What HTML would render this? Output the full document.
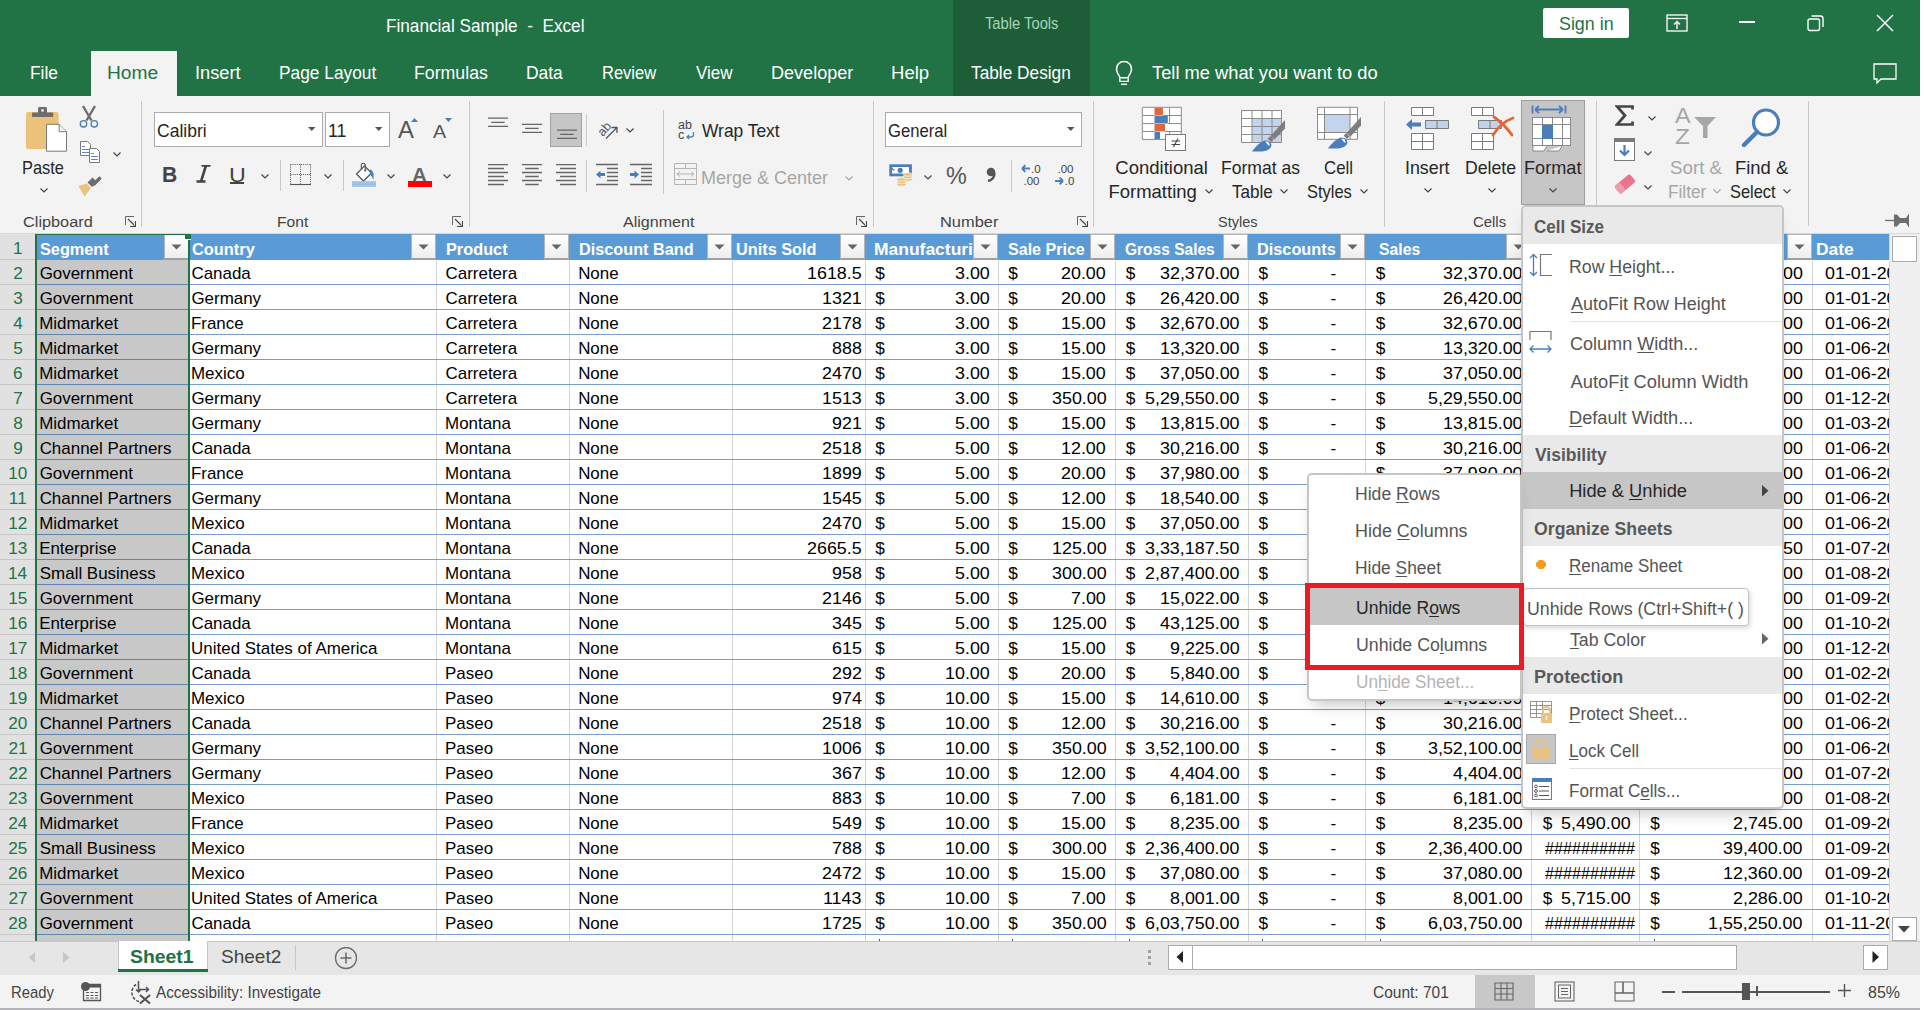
<!DOCTYPE html>
<html><head><meta charset="utf-8"><style>
html,body{margin:0;padding:0;}
body{width:1924px;height:1010px;overflow:hidden;position:relative;background:#fff;font-family:'Liberation Sans',sans-serif;}
u{text-decoration:underline;text-decoration-thickness:1px;text-underline-offset:2px;}
</style></head><body>
<div style="position:absolute;left:0px;top:0px;width:1920px;height:96px;background:#217346;"></div>
<div style="position:absolute;left:953px;top:0px;width:137px;height:96px;background:#1D5E39;"></div>
<div style="position:absolute;left:1920px;top:0px;width:4px;height:1010px;background:#FFFFFF;"></div>
<div style="position:absolute;left:385.63px;top:17.14px;font-family:'Liberation Sans',sans-serif;font-size:18.5px;line-height:18.5px;color:#fff;font-weight:normal;white-space:pre;transform:scaleX(0.9279);transform-origin:0 0;">Financial Sample  -  Excel</div>
<div style="position:absolute;left:984.71px;top:16.26px;font-family:'Liberation Sans',sans-serif;font-size:16px;line-height:16px;color:#A7D3B6;font-weight:normal;white-space:pre;transform:scaleX(0.9212);transform-origin:0 0;">Table Tools</div>
<div style="position:absolute;left:91px;top:51px;width:86px;height:45px;background:#F3F3F3;"></div>
<div style="position:absolute;left:29.61px;top:64.19px;font-family:'Liberation Sans',sans-serif;font-size:18.8px;line-height:18.8px;color:#fff;font-weight:normal;white-space:pre;transform:scaleX(0.9250);transform-origin:0 0;">File</div>
<div style="position:absolute;left:195.36px;top:64.19px;font-family:'Liberation Sans',sans-serif;font-size:18.8px;line-height:18.8px;color:#fff;font-weight:normal;white-space:pre;transform:scaleX(0.9699);transform-origin:0 0;">Insert</div>
<div style="position:absolute;left:278.61px;top:64.19px;font-family:'Liberation Sans',sans-serif;font-size:18.8px;line-height:18.8px;color:#fff;font-weight:normal;white-space:pre;transform:scaleX(0.9221);transform-origin:0 0;">Page Layout</div>
<div style="position:absolute;left:413.58px;top:64.19px;font-family:'Liberation Sans',sans-serif;font-size:18.8px;line-height:18.8px;color:#fff;font-weight:normal;white-space:pre;transform:scaleX(0.9439);transform-origin:0 0;">Formulas</div>
<div style="position:absolute;left:526.11px;top:64.19px;font-family:'Liberation Sans',sans-serif;font-size:18.8px;line-height:18.8px;color:#fff;font-weight:normal;white-space:pre;transform:scaleX(0.9274);transform-origin:0 0;">Data</div>
<div style="position:absolute;left:601.68px;top:64.19px;font-family:'Liberation Sans',sans-serif;font-size:18.8px;line-height:18.8px;color:#fff;font-weight:normal;white-space:pre;transform:scaleX(0.8792);transform-origin:0 0;">Review</div>
<div style="position:absolute;left:696.00px;top:64.19px;font-family:'Liberation Sans',sans-serif;font-size:18.8px;line-height:18.8px;color:#fff;font-weight:normal;white-space:pre;transform:scaleX(0.9049);transform-origin:0 0;">View</div>
<div style="position:absolute;left:770.55px;top:64.19px;font-family:'Liberation Sans',sans-serif;font-size:18.8px;line-height:18.8px;color:#fff;font-weight:normal;white-space:pre;transform:scaleX(0.9614);transform-origin:0 0;">Developer</div>
<div style="position:absolute;left:890.52px;top:64.19px;font-family:'Liberation Sans',sans-serif;font-size:18.8px;line-height:18.8px;color:#fff;font-weight:normal;white-space:pre;transform:scaleX(0.9868);transform-origin:0 0;">Help</div>
<div style="position:absolute;left:971.45px;top:64.19px;font-family:'Liberation Sans',sans-serif;font-size:18.8px;line-height:18.8px;color:#fff;font-weight:normal;white-space:pre;transform:scaleX(0.9193);transform-origin:0 0;">Table Design</div>
<div style="position:absolute;left:107.46px;top:64.19px;font-family:'Liberation Sans',sans-serif;font-size:18.8px;line-height:18.8px;color:#217346;font-weight:normal;white-space:pre;transform:scaleX(1.0216);transform-origin:0 0;">Home</div>
<div style="position:absolute;left:1152.03px;top:64.19px;font-family:'Liberation Sans',sans-serif;font-size:18.8px;line-height:18.8px;color:#fff;font-weight:normal;white-space:pre;transform:scaleX(0.9739);transform-origin:0 0;">Tell me what you want to do</div>
<div style="position:absolute;left:1543px;top:8px;width:86px;height:30px;background:#fff;border-radius:2px;"></div>
<div style="position:absolute;left:1558.79px;top:15.29px;font-family:'Liberation Sans',sans-serif;font-size:18.8px;line-height:18.8px;color:#217346;font-weight:normal;white-space:pre;transform:scaleX(0.9501);transform-origin:0 0;">Sign in</div>
<div style="position:absolute;left:0px;top:96px;width:1920px;height:137px;background:#F3F3F3;"></div>
<div style="position:absolute;left:0px;top:233px;width:1920px;height:1px;background:#D6D6D6;"></div>
<div style="position:absolute;left:141px;top:101px;width:1px;height:126px;background:#C8C8C8;"></div>
<div style="position:absolute;left:469px;top:101px;width:1px;height:126px;background:#C8C8C8;"></div>
<div style="position:absolute;left:873px;top:101px;width:1px;height:126px;background:#C8C8C8;"></div>
<div style="position:absolute;left:1093px;top:101px;width:1px;height:126px;background:#C8C8C8;"></div>
<div style="position:absolute;left:1384px;top:101px;width:1px;height:126px;background:#C8C8C8;"></div>
<div style="position:absolute;left:1596px;top:101px;width:1px;height:104px;background:#C8C8C8;"></div>
<div style="position:absolute;left:1808px;top:101px;width:1px;height:125px;background:#C8C8C8;"></div>
<div style="position:absolute;left:23.19px;top:214.28px;font-family:'Liberation Sans',sans-serif;font-size:15.5px;line-height:15.5px;color:#444444;font-weight:normal;white-space:pre;transform:scaleX(1.0510);transform-origin:0 0;">Clipboard</div>
<div style="position:absolute;left:276.55px;top:214.28px;font-family:'Liberation Sans',sans-serif;font-size:15.5px;line-height:15.5px;color:#444444;font-weight:normal;white-space:pre;transform:scaleX(1.0064);transform-origin:0 0;">Font</div>
<div style="position:absolute;left:622.50px;top:214.28px;font-family:'Liberation Sans',sans-serif;font-size:15.5px;line-height:15.5px;color:#444444;font-weight:normal;white-space:pre;transform:scaleX(1.0354);transform-origin:0 0;">Alignment</div>
<div style="position:absolute;left:940.49px;top:214.28px;font-family:'Liberation Sans',sans-serif;font-size:15.5px;line-height:15.5px;color:#444444;font-weight:normal;white-space:pre;transform:scaleX(1.0599);transform-origin:0 0;">Number</div>
<div style="position:absolute;left:1218.02px;top:214.28px;font-family:'Liberation Sans',sans-serif;font-size:15.5px;line-height:15.5px;color:#444444;font-weight:normal;white-space:pre;transform:scaleX(0.9338);transform-origin:0 0;">Styles</div>
<div style="position:absolute;left:1472.86px;top:214.28px;font-family:'Liberation Sans',sans-serif;font-size:15.5px;line-height:15.5px;color:#444444;font-weight:normal;white-space:pre;transform:scaleX(0.9605);transform-origin:0 0;">Cells</div>
<div style="position:absolute;left:0px;top:234px;width:1889px;height:707px;background:#FFFFFF;"></div>
<div style="position:absolute;left:0px;top:234px;width:35px;height:707px;background:#E1E1E1;"></div>
<div style="position:absolute;left:37px;top:260px;width:152px;height:681px;background:#C8C8C8;"></div>
<div style="position:absolute;left:37px;top:234px;width:1852px;height:25px;background:#5B9BD5;"></div>
<div style="position:absolute;left:37px;top:259px;width:1852px;height:1px;background:#5B9BD5;"></div>
<div style="position:absolute;left:436px;top:260px;width:1px;height:681px;background:#D4D4D4;"></div>
<div style="position:absolute;left:569px;top:260px;width:1px;height:681px;background:#D4D4D4;"></div>
<div style="position:absolute;left:732px;top:260px;width:1px;height:681px;background:#D4D4D4;"></div>
<div style="position:absolute;left:865px;top:260px;width:1px;height:681px;background:#D4D4D4;"></div>
<div style="position:absolute;left:998px;top:260px;width:1px;height:681px;background:#D4D4D4;"></div>
<div style="position:absolute;left:1115px;top:260px;width:1px;height:681px;background:#D4D4D4;"></div>
<div style="position:absolute;left:1248px;top:260px;width:1px;height:681px;background:#D4D4D4;"></div>
<div style="position:absolute;left:1365px;top:260px;width:1px;height:681px;background:#D4D4D4;"></div>
<div style="position:absolute;left:1531px;top:260px;width:1px;height:681px;background:#D4D4D4;"></div>
<div style="position:absolute;left:1639px;top:260px;width:1px;height:681px;background:#D4D4D4;"></div>
<div style="position:absolute;left:1812px;top:260px;width:1px;height:681px;background:#D4D4D4;"></div>
<div style="position:absolute;left:37px;top:284px;width:1852px;height:1px;background:#7A9FCC;"></div>
<div style="position:absolute;left:37px;top:284px;width:152px;height:1px;background:#5E86B0;"></div>
<div style="position:absolute;left:0px;top:284px;width:35px;height:1px;background:#C6C6C6;"></div>
<div style="position:absolute;left:37px;top:309px;width:1852px;height:1px;background:#7A9FCC;"></div>
<div style="position:absolute;left:37px;top:309px;width:152px;height:1px;background:#5E86B0;"></div>
<div style="position:absolute;left:0px;top:309px;width:35px;height:1px;background:#C6C6C6;"></div>
<div style="position:absolute;left:37px;top:334px;width:1852px;height:1px;background:#7A9FCC;"></div>
<div style="position:absolute;left:37px;top:334px;width:152px;height:1px;background:#5E86B0;"></div>
<div style="position:absolute;left:0px;top:334px;width:35px;height:1px;background:#C6C6C6;"></div>
<div style="position:absolute;left:37px;top:359px;width:1852px;height:1px;background:#7A9FCC;"></div>
<div style="position:absolute;left:37px;top:359px;width:152px;height:1px;background:#5E86B0;"></div>
<div style="position:absolute;left:0px;top:359px;width:35px;height:1px;background:#C6C6C6;"></div>
<div style="position:absolute;left:37px;top:384px;width:1852px;height:1px;background:#7A9FCC;"></div>
<div style="position:absolute;left:37px;top:384px;width:152px;height:1px;background:#5E86B0;"></div>
<div style="position:absolute;left:0px;top:384px;width:35px;height:1px;background:#C6C6C6;"></div>
<div style="position:absolute;left:37px;top:409px;width:1852px;height:1px;background:#7A9FCC;"></div>
<div style="position:absolute;left:37px;top:409px;width:152px;height:1px;background:#5E86B0;"></div>
<div style="position:absolute;left:0px;top:409px;width:35px;height:1px;background:#C6C6C6;"></div>
<div style="position:absolute;left:37px;top:434px;width:1852px;height:1px;background:#7A9FCC;"></div>
<div style="position:absolute;left:37px;top:434px;width:152px;height:1px;background:#5E86B0;"></div>
<div style="position:absolute;left:0px;top:434px;width:35px;height:1px;background:#C6C6C6;"></div>
<div style="position:absolute;left:37px;top:459px;width:1852px;height:1px;background:#7A9FCC;"></div>
<div style="position:absolute;left:37px;top:459px;width:152px;height:1px;background:#5E86B0;"></div>
<div style="position:absolute;left:0px;top:459px;width:35px;height:1px;background:#C6C6C6;"></div>
<div style="position:absolute;left:37px;top:484px;width:1852px;height:1px;background:#7A9FCC;"></div>
<div style="position:absolute;left:37px;top:484px;width:152px;height:1px;background:#5E86B0;"></div>
<div style="position:absolute;left:0px;top:484px;width:35px;height:1px;background:#C6C6C6;"></div>
<div style="position:absolute;left:37px;top:509px;width:1852px;height:1px;background:#7A9FCC;"></div>
<div style="position:absolute;left:37px;top:509px;width:152px;height:1px;background:#5E86B0;"></div>
<div style="position:absolute;left:0px;top:509px;width:35px;height:1px;background:#C6C6C6;"></div>
<div style="position:absolute;left:37px;top:534px;width:1852px;height:1px;background:#7A9FCC;"></div>
<div style="position:absolute;left:37px;top:534px;width:152px;height:1px;background:#5E86B0;"></div>
<div style="position:absolute;left:0px;top:534px;width:35px;height:1px;background:#C6C6C6;"></div>
<div style="position:absolute;left:37px;top:559px;width:1852px;height:1px;background:#7A9FCC;"></div>
<div style="position:absolute;left:37px;top:559px;width:152px;height:1px;background:#5E86B0;"></div>
<div style="position:absolute;left:0px;top:559px;width:35px;height:1px;background:#C6C6C6;"></div>
<div style="position:absolute;left:37px;top:584px;width:1852px;height:1px;background:#7A9FCC;"></div>
<div style="position:absolute;left:37px;top:584px;width:152px;height:1px;background:#5E86B0;"></div>
<div style="position:absolute;left:0px;top:584px;width:35px;height:1px;background:#C6C6C6;"></div>
<div style="position:absolute;left:37px;top:609px;width:1852px;height:1px;background:#7A9FCC;"></div>
<div style="position:absolute;left:37px;top:609px;width:152px;height:1px;background:#5E86B0;"></div>
<div style="position:absolute;left:0px;top:609px;width:35px;height:1px;background:#C6C6C6;"></div>
<div style="position:absolute;left:37px;top:634px;width:1852px;height:1px;background:#7A9FCC;"></div>
<div style="position:absolute;left:37px;top:634px;width:152px;height:1px;background:#5E86B0;"></div>
<div style="position:absolute;left:0px;top:634px;width:35px;height:1px;background:#C6C6C6;"></div>
<div style="position:absolute;left:37px;top:659px;width:1852px;height:1px;background:#7A9FCC;"></div>
<div style="position:absolute;left:37px;top:659px;width:152px;height:1px;background:#5E86B0;"></div>
<div style="position:absolute;left:0px;top:659px;width:35px;height:1px;background:#C6C6C6;"></div>
<div style="position:absolute;left:37px;top:684px;width:1852px;height:1px;background:#7A9FCC;"></div>
<div style="position:absolute;left:37px;top:684px;width:152px;height:1px;background:#5E86B0;"></div>
<div style="position:absolute;left:0px;top:684px;width:35px;height:1px;background:#C6C6C6;"></div>
<div style="position:absolute;left:37px;top:709px;width:1852px;height:1px;background:#7A9FCC;"></div>
<div style="position:absolute;left:37px;top:709px;width:152px;height:1px;background:#5E86B0;"></div>
<div style="position:absolute;left:0px;top:709px;width:35px;height:1px;background:#C6C6C6;"></div>
<div style="position:absolute;left:37px;top:734px;width:1852px;height:1px;background:#7A9FCC;"></div>
<div style="position:absolute;left:37px;top:734px;width:152px;height:1px;background:#5E86B0;"></div>
<div style="position:absolute;left:0px;top:734px;width:35px;height:1px;background:#C6C6C6;"></div>
<div style="position:absolute;left:37px;top:759px;width:1852px;height:1px;background:#7A9FCC;"></div>
<div style="position:absolute;left:37px;top:759px;width:152px;height:1px;background:#5E86B0;"></div>
<div style="position:absolute;left:0px;top:759px;width:35px;height:1px;background:#C6C6C6;"></div>
<div style="position:absolute;left:37px;top:784px;width:1852px;height:1px;background:#7A9FCC;"></div>
<div style="position:absolute;left:37px;top:784px;width:152px;height:1px;background:#5E86B0;"></div>
<div style="position:absolute;left:0px;top:784px;width:35px;height:1px;background:#C6C6C6;"></div>
<div style="position:absolute;left:37px;top:809px;width:1852px;height:1px;background:#7A9FCC;"></div>
<div style="position:absolute;left:37px;top:809px;width:152px;height:1px;background:#5E86B0;"></div>
<div style="position:absolute;left:0px;top:809px;width:35px;height:1px;background:#C6C6C6;"></div>
<div style="position:absolute;left:37px;top:834px;width:1852px;height:1px;background:#7A9FCC;"></div>
<div style="position:absolute;left:37px;top:834px;width:152px;height:1px;background:#5E86B0;"></div>
<div style="position:absolute;left:0px;top:834px;width:35px;height:1px;background:#C6C6C6;"></div>
<div style="position:absolute;left:37px;top:859px;width:1852px;height:1px;background:#7A9FCC;"></div>
<div style="position:absolute;left:37px;top:859px;width:152px;height:1px;background:#5E86B0;"></div>
<div style="position:absolute;left:0px;top:859px;width:35px;height:1px;background:#C6C6C6;"></div>
<div style="position:absolute;left:37px;top:884px;width:1852px;height:1px;background:#7A9FCC;"></div>
<div style="position:absolute;left:37px;top:884px;width:152px;height:1px;background:#5E86B0;"></div>
<div style="position:absolute;left:0px;top:884px;width:35px;height:1px;background:#C6C6C6;"></div>
<div style="position:absolute;left:37px;top:909px;width:1852px;height:1px;background:#7A9FCC;"></div>
<div style="position:absolute;left:37px;top:909px;width:152px;height:1px;background:#5E86B0;"></div>
<div style="position:absolute;left:0px;top:909px;width:35px;height:1px;background:#C6C6C6;"></div>
<div style="position:absolute;left:37px;top:934px;width:1852px;height:1px;background:#7A9FCC;"></div>
<div style="position:absolute;left:37px;top:934px;width:152px;height:1px;background:#5E86B0;"></div>
<div style="position:absolute;left:0px;top:934px;width:35px;height:1px;background:#C6C6C6;"></div>
<div style="position:absolute;left:0px;top:259px;width:35px;height:1px;background:#C6C6C6;"></div>
<div style="position:absolute;left:35px;top:234px;width:1px;height:707px;background:#C6C6C6;"></div>
<div style="position:absolute;left:1889px;top:234px;width:1px;height:707px;background:#D4D4D4;"></div>
<div style="position:absolute;left:40.27px;top:240.89px;font-family:'Liberation Sans',sans-serif;font-size:16.2px;line-height:16.2px;color:#FFFFFF;font-weight:bold;white-space:pre;transform:scaleX(1.0053);transform-origin:0 0;">Segment</div>
<div style="position:absolute;left:191.64px;top:240.89px;font-family:'Liberation Sans',sans-serif;font-size:16.2px;line-height:16.2px;color:#FFFFFF;font-weight:bold;white-space:pre;transform:scaleX(1.0112);transform-origin:0 0;">Country</div>
<div style="position:absolute;left:445.72px;top:240.89px;font-family:'Liberation Sans',sans-serif;font-size:16.2px;line-height:16.2px;color:#FFFFFF;font-weight:bold;white-space:pre;transform:scaleX(1.0070);transform-origin:0 0;">Product</div>
<div style="position:absolute;left:578.62px;top:240.89px;font-family:'Liberation Sans',sans-serif;font-size:16.2px;line-height:16.2px;color:#FFFFFF;font-weight:bold;white-space:pre;transform:scaleX(1.0041);transform-origin:0 0;">Discount Band</div>
<div style="position:absolute;left:735.82px;top:240.89px;font-family:'Liberation Sans',sans-serif;font-size:16.2px;line-height:16.2px;color:#FFFFFF;font-weight:bold;white-space:pre;transform:scaleX(1.0059);transform-origin:0 0;">Units Sold</div>
<div style="position:absolute;left:874.45px;top:240.89px;font-family:'Liberation Sans',sans-serif;font-size:16.2px;line-height:16.2px;color:#FFFFFF;font-weight:bold;white-space:pre;transform:scaleX(1.0787);transform-origin:0 0;">Manufacturi</div>
<div style="position:absolute;left:1008.18px;top:240.89px;font-family:'Liberation Sans',sans-serif;font-size:16.2px;line-height:16.2px;color:#FFFFFF;font-weight:bold;white-space:pre;transform:scaleX(0.9921);transform-origin:0 0;">Sale Price</div>
<div style="position:absolute;left:1125.08px;top:240.89px;font-family:'Liberation Sans',sans-serif;font-size:16.2px;line-height:16.2px;color:#FFFFFF;font-weight:bold;white-space:pre;transform:scaleX(0.9586);transform-origin:0 0;">Gross Sales</div>
<div style="position:absolute;left:1257.32px;top:240.89px;font-family:'Liberation Sans',sans-serif;font-size:16.2px;line-height:16.2px;color:#FFFFFF;font-weight:bold;white-space:pre;transform:scaleX(1.0058);transform-origin:0 0;">Discounts</div>
<div style="position:absolute;left:1379.08px;top:240.89px;font-family:'Liberation Sans',sans-serif;font-size:16.2px;line-height:16.2px;color:#FFFFFF;font-weight:bold;white-space:pre;transform:scaleX(0.9728);transform-origin:0 0;">Sales</div>
<div style="position:absolute;left:1815.95px;top:240.89px;font-family:'Liberation Sans',sans-serif;font-size:16.2px;line-height:16.2px;color:#FFFFFF;font-weight:bold;white-space:pre;transform:scaleX(1.0766);transform-origin:0 0;">Date</div>
<div style="position:absolute;left:164px;top:234px;width:25px;height:26px;box-sizing:border-box;border:1px solid #B4B4B4;background:linear-gradient(#FFFFFF,#EEEEEE);border-bottom:2px solid #A0A0A0;"></div>
<svg style="position:absolute;left:171px;top:244px;" width="11" height="6" viewBox="0 0 11 6"><path d="M0.5 0.5 L10.5 0.5 L5.5 5.5Z" fill="#666"/></svg>
<div style="position:absolute;left:411px;top:234px;width:25px;height:26px;box-sizing:border-box;border:1px solid #B4B4B4;background:linear-gradient(#FFFFFF,#EEEEEE);border-bottom:2px solid #A0A0A0;"></div>
<svg style="position:absolute;left:418px;top:244px;" width="11" height="6" viewBox="0 0 11 6"><path d="M0.5 0.5 L10.5 0.5 L5.5 5.5Z" fill="#666"/></svg>
<div style="position:absolute;left:544px;top:234px;width:25px;height:26px;box-sizing:border-box;border:1px solid #B4B4B4;background:linear-gradient(#FFFFFF,#EEEEEE);border-bottom:2px solid #A0A0A0;"></div>
<svg style="position:absolute;left:551px;top:244px;" width="11" height="6" viewBox="0 0 11 6"><path d="M0.5 0.5 L10.5 0.5 L5.5 5.5Z" fill="#666"/></svg>
<div style="position:absolute;left:707px;top:234px;width:25px;height:26px;box-sizing:border-box;border:1px solid #B4B4B4;background:linear-gradient(#FFFFFF,#EEEEEE);border-bottom:2px solid #A0A0A0;"></div>
<svg style="position:absolute;left:714px;top:244px;" width="11" height="6" viewBox="0 0 11 6"><path d="M0.5 0.5 L10.5 0.5 L5.5 5.5Z" fill="#666"/></svg>
<div style="position:absolute;left:840px;top:234px;width:25px;height:26px;box-sizing:border-box;border:1px solid #B4B4B4;background:linear-gradient(#FFFFFF,#EEEEEE);border-bottom:2px solid #A0A0A0;"></div>
<svg style="position:absolute;left:847px;top:244px;" width="11" height="6" viewBox="0 0 11 6"><path d="M0.5 0.5 L10.5 0.5 L5.5 5.5Z" fill="#666"/></svg>
<div style="position:absolute;left:973px;top:234px;width:25px;height:26px;box-sizing:border-box;border:1px solid #B4B4B4;background:linear-gradient(#FFFFFF,#EEEEEE);border-bottom:2px solid #A0A0A0;"></div>
<svg style="position:absolute;left:980px;top:244px;" width="11" height="6" viewBox="0 0 11 6"><path d="M0.5 0.5 L10.5 0.5 L5.5 5.5Z" fill="#666"/></svg>
<div style="position:absolute;left:1090px;top:234px;width:25px;height:26px;box-sizing:border-box;border:1px solid #B4B4B4;background:linear-gradient(#FFFFFF,#EEEEEE);border-bottom:2px solid #A0A0A0;"></div>
<svg style="position:absolute;left:1097px;top:244px;" width="11" height="6" viewBox="0 0 11 6"><path d="M0.5 0.5 L10.5 0.5 L5.5 5.5Z" fill="#666"/></svg>
<div style="position:absolute;left:1223px;top:234px;width:25px;height:26px;box-sizing:border-box;border:1px solid #B4B4B4;background:linear-gradient(#FFFFFF,#EEEEEE);border-bottom:2px solid #A0A0A0;"></div>
<svg style="position:absolute;left:1230px;top:244px;" width="11" height="6" viewBox="0 0 11 6"><path d="M0.5 0.5 L10.5 0.5 L5.5 5.5Z" fill="#666"/></svg>
<div style="position:absolute;left:1340px;top:234px;width:25px;height:26px;box-sizing:border-box;border:1px solid #B4B4B4;background:linear-gradient(#FFFFFF,#EEEEEE);border-bottom:2px solid #A0A0A0;"></div>
<svg style="position:absolute;left:1347px;top:244px;" width="11" height="6" viewBox="0 0 11 6"><path d="M0.5 0.5 L10.5 0.5 L5.5 5.5Z" fill="#666"/></svg>
<div style="position:absolute;left:1506px;top:234px;width:25px;height:26px;box-sizing:border-box;border:1px solid #B4B4B4;background:linear-gradient(#FFFFFF,#EEEEEE);border-bottom:2px solid #A0A0A0;"></div>
<svg style="position:absolute;left:1513px;top:244px;" width="11" height="6" viewBox="0 0 11 6"><path d="M0.5 0.5 L10.5 0.5 L5.5 5.5Z" fill="#666"/></svg>
<div style="position:absolute;left:1614px;top:234px;width:25px;height:26px;box-sizing:border-box;border:1px solid #B4B4B4;background:linear-gradient(#FFFFFF,#EEEEEE);border-bottom:2px solid #A0A0A0;"></div>
<svg style="position:absolute;left:1621px;top:244px;" width="11" height="6" viewBox="0 0 11 6"><path d="M0.5 0.5 L10.5 0.5 L5.5 5.5Z" fill="#666"/></svg>
<div style="position:absolute;left:1787px;top:234px;width:25px;height:26px;box-sizing:border-box;border:1px solid #B4B4B4;background:linear-gradient(#FFFFFF,#EEEEEE);border-bottom:2px solid #A0A0A0;"></div>
<svg style="position:absolute;left:1794px;top:244px;" width="11" height="6" viewBox="0 0 11 6"><path d="M0.5 0.5 L10.5 0.5 L5.5 5.5Z" fill="#666"/></svg>
<div style="position:absolute;left:35px;top:234px;width:2px;height:707px;background:#217346;"></div>
<div style="position:absolute;left:188px;top:240px;width:2px;height:701px;background:#217346;"></div>
<div style="position:absolute;left:35px;top:234px;width:155px;height:1px;background:#217346;"></div>
<div style="position:absolute;left:185px;top:234px;width:6px;height:5px;background:#217346;"></div>
<div style="position:absolute;left:185px;top:239px;width:6px;height:1px;background:#FFFFFF;"></div>
<div style="position:absolute;left:13.18px;top:265.24px;font-family:'Liberation Sans',sans-serif;font-size:17.2px;line-height:17.2px;color:#217346;font-weight:normal;white-space:pre;">2</div>
<div style="position:absolute;left:39.65px;top:265.95px;font-family:'Liberation Sans',sans-serif;font-size:16.95px;line-height:16.95px;color:#000;font-weight:normal;white-space:pre;">Government</div>
<div style="position:absolute;left:191.45px;top:265.95px;font-family:'Liberation Sans',sans-serif;font-size:16.95px;line-height:16.95px;color:#000;font-weight:normal;white-space:pre;">Canada</div>
<div style="position:absolute;left:445.55px;top:265.95px;font-family:'Liberation Sans',sans-serif;font-size:16.95px;line-height:16.95px;color:#000;font-weight:normal;white-space:pre;">Carretera</div>
<div style="position:absolute;left:578.14px;top:265.95px;font-family:'Liberation Sans',sans-serif;font-size:16.95px;line-height:16.95px;color:#000;font-weight:normal;white-space:pre;">None</div>
<div style="position:absolute;left:806.93px;top:265.24px;font-family:'Liberation Sans',sans-serif;font-size:17.2px;line-height:17.2px;color:#000;font-weight:normal;white-space:pre;transform:scaleX(1.0400);transform-origin:0 0;">1618.5</div>
<div style="position:absolute;left:875.23px;top:265.24px;font-family:'Liberation Sans',sans-serif;font-size:17.2px;line-height:17.2px;color:#000;font-weight:normal;white-space:pre;">$</div>
<div style="position:absolute;left:954.83px;top:265.24px;font-family:'Liberation Sans',sans-serif;font-size:17.2px;line-height:17.2px;color:#000;font-weight:normal;white-space:pre;transform:scaleX(1.0400);transform-origin:0 0;">3.00</div>
<div style="position:absolute;left:1008.23px;top:265.24px;font-family:'Liberation Sans',sans-serif;font-size:17.2px;line-height:17.2px;color:#000;font-weight:normal;white-space:pre;">$</div>
<div style="position:absolute;left:1061.48px;top:265.24px;font-family:'Liberation Sans',sans-serif;font-size:17.2px;line-height:17.2px;color:#000;font-weight:normal;white-space:pre;transform:scaleX(1.0400);transform-origin:0 0;">20.00</div>
<div style="position:absolute;left:1125.63px;top:265.24px;font-family:'Liberation Sans',sans-serif;font-size:17.2px;line-height:17.2px;color:#000;font-weight:normal;white-space:pre;">$</div>
<div style="position:absolute;left:1160.07px;top:265.24px;font-family:'Liberation Sans',sans-serif;font-size:17.2px;line-height:17.2px;color:#000;font-weight:normal;white-space:pre;transform:scaleX(1.0400);transform-origin:0 0;">32,370.00</div>
<div style="position:absolute;left:1258.43px;top:265.24px;font-family:'Liberation Sans',sans-serif;font-size:17.2px;line-height:17.2px;color:#000;font-weight:normal;white-space:pre;">$</div>
<div style="position:absolute;left:1330.51px;top:265.24px;font-family:'Liberation Sans',sans-serif;font-size:17.2px;line-height:17.2px;color:#000;font-weight:normal;white-space:pre;">-</div>
<div style="position:absolute;left:1375.83px;top:265.24px;font-family:'Liberation Sans',sans-serif;font-size:17.2px;line-height:17.2px;color:#000;font-weight:normal;white-space:pre;">$</div>
<div style="position:absolute;left:1443.07px;top:265.24px;font-family:'Liberation Sans',sans-serif;font-size:17.2px;line-height:17.2px;color:#000;font-weight:normal;white-space:pre;transform:scaleX(1.0400);transform-origin:0 0;">32,370.00</div>
<div style="position:absolute;left:1783.05px;top:265.24px;font-family:'Liberation Sans',sans-serif;font-size:17.2px;line-height:17.2px;color:#000;font-weight:normal;white-space:pre;transform:scaleX(1.0400);transform-origin:0 0;">00</div>
<div style="position:absolute;left:1824.96px;top:265.24px;font-family:'Liberation Sans',sans-serif;font-size:17.2px;line-height:17.2px;color:#000;font-weight:normal;white-space:pre;transform:scaleX(1.0400);transform-origin:0 0;">01-01-20</div>
<div style="position:absolute;left:13.27px;top:290.24px;font-family:'Liberation Sans',sans-serif;font-size:17.2px;line-height:17.2px;color:#217346;font-weight:normal;white-space:pre;">3</div>
<div style="position:absolute;left:39.65px;top:290.95px;font-family:'Liberation Sans',sans-serif;font-size:16.95px;line-height:16.95px;color:#000;font-weight:normal;white-space:pre;">Government</div>
<div style="position:absolute;left:191.45px;top:290.95px;font-family:'Liberation Sans',sans-serif;font-size:16.95px;line-height:16.95px;color:#000;font-weight:normal;white-space:pre;">Germany</div>
<div style="position:absolute;left:445.55px;top:290.95px;font-family:'Liberation Sans',sans-serif;font-size:16.95px;line-height:16.95px;color:#000;font-weight:normal;white-space:pre;">Carretera</div>
<div style="position:absolute;left:578.14px;top:290.95px;font-family:'Liberation Sans',sans-serif;font-size:16.95px;line-height:16.95px;color:#000;font-weight:normal;white-space:pre;">None</div>
<div style="position:absolute;left:822.03px;top:290.24px;font-family:'Liberation Sans',sans-serif;font-size:17.2px;line-height:17.2px;color:#000;font-weight:normal;white-space:pre;transform:scaleX(1.0400);transform-origin:0 0;">1321</div>
<div style="position:absolute;left:875.23px;top:290.24px;font-family:'Liberation Sans',sans-serif;font-size:17.2px;line-height:17.2px;color:#000;font-weight:normal;white-space:pre;">$</div>
<div style="position:absolute;left:954.83px;top:290.24px;font-family:'Liberation Sans',sans-serif;font-size:17.2px;line-height:17.2px;color:#000;font-weight:normal;white-space:pre;transform:scaleX(1.0400);transform-origin:0 0;">3.00</div>
<div style="position:absolute;left:1008.23px;top:290.24px;font-family:'Liberation Sans',sans-serif;font-size:17.2px;line-height:17.2px;color:#000;font-weight:normal;white-space:pre;">$</div>
<div style="position:absolute;left:1061.48px;top:290.24px;font-family:'Liberation Sans',sans-serif;font-size:17.2px;line-height:17.2px;color:#000;font-weight:normal;white-space:pre;transform:scaleX(1.0400);transform-origin:0 0;">20.00</div>
<div style="position:absolute;left:1125.63px;top:290.24px;font-family:'Liberation Sans',sans-serif;font-size:17.2px;line-height:17.2px;color:#000;font-weight:normal;white-space:pre;">$</div>
<div style="position:absolute;left:1160.07px;top:290.24px;font-family:'Liberation Sans',sans-serif;font-size:17.2px;line-height:17.2px;color:#000;font-weight:normal;white-space:pre;transform:scaleX(1.0400);transform-origin:0 0;">26,420.00</div>
<div style="position:absolute;left:1258.43px;top:290.24px;font-family:'Liberation Sans',sans-serif;font-size:17.2px;line-height:17.2px;color:#000;font-weight:normal;white-space:pre;">$</div>
<div style="position:absolute;left:1330.51px;top:290.24px;font-family:'Liberation Sans',sans-serif;font-size:17.2px;line-height:17.2px;color:#000;font-weight:normal;white-space:pre;">-</div>
<div style="position:absolute;left:1375.83px;top:290.24px;font-family:'Liberation Sans',sans-serif;font-size:17.2px;line-height:17.2px;color:#000;font-weight:normal;white-space:pre;">$</div>
<div style="position:absolute;left:1443.07px;top:290.24px;font-family:'Liberation Sans',sans-serif;font-size:17.2px;line-height:17.2px;color:#000;font-weight:normal;white-space:pre;transform:scaleX(1.0400);transform-origin:0 0;">26,420.00</div>
<div style="position:absolute;left:1783.05px;top:290.24px;font-family:'Liberation Sans',sans-serif;font-size:17.2px;line-height:17.2px;color:#000;font-weight:normal;white-space:pre;transform:scaleX(1.0400);transform-origin:0 0;">00</div>
<div style="position:absolute;left:1824.96px;top:290.24px;font-family:'Liberation Sans',sans-serif;font-size:17.2px;line-height:17.2px;color:#000;font-weight:normal;white-space:pre;transform:scaleX(1.0400);transform-origin:0 0;">01-01-20</div>
<div style="position:absolute;left:13.27px;top:315.24px;font-family:'Liberation Sans',sans-serif;font-size:17.2px;line-height:17.2px;color:#217346;font-weight:normal;white-space:pre;">4</div>
<div style="position:absolute;left:39.14px;top:315.95px;font-family:'Liberation Sans',sans-serif;font-size:16.95px;line-height:16.95px;color:#000;font-weight:normal;white-space:pre;">Midmarket</div>
<div style="position:absolute;left:190.94px;top:315.95px;font-family:'Liberation Sans',sans-serif;font-size:16.95px;line-height:16.95px;color:#000;font-weight:normal;white-space:pre;">France</div>
<div style="position:absolute;left:445.55px;top:315.95px;font-family:'Liberation Sans',sans-serif;font-size:16.95px;line-height:16.95px;color:#000;font-weight:normal;white-space:pre;">Carretera</div>
<div style="position:absolute;left:578.14px;top:315.95px;font-family:'Liberation Sans',sans-serif;font-size:16.95px;line-height:16.95px;color:#000;font-weight:normal;white-space:pre;">None</div>
<div style="position:absolute;left:821.85px;top:315.24px;font-family:'Liberation Sans',sans-serif;font-size:17.2px;line-height:17.2px;color:#000;font-weight:normal;white-space:pre;transform:scaleX(1.0400);transform-origin:0 0;">2178</div>
<div style="position:absolute;left:875.23px;top:315.24px;font-family:'Liberation Sans',sans-serif;font-size:17.2px;line-height:17.2px;color:#000;font-weight:normal;white-space:pre;">$</div>
<div style="position:absolute;left:954.83px;top:315.24px;font-family:'Liberation Sans',sans-serif;font-size:17.2px;line-height:17.2px;color:#000;font-weight:normal;white-space:pre;transform:scaleX(1.0400);transform-origin:0 0;">3.00</div>
<div style="position:absolute;left:1008.23px;top:315.24px;font-family:'Liberation Sans',sans-serif;font-size:17.2px;line-height:17.2px;color:#000;font-weight:normal;white-space:pre;">$</div>
<div style="position:absolute;left:1061.48px;top:315.24px;font-family:'Liberation Sans',sans-serif;font-size:17.2px;line-height:17.2px;color:#000;font-weight:normal;white-space:pre;transform:scaleX(1.0400);transform-origin:0 0;">15.00</div>
<div style="position:absolute;left:1125.63px;top:315.24px;font-family:'Liberation Sans',sans-serif;font-size:17.2px;line-height:17.2px;color:#000;font-weight:normal;white-space:pre;">$</div>
<div style="position:absolute;left:1160.07px;top:315.24px;font-family:'Liberation Sans',sans-serif;font-size:17.2px;line-height:17.2px;color:#000;font-weight:normal;white-space:pre;transform:scaleX(1.0400);transform-origin:0 0;">32,670.00</div>
<div style="position:absolute;left:1258.43px;top:315.24px;font-family:'Liberation Sans',sans-serif;font-size:17.2px;line-height:17.2px;color:#000;font-weight:normal;white-space:pre;">$</div>
<div style="position:absolute;left:1330.51px;top:315.24px;font-family:'Liberation Sans',sans-serif;font-size:17.2px;line-height:17.2px;color:#000;font-weight:normal;white-space:pre;">-</div>
<div style="position:absolute;left:1375.83px;top:315.24px;font-family:'Liberation Sans',sans-serif;font-size:17.2px;line-height:17.2px;color:#000;font-weight:normal;white-space:pre;">$</div>
<div style="position:absolute;left:1443.07px;top:315.24px;font-family:'Liberation Sans',sans-serif;font-size:17.2px;line-height:17.2px;color:#000;font-weight:normal;white-space:pre;transform:scaleX(1.0400);transform-origin:0 0;">32,670.00</div>
<div style="position:absolute;left:1783.05px;top:315.24px;font-family:'Liberation Sans',sans-serif;font-size:17.2px;line-height:17.2px;color:#000;font-weight:normal;white-space:pre;transform:scaleX(1.0400);transform-origin:0 0;">00</div>
<div style="position:absolute;left:1824.96px;top:315.24px;font-family:'Liberation Sans',sans-serif;font-size:17.2px;line-height:17.2px;color:#000;font-weight:normal;white-space:pre;transform:scaleX(1.0400);transform-origin:0 0;">01-06-20</div>
<div style="position:absolute;left:13.18px;top:340.24px;font-family:'Liberation Sans',sans-serif;font-size:17.2px;line-height:17.2px;color:#217346;font-weight:normal;white-space:pre;">5</div>
<div style="position:absolute;left:39.14px;top:340.95px;font-family:'Liberation Sans',sans-serif;font-size:16.95px;line-height:16.95px;color:#000;font-weight:normal;white-space:pre;">Midmarket</div>
<div style="position:absolute;left:191.45px;top:340.95px;font-family:'Liberation Sans',sans-serif;font-size:16.95px;line-height:16.95px;color:#000;font-weight:normal;white-space:pre;">Germany</div>
<div style="position:absolute;left:445.55px;top:340.95px;font-family:'Liberation Sans',sans-serif;font-size:16.95px;line-height:16.95px;color:#000;font-weight:normal;white-space:pre;">Carretera</div>
<div style="position:absolute;left:578.14px;top:340.95px;font-family:'Liberation Sans',sans-serif;font-size:16.95px;line-height:16.95px;color:#000;font-weight:normal;white-space:pre;">None</div>
<div style="position:absolute;left:831.80px;top:340.24px;font-family:'Liberation Sans',sans-serif;font-size:17.2px;line-height:17.2px;color:#000;font-weight:normal;white-space:pre;transform:scaleX(1.0400);transform-origin:0 0;">888</div>
<div style="position:absolute;left:875.23px;top:340.24px;font-family:'Liberation Sans',sans-serif;font-size:17.2px;line-height:17.2px;color:#000;font-weight:normal;white-space:pre;">$</div>
<div style="position:absolute;left:954.83px;top:340.24px;font-family:'Liberation Sans',sans-serif;font-size:17.2px;line-height:17.2px;color:#000;font-weight:normal;white-space:pre;transform:scaleX(1.0400);transform-origin:0 0;">3.00</div>
<div style="position:absolute;left:1008.23px;top:340.24px;font-family:'Liberation Sans',sans-serif;font-size:17.2px;line-height:17.2px;color:#000;font-weight:normal;white-space:pre;">$</div>
<div style="position:absolute;left:1061.48px;top:340.24px;font-family:'Liberation Sans',sans-serif;font-size:17.2px;line-height:17.2px;color:#000;font-weight:normal;white-space:pre;transform:scaleX(1.0400);transform-origin:0 0;">15.00</div>
<div style="position:absolute;left:1125.63px;top:340.24px;font-family:'Liberation Sans',sans-serif;font-size:17.2px;line-height:17.2px;color:#000;font-weight:normal;white-space:pre;">$</div>
<div style="position:absolute;left:1160.07px;top:340.24px;font-family:'Liberation Sans',sans-serif;font-size:17.2px;line-height:17.2px;color:#000;font-weight:normal;white-space:pre;transform:scaleX(1.0400);transform-origin:0 0;">13,320.00</div>
<div style="position:absolute;left:1258.43px;top:340.24px;font-family:'Liberation Sans',sans-serif;font-size:17.2px;line-height:17.2px;color:#000;font-weight:normal;white-space:pre;">$</div>
<div style="position:absolute;left:1330.51px;top:340.24px;font-family:'Liberation Sans',sans-serif;font-size:17.2px;line-height:17.2px;color:#000;font-weight:normal;white-space:pre;">-</div>
<div style="position:absolute;left:1375.83px;top:340.24px;font-family:'Liberation Sans',sans-serif;font-size:17.2px;line-height:17.2px;color:#000;font-weight:normal;white-space:pre;">$</div>
<div style="position:absolute;left:1443.07px;top:340.24px;font-family:'Liberation Sans',sans-serif;font-size:17.2px;line-height:17.2px;color:#000;font-weight:normal;white-space:pre;transform:scaleX(1.0400);transform-origin:0 0;">13,320.00</div>
<div style="position:absolute;left:1783.05px;top:340.24px;font-family:'Liberation Sans',sans-serif;font-size:17.2px;line-height:17.2px;color:#000;font-weight:normal;white-space:pre;transform:scaleX(1.0400);transform-origin:0 0;">00</div>
<div style="position:absolute;left:1824.96px;top:340.24px;font-family:'Liberation Sans',sans-serif;font-size:17.2px;line-height:17.2px;color:#000;font-weight:normal;white-space:pre;transform:scaleX(1.0400);transform-origin:0 0;">01-06-20</div>
<div style="position:absolute;left:13.10px;top:365.24px;font-family:'Liberation Sans',sans-serif;font-size:17.2px;line-height:17.2px;color:#217346;font-weight:normal;white-space:pre;">6</div>
<div style="position:absolute;left:39.14px;top:365.95px;font-family:'Liberation Sans',sans-serif;font-size:16.95px;line-height:16.95px;color:#000;font-weight:normal;white-space:pre;">Midmarket</div>
<div style="position:absolute;left:190.94px;top:365.95px;font-family:'Liberation Sans',sans-serif;font-size:16.95px;line-height:16.95px;color:#000;font-weight:normal;white-space:pre;">Mexico</div>
<div style="position:absolute;left:445.55px;top:365.95px;font-family:'Liberation Sans',sans-serif;font-size:16.95px;line-height:16.95px;color:#000;font-weight:normal;white-space:pre;">Carretera</div>
<div style="position:absolute;left:578.14px;top:365.95px;font-family:'Liberation Sans',sans-serif;font-size:16.95px;line-height:16.95px;color:#000;font-weight:normal;white-space:pre;">None</div>
<div style="position:absolute;left:821.85px;top:365.24px;font-family:'Liberation Sans',sans-serif;font-size:17.2px;line-height:17.2px;color:#000;font-weight:normal;white-space:pre;transform:scaleX(1.0400);transform-origin:0 0;">2470</div>
<div style="position:absolute;left:875.23px;top:365.24px;font-family:'Liberation Sans',sans-serif;font-size:17.2px;line-height:17.2px;color:#000;font-weight:normal;white-space:pre;">$</div>
<div style="position:absolute;left:954.83px;top:365.24px;font-family:'Liberation Sans',sans-serif;font-size:17.2px;line-height:17.2px;color:#000;font-weight:normal;white-space:pre;transform:scaleX(1.0400);transform-origin:0 0;">3.00</div>
<div style="position:absolute;left:1008.23px;top:365.24px;font-family:'Liberation Sans',sans-serif;font-size:17.2px;line-height:17.2px;color:#000;font-weight:normal;white-space:pre;">$</div>
<div style="position:absolute;left:1061.48px;top:365.24px;font-family:'Liberation Sans',sans-serif;font-size:17.2px;line-height:17.2px;color:#000;font-weight:normal;white-space:pre;transform:scaleX(1.0400);transform-origin:0 0;">15.00</div>
<div style="position:absolute;left:1125.63px;top:365.24px;font-family:'Liberation Sans',sans-serif;font-size:17.2px;line-height:17.2px;color:#000;font-weight:normal;white-space:pre;">$</div>
<div style="position:absolute;left:1160.07px;top:365.24px;font-family:'Liberation Sans',sans-serif;font-size:17.2px;line-height:17.2px;color:#000;font-weight:normal;white-space:pre;transform:scaleX(1.0400);transform-origin:0 0;">37,050.00</div>
<div style="position:absolute;left:1258.43px;top:365.24px;font-family:'Liberation Sans',sans-serif;font-size:17.2px;line-height:17.2px;color:#000;font-weight:normal;white-space:pre;">$</div>
<div style="position:absolute;left:1330.51px;top:365.24px;font-family:'Liberation Sans',sans-serif;font-size:17.2px;line-height:17.2px;color:#000;font-weight:normal;white-space:pre;">-</div>
<div style="position:absolute;left:1375.83px;top:365.24px;font-family:'Liberation Sans',sans-serif;font-size:17.2px;line-height:17.2px;color:#000;font-weight:normal;white-space:pre;">$</div>
<div style="position:absolute;left:1443.07px;top:365.24px;font-family:'Liberation Sans',sans-serif;font-size:17.2px;line-height:17.2px;color:#000;font-weight:normal;white-space:pre;transform:scaleX(1.0400);transform-origin:0 0;">37,050.00</div>
<div style="position:absolute;left:1783.05px;top:365.24px;font-family:'Liberation Sans',sans-serif;font-size:17.2px;line-height:17.2px;color:#000;font-weight:normal;white-space:pre;transform:scaleX(1.0400);transform-origin:0 0;">00</div>
<div style="position:absolute;left:1824.96px;top:365.24px;font-family:'Liberation Sans',sans-serif;font-size:17.2px;line-height:17.2px;color:#000;font-weight:normal;white-space:pre;transform:scaleX(1.0400);transform-origin:0 0;">01-06-20</div>
<div style="position:absolute;left:13.18px;top:390.24px;font-family:'Liberation Sans',sans-serif;font-size:17.2px;line-height:17.2px;color:#217346;font-weight:normal;white-space:pre;">7</div>
<div style="position:absolute;left:39.65px;top:390.95px;font-family:'Liberation Sans',sans-serif;font-size:16.95px;line-height:16.95px;color:#000;font-weight:normal;white-space:pre;">Government</div>
<div style="position:absolute;left:191.45px;top:390.95px;font-family:'Liberation Sans',sans-serif;font-size:16.95px;line-height:16.95px;color:#000;font-weight:normal;white-space:pre;">Germany</div>
<div style="position:absolute;left:445.55px;top:390.95px;font-family:'Liberation Sans',sans-serif;font-size:16.95px;line-height:16.95px;color:#000;font-weight:normal;white-space:pre;">Carretera</div>
<div style="position:absolute;left:578.14px;top:390.95px;font-family:'Liberation Sans',sans-serif;font-size:16.95px;line-height:16.95px;color:#000;font-weight:normal;white-space:pre;">None</div>
<div style="position:absolute;left:821.85px;top:390.24px;font-family:'Liberation Sans',sans-serif;font-size:17.2px;line-height:17.2px;color:#000;font-weight:normal;white-space:pre;transform:scaleX(1.0400);transform-origin:0 0;">1513</div>
<div style="position:absolute;left:875.23px;top:390.24px;font-family:'Liberation Sans',sans-serif;font-size:17.2px;line-height:17.2px;color:#000;font-weight:normal;white-space:pre;">$</div>
<div style="position:absolute;left:954.83px;top:390.24px;font-family:'Liberation Sans',sans-serif;font-size:17.2px;line-height:17.2px;color:#000;font-weight:normal;white-space:pre;transform:scaleX(1.0400);transform-origin:0 0;">3.00</div>
<div style="position:absolute;left:1008.23px;top:390.24px;font-family:'Liberation Sans',sans-serif;font-size:17.2px;line-height:17.2px;color:#000;font-weight:normal;white-space:pre;">$</div>
<div style="position:absolute;left:1051.53px;top:390.24px;font-family:'Liberation Sans',sans-serif;font-size:17.2px;line-height:17.2px;color:#000;font-weight:normal;white-space:pre;transform:scaleX(1.0400);transform-origin:0 0;">350.00</div>
<div style="position:absolute;left:1125.63px;top:390.24px;font-family:'Liberation Sans',sans-serif;font-size:17.2px;line-height:17.2px;color:#000;font-weight:normal;white-space:pre;">$</div>
<div style="position:absolute;left:1145.15px;top:390.24px;font-family:'Liberation Sans',sans-serif;font-size:17.2px;line-height:17.2px;color:#000;font-weight:normal;white-space:pre;transform:scaleX(1.0400);transform-origin:0 0;">5,29,550.00</div>
<div style="position:absolute;left:1258.43px;top:390.24px;font-family:'Liberation Sans',sans-serif;font-size:17.2px;line-height:17.2px;color:#000;font-weight:normal;white-space:pre;">$</div>
<div style="position:absolute;left:1330.51px;top:390.24px;font-family:'Liberation Sans',sans-serif;font-size:17.2px;line-height:17.2px;color:#000;font-weight:normal;white-space:pre;">-</div>
<div style="position:absolute;left:1375.83px;top:390.24px;font-family:'Liberation Sans',sans-serif;font-size:17.2px;line-height:17.2px;color:#000;font-weight:normal;white-space:pre;">$</div>
<div style="position:absolute;left:1428.15px;top:390.24px;font-family:'Liberation Sans',sans-serif;font-size:17.2px;line-height:17.2px;color:#000;font-weight:normal;white-space:pre;transform:scaleX(1.0400);transform-origin:0 0;">5,29,550.00</div>
<div style="position:absolute;left:1783.05px;top:390.24px;font-family:'Liberation Sans',sans-serif;font-size:17.2px;line-height:17.2px;color:#000;font-weight:normal;white-space:pre;transform:scaleX(1.0400);transform-origin:0 0;">00</div>
<div style="position:absolute;left:1824.96px;top:390.24px;font-family:'Liberation Sans',sans-serif;font-size:17.2px;line-height:17.2px;color:#000;font-weight:normal;white-space:pre;transform:scaleX(1.0400);transform-origin:0 0;">01-12-20</div>
<div style="position:absolute;left:13.18px;top:415.24px;font-family:'Liberation Sans',sans-serif;font-size:17.2px;line-height:17.2px;color:#217346;font-weight:normal;white-space:pre;">8</div>
<div style="position:absolute;left:39.14px;top:415.95px;font-family:'Liberation Sans',sans-serif;font-size:16.95px;line-height:16.95px;color:#000;font-weight:normal;white-space:pre;">Midmarket</div>
<div style="position:absolute;left:191.45px;top:415.95px;font-family:'Liberation Sans',sans-serif;font-size:16.95px;line-height:16.95px;color:#000;font-weight:normal;white-space:pre;">Germany</div>
<div style="position:absolute;left:445.04px;top:415.95px;font-family:'Liberation Sans',sans-serif;font-size:16.95px;line-height:16.95px;color:#000;font-weight:normal;white-space:pre;">Montana</div>
<div style="position:absolute;left:578.14px;top:415.95px;font-family:'Liberation Sans',sans-serif;font-size:16.95px;line-height:16.95px;color:#000;font-weight:normal;white-space:pre;">None</div>
<div style="position:absolute;left:831.98px;top:415.24px;font-family:'Liberation Sans',sans-serif;font-size:17.2px;line-height:17.2px;color:#000;font-weight:normal;white-space:pre;transform:scaleX(1.0400);transform-origin:0 0;">921</div>
<div style="position:absolute;left:875.23px;top:415.24px;font-family:'Liberation Sans',sans-serif;font-size:17.2px;line-height:17.2px;color:#000;font-weight:normal;white-space:pre;">$</div>
<div style="position:absolute;left:954.83px;top:415.24px;font-family:'Liberation Sans',sans-serif;font-size:17.2px;line-height:17.2px;color:#000;font-weight:normal;white-space:pre;transform:scaleX(1.0400);transform-origin:0 0;">5.00</div>
<div style="position:absolute;left:1008.23px;top:415.24px;font-family:'Liberation Sans',sans-serif;font-size:17.2px;line-height:17.2px;color:#000;font-weight:normal;white-space:pre;">$</div>
<div style="position:absolute;left:1061.48px;top:415.24px;font-family:'Liberation Sans',sans-serif;font-size:17.2px;line-height:17.2px;color:#000;font-weight:normal;white-space:pre;transform:scaleX(1.0400);transform-origin:0 0;">15.00</div>
<div style="position:absolute;left:1125.63px;top:415.24px;font-family:'Liberation Sans',sans-serif;font-size:17.2px;line-height:17.2px;color:#000;font-weight:normal;white-space:pre;">$</div>
<div style="position:absolute;left:1160.07px;top:415.24px;font-family:'Liberation Sans',sans-serif;font-size:17.2px;line-height:17.2px;color:#000;font-weight:normal;white-space:pre;transform:scaleX(1.0400);transform-origin:0 0;">13,815.00</div>
<div style="position:absolute;left:1258.43px;top:415.24px;font-family:'Liberation Sans',sans-serif;font-size:17.2px;line-height:17.2px;color:#000;font-weight:normal;white-space:pre;">$</div>
<div style="position:absolute;left:1330.51px;top:415.24px;font-family:'Liberation Sans',sans-serif;font-size:17.2px;line-height:17.2px;color:#000;font-weight:normal;white-space:pre;">-</div>
<div style="position:absolute;left:1375.83px;top:415.24px;font-family:'Liberation Sans',sans-serif;font-size:17.2px;line-height:17.2px;color:#000;font-weight:normal;white-space:pre;">$</div>
<div style="position:absolute;left:1443.07px;top:415.24px;font-family:'Liberation Sans',sans-serif;font-size:17.2px;line-height:17.2px;color:#000;font-weight:normal;white-space:pre;transform:scaleX(1.0400);transform-origin:0 0;">13,815.00</div>
<div style="position:absolute;left:1783.05px;top:415.24px;font-family:'Liberation Sans',sans-serif;font-size:17.2px;line-height:17.2px;color:#000;font-weight:normal;white-space:pre;transform:scaleX(1.0400);transform-origin:0 0;">00</div>
<div style="position:absolute;left:1824.96px;top:415.24px;font-family:'Liberation Sans',sans-serif;font-size:17.2px;line-height:17.2px;color:#000;font-weight:normal;white-space:pre;transform:scaleX(1.0400);transform-origin:0 0;">01-03-20</div>
<div style="position:absolute;left:13.27px;top:440.24px;font-family:'Liberation Sans',sans-serif;font-size:17.2px;line-height:17.2px;color:#217346;font-weight:normal;white-space:pre;">9</div>
<div style="position:absolute;left:39.65px;top:440.95px;font-family:'Liberation Sans',sans-serif;font-size:16.95px;line-height:16.95px;color:#000;font-weight:normal;white-space:pre;">Channel Partners</div>
<div style="position:absolute;left:191.45px;top:440.95px;font-family:'Liberation Sans',sans-serif;font-size:16.95px;line-height:16.95px;color:#000;font-weight:normal;white-space:pre;">Canada</div>
<div style="position:absolute;left:445.04px;top:440.95px;font-family:'Liberation Sans',sans-serif;font-size:16.95px;line-height:16.95px;color:#000;font-weight:normal;white-space:pre;">Montana</div>
<div style="position:absolute;left:578.14px;top:440.95px;font-family:'Liberation Sans',sans-serif;font-size:16.95px;line-height:16.95px;color:#000;font-weight:normal;white-space:pre;">None</div>
<div style="position:absolute;left:821.85px;top:440.24px;font-family:'Liberation Sans',sans-serif;font-size:17.2px;line-height:17.2px;color:#000;font-weight:normal;white-space:pre;transform:scaleX(1.0400);transform-origin:0 0;">2518</div>
<div style="position:absolute;left:875.23px;top:440.24px;font-family:'Liberation Sans',sans-serif;font-size:17.2px;line-height:17.2px;color:#000;font-weight:normal;white-space:pre;">$</div>
<div style="position:absolute;left:954.83px;top:440.24px;font-family:'Liberation Sans',sans-serif;font-size:17.2px;line-height:17.2px;color:#000;font-weight:normal;white-space:pre;transform:scaleX(1.0400);transform-origin:0 0;">5.00</div>
<div style="position:absolute;left:1008.23px;top:440.24px;font-family:'Liberation Sans',sans-serif;font-size:17.2px;line-height:17.2px;color:#000;font-weight:normal;white-space:pre;">$</div>
<div style="position:absolute;left:1061.48px;top:440.24px;font-family:'Liberation Sans',sans-serif;font-size:17.2px;line-height:17.2px;color:#000;font-weight:normal;white-space:pre;transform:scaleX(1.0400);transform-origin:0 0;">12.00</div>
<div style="position:absolute;left:1125.63px;top:440.24px;font-family:'Liberation Sans',sans-serif;font-size:17.2px;line-height:17.2px;color:#000;font-weight:normal;white-space:pre;">$</div>
<div style="position:absolute;left:1160.07px;top:440.24px;font-family:'Liberation Sans',sans-serif;font-size:17.2px;line-height:17.2px;color:#000;font-weight:normal;white-space:pre;transform:scaleX(1.0400);transform-origin:0 0;">30,216.00</div>
<div style="position:absolute;left:1258.43px;top:440.24px;font-family:'Liberation Sans',sans-serif;font-size:17.2px;line-height:17.2px;color:#000;font-weight:normal;white-space:pre;">$</div>
<div style="position:absolute;left:1330.51px;top:440.24px;font-family:'Liberation Sans',sans-serif;font-size:17.2px;line-height:17.2px;color:#000;font-weight:normal;white-space:pre;">-</div>
<div style="position:absolute;left:1375.83px;top:440.24px;font-family:'Liberation Sans',sans-serif;font-size:17.2px;line-height:17.2px;color:#000;font-weight:normal;white-space:pre;">$</div>
<div style="position:absolute;left:1443.07px;top:440.24px;font-family:'Liberation Sans',sans-serif;font-size:17.2px;line-height:17.2px;color:#000;font-weight:normal;white-space:pre;transform:scaleX(1.0400);transform-origin:0 0;">30,216.00</div>
<div style="position:absolute;left:1783.05px;top:440.24px;font-family:'Liberation Sans',sans-serif;font-size:17.2px;line-height:17.2px;color:#000;font-weight:normal;white-space:pre;transform:scaleX(1.0400);transform-origin:0 0;">00</div>
<div style="position:absolute;left:1824.96px;top:440.24px;font-family:'Liberation Sans',sans-serif;font-size:17.2px;line-height:17.2px;color:#000;font-weight:normal;white-space:pre;transform:scaleX(1.0400);transform-origin:0 0;">01-06-20</div>
<div style="position:absolute;left:8.14px;top:465.24px;font-family:'Liberation Sans',sans-serif;font-size:17.2px;line-height:17.2px;color:#217346;font-weight:normal;white-space:pre;">10</div>
<div style="position:absolute;left:39.65px;top:465.95px;font-family:'Liberation Sans',sans-serif;font-size:16.95px;line-height:16.95px;color:#000;font-weight:normal;white-space:pre;">Government</div>
<div style="position:absolute;left:190.94px;top:465.95px;font-family:'Liberation Sans',sans-serif;font-size:16.95px;line-height:16.95px;color:#000;font-weight:normal;white-space:pre;">France</div>
<div style="position:absolute;left:445.04px;top:465.95px;font-family:'Liberation Sans',sans-serif;font-size:16.95px;line-height:16.95px;color:#000;font-weight:normal;white-space:pre;">Montana</div>
<div style="position:absolute;left:578.14px;top:465.95px;font-family:'Liberation Sans',sans-serif;font-size:16.95px;line-height:16.95px;color:#000;font-weight:normal;white-space:pre;">None</div>
<div style="position:absolute;left:822.03px;top:465.24px;font-family:'Liberation Sans',sans-serif;font-size:17.2px;line-height:17.2px;color:#000;font-weight:normal;white-space:pre;transform:scaleX(1.0400);transform-origin:0 0;">1899</div>
<div style="position:absolute;left:875.23px;top:465.24px;font-family:'Liberation Sans',sans-serif;font-size:17.2px;line-height:17.2px;color:#000;font-weight:normal;white-space:pre;">$</div>
<div style="position:absolute;left:954.83px;top:465.24px;font-family:'Liberation Sans',sans-serif;font-size:17.2px;line-height:17.2px;color:#000;font-weight:normal;white-space:pre;transform:scaleX(1.0400);transform-origin:0 0;">5.00</div>
<div style="position:absolute;left:1008.23px;top:465.24px;font-family:'Liberation Sans',sans-serif;font-size:17.2px;line-height:17.2px;color:#000;font-weight:normal;white-space:pre;">$</div>
<div style="position:absolute;left:1061.48px;top:465.24px;font-family:'Liberation Sans',sans-serif;font-size:17.2px;line-height:17.2px;color:#000;font-weight:normal;white-space:pre;transform:scaleX(1.0400);transform-origin:0 0;">20.00</div>
<div style="position:absolute;left:1125.63px;top:465.24px;font-family:'Liberation Sans',sans-serif;font-size:17.2px;line-height:17.2px;color:#000;font-weight:normal;white-space:pre;">$</div>
<div style="position:absolute;left:1160.07px;top:465.24px;font-family:'Liberation Sans',sans-serif;font-size:17.2px;line-height:17.2px;color:#000;font-weight:normal;white-space:pre;transform:scaleX(1.0400);transform-origin:0 0;">37,980.00</div>
<div style="position:absolute;left:1258.43px;top:465.24px;font-family:'Liberation Sans',sans-serif;font-size:17.2px;line-height:17.2px;color:#000;font-weight:normal;white-space:pre;">$</div>
<div style="position:absolute;left:1330.51px;top:465.24px;font-family:'Liberation Sans',sans-serif;font-size:17.2px;line-height:17.2px;color:#000;font-weight:normal;white-space:pre;">-</div>
<div style="position:absolute;left:1375.83px;top:465.24px;font-family:'Liberation Sans',sans-serif;font-size:17.2px;line-height:17.2px;color:#000;font-weight:normal;white-space:pre;">$</div>
<div style="position:absolute;left:1443.07px;top:465.24px;font-family:'Liberation Sans',sans-serif;font-size:17.2px;line-height:17.2px;color:#000;font-weight:normal;white-space:pre;transform:scaleX(1.0400);transform-origin:0 0;">37,980.00</div>
<div style="position:absolute;left:1783.05px;top:465.24px;font-family:'Liberation Sans',sans-serif;font-size:17.2px;line-height:17.2px;color:#000;font-weight:normal;white-space:pre;transform:scaleX(1.0400);transform-origin:0 0;">00</div>
<div style="position:absolute;left:1824.96px;top:465.24px;font-family:'Liberation Sans',sans-serif;font-size:17.2px;line-height:17.2px;color:#000;font-weight:normal;white-space:pre;transform:scaleX(1.0400);transform-origin:0 0;">01-06-20</div>
<div style="position:absolute;left:8.87px;top:490.24px;font-family:'Liberation Sans',sans-serif;font-size:17.2px;line-height:17.2px;color:#217346;font-weight:normal;white-space:pre;">11</div>
<div style="position:absolute;left:39.65px;top:490.95px;font-family:'Liberation Sans',sans-serif;font-size:16.95px;line-height:16.95px;color:#000;font-weight:normal;white-space:pre;">Channel Partners</div>
<div style="position:absolute;left:191.45px;top:490.95px;font-family:'Liberation Sans',sans-serif;font-size:16.95px;line-height:16.95px;color:#000;font-weight:normal;white-space:pre;">Germany</div>
<div style="position:absolute;left:445.04px;top:490.95px;font-family:'Liberation Sans',sans-serif;font-size:16.95px;line-height:16.95px;color:#000;font-weight:normal;white-space:pre;">Montana</div>
<div style="position:absolute;left:578.14px;top:490.95px;font-family:'Liberation Sans',sans-serif;font-size:16.95px;line-height:16.95px;color:#000;font-weight:normal;white-space:pre;">None</div>
<div style="position:absolute;left:821.85px;top:490.24px;font-family:'Liberation Sans',sans-serif;font-size:17.2px;line-height:17.2px;color:#000;font-weight:normal;white-space:pre;transform:scaleX(1.0400);transform-origin:0 0;">1545</div>
<div style="position:absolute;left:875.23px;top:490.24px;font-family:'Liberation Sans',sans-serif;font-size:17.2px;line-height:17.2px;color:#000;font-weight:normal;white-space:pre;">$</div>
<div style="position:absolute;left:954.83px;top:490.24px;font-family:'Liberation Sans',sans-serif;font-size:17.2px;line-height:17.2px;color:#000;font-weight:normal;white-space:pre;transform:scaleX(1.0400);transform-origin:0 0;">5.00</div>
<div style="position:absolute;left:1008.23px;top:490.24px;font-family:'Liberation Sans',sans-serif;font-size:17.2px;line-height:17.2px;color:#000;font-weight:normal;white-space:pre;">$</div>
<div style="position:absolute;left:1061.48px;top:490.24px;font-family:'Liberation Sans',sans-serif;font-size:17.2px;line-height:17.2px;color:#000;font-weight:normal;white-space:pre;transform:scaleX(1.0400);transform-origin:0 0;">12.00</div>
<div style="position:absolute;left:1125.63px;top:490.24px;font-family:'Liberation Sans',sans-serif;font-size:17.2px;line-height:17.2px;color:#000;font-weight:normal;white-space:pre;">$</div>
<div style="position:absolute;left:1160.07px;top:490.24px;font-family:'Liberation Sans',sans-serif;font-size:17.2px;line-height:17.2px;color:#000;font-weight:normal;white-space:pre;transform:scaleX(1.0400);transform-origin:0 0;">18,540.00</div>
<div style="position:absolute;left:1258.43px;top:490.24px;font-family:'Liberation Sans',sans-serif;font-size:17.2px;line-height:17.2px;color:#000;font-weight:normal;white-space:pre;">$</div>
<div style="position:absolute;left:1330.51px;top:490.24px;font-family:'Liberation Sans',sans-serif;font-size:17.2px;line-height:17.2px;color:#000;font-weight:normal;white-space:pre;">-</div>
<div style="position:absolute;left:1375.83px;top:490.24px;font-family:'Liberation Sans',sans-serif;font-size:17.2px;line-height:17.2px;color:#000;font-weight:normal;white-space:pre;">$</div>
<div style="position:absolute;left:1443.07px;top:490.24px;font-family:'Liberation Sans',sans-serif;font-size:17.2px;line-height:17.2px;color:#000;font-weight:normal;white-space:pre;transform:scaleX(1.0400);transform-origin:0 0;">18,540.00</div>
<div style="position:absolute;left:1783.05px;top:490.24px;font-family:'Liberation Sans',sans-serif;font-size:17.2px;line-height:17.2px;color:#000;font-weight:normal;white-space:pre;transform:scaleX(1.0400);transform-origin:0 0;">00</div>
<div style="position:absolute;left:1824.96px;top:490.24px;font-family:'Liberation Sans',sans-serif;font-size:17.2px;line-height:17.2px;color:#000;font-weight:normal;white-space:pre;transform:scaleX(1.0400);transform-origin:0 0;">01-06-20</div>
<div style="position:absolute;left:8.23px;top:515.24px;font-family:'Liberation Sans',sans-serif;font-size:17.2px;line-height:17.2px;color:#217346;font-weight:normal;white-space:pre;">12</div>
<div style="position:absolute;left:39.14px;top:515.95px;font-family:'Liberation Sans',sans-serif;font-size:16.95px;line-height:16.95px;color:#000;font-weight:normal;white-space:pre;">Midmarket</div>
<div style="position:absolute;left:190.94px;top:515.95px;font-family:'Liberation Sans',sans-serif;font-size:16.95px;line-height:16.95px;color:#000;font-weight:normal;white-space:pre;">Mexico</div>
<div style="position:absolute;left:445.04px;top:515.95px;font-family:'Liberation Sans',sans-serif;font-size:16.95px;line-height:16.95px;color:#000;font-weight:normal;white-space:pre;">Montana</div>
<div style="position:absolute;left:578.14px;top:515.95px;font-family:'Liberation Sans',sans-serif;font-size:16.95px;line-height:16.95px;color:#000;font-weight:normal;white-space:pre;">None</div>
<div style="position:absolute;left:821.85px;top:515.24px;font-family:'Liberation Sans',sans-serif;font-size:17.2px;line-height:17.2px;color:#000;font-weight:normal;white-space:pre;transform:scaleX(1.0400);transform-origin:0 0;">2470</div>
<div style="position:absolute;left:875.23px;top:515.24px;font-family:'Liberation Sans',sans-serif;font-size:17.2px;line-height:17.2px;color:#000;font-weight:normal;white-space:pre;">$</div>
<div style="position:absolute;left:954.83px;top:515.24px;font-family:'Liberation Sans',sans-serif;font-size:17.2px;line-height:17.2px;color:#000;font-weight:normal;white-space:pre;transform:scaleX(1.0400);transform-origin:0 0;">5.00</div>
<div style="position:absolute;left:1008.23px;top:515.24px;font-family:'Liberation Sans',sans-serif;font-size:17.2px;line-height:17.2px;color:#000;font-weight:normal;white-space:pre;">$</div>
<div style="position:absolute;left:1061.48px;top:515.24px;font-family:'Liberation Sans',sans-serif;font-size:17.2px;line-height:17.2px;color:#000;font-weight:normal;white-space:pre;transform:scaleX(1.0400);transform-origin:0 0;">15.00</div>
<div style="position:absolute;left:1125.63px;top:515.24px;font-family:'Liberation Sans',sans-serif;font-size:17.2px;line-height:17.2px;color:#000;font-weight:normal;white-space:pre;">$</div>
<div style="position:absolute;left:1160.07px;top:515.24px;font-family:'Liberation Sans',sans-serif;font-size:17.2px;line-height:17.2px;color:#000;font-weight:normal;white-space:pre;transform:scaleX(1.0400);transform-origin:0 0;">37,050.00</div>
<div style="position:absolute;left:1258.43px;top:515.24px;font-family:'Liberation Sans',sans-serif;font-size:17.2px;line-height:17.2px;color:#000;font-weight:normal;white-space:pre;">$</div>
<div style="position:absolute;left:1330.51px;top:515.24px;font-family:'Liberation Sans',sans-serif;font-size:17.2px;line-height:17.2px;color:#000;font-weight:normal;white-space:pre;">-</div>
<div style="position:absolute;left:1375.83px;top:515.24px;font-family:'Liberation Sans',sans-serif;font-size:17.2px;line-height:17.2px;color:#000;font-weight:normal;white-space:pre;">$</div>
<div style="position:absolute;left:1443.07px;top:515.24px;font-family:'Liberation Sans',sans-serif;font-size:17.2px;line-height:17.2px;color:#000;font-weight:normal;white-space:pre;transform:scaleX(1.0400);transform-origin:0 0;">37,050.00</div>
<div style="position:absolute;left:1783.05px;top:515.24px;font-family:'Liberation Sans',sans-serif;font-size:17.2px;line-height:17.2px;color:#000;font-weight:normal;white-space:pre;transform:scaleX(1.0400);transform-origin:0 0;">00</div>
<div style="position:absolute;left:1824.96px;top:515.24px;font-family:'Liberation Sans',sans-serif;font-size:17.2px;line-height:17.2px;color:#000;font-weight:normal;white-space:pre;transform:scaleX(1.0400);transform-origin:0 0;">01-06-20</div>
<div style="position:absolute;left:8.14px;top:540.24px;font-family:'Liberation Sans',sans-serif;font-size:17.2px;line-height:17.2px;color:#217346;font-weight:normal;white-space:pre;">13</div>
<div style="position:absolute;left:39.14px;top:540.95px;font-family:'Liberation Sans',sans-serif;font-size:16.95px;line-height:16.95px;color:#000;font-weight:normal;white-space:pre;">Enterprise</div>
<div style="position:absolute;left:191.45px;top:540.95px;font-family:'Liberation Sans',sans-serif;font-size:16.95px;line-height:16.95px;color:#000;font-weight:normal;white-space:pre;">Canada</div>
<div style="position:absolute;left:445.04px;top:540.95px;font-family:'Liberation Sans',sans-serif;font-size:16.95px;line-height:16.95px;color:#000;font-weight:normal;white-space:pre;">Montana</div>
<div style="position:absolute;left:578.14px;top:540.95px;font-family:'Liberation Sans',sans-serif;font-size:16.95px;line-height:16.95px;color:#000;font-weight:normal;white-space:pre;">None</div>
<div style="position:absolute;left:806.93px;top:540.24px;font-family:'Liberation Sans',sans-serif;font-size:17.2px;line-height:17.2px;color:#000;font-weight:normal;white-space:pre;transform:scaleX(1.0400);transform-origin:0 0;">2665.5</div>
<div style="position:absolute;left:875.23px;top:540.24px;font-family:'Liberation Sans',sans-serif;font-size:17.2px;line-height:17.2px;color:#000;font-weight:normal;white-space:pre;">$</div>
<div style="position:absolute;left:954.83px;top:540.24px;font-family:'Liberation Sans',sans-serif;font-size:17.2px;line-height:17.2px;color:#000;font-weight:normal;white-space:pre;transform:scaleX(1.0400);transform-origin:0 0;">5.00</div>
<div style="position:absolute;left:1008.23px;top:540.24px;font-family:'Liberation Sans',sans-serif;font-size:17.2px;line-height:17.2px;color:#000;font-weight:normal;white-space:pre;">$</div>
<div style="position:absolute;left:1051.53px;top:540.24px;font-family:'Liberation Sans',sans-serif;font-size:17.2px;line-height:17.2px;color:#000;font-weight:normal;white-space:pre;transform:scaleX(1.0400);transform-origin:0 0;">125.00</div>
<div style="position:absolute;left:1125.63px;top:540.24px;font-family:'Liberation Sans',sans-serif;font-size:17.2px;line-height:17.2px;color:#000;font-weight:normal;white-space:pre;">$</div>
<div style="position:absolute;left:1145.15px;top:540.24px;font-family:'Liberation Sans',sans-serif;font-size:17.2px;line-height:17.2px;color:#000;font-weight:normal;white-space:pre;transform:scaleX(1.0400);transform-origin:0 0;">3,33,187.50</div>
<div style="position:absolute;left:1258.43px;top:540.24px;font-family:'Liberation Sans',sans-serif;font-size:17.2px;line-height:17.2px;color:#000;font-weight:normal;white-space:pre;">$</div>
<div style="position:absolute;left:1330.51px;top:540.24px;font-family:'Liberation Sans',sans-serif;font-size:17.2px;line-height:17.2px;color:#000;font-weight:normal;white-space:pre;">-</div>
<div style="position:absolute;left:1375.83px;top:540.24px;font-family:'Liberation Sans',sans-serif;font-size:17.2px;line-height:17.2px;color:#000;font-weight:normal;white-space:pre;">$</div>
<div style="position:absolute;left:1428.15px;top:540.24px;font-family:'Liberation Sans',sans-serif;font-size:17.2px;line-height:17.2px;color:#000;font-weight:normal;white-space:pre;transform:scaleX(1.0400);transform-origin:0 0;">3,33,187.50</div>
<div style="position:absolute;left:1783.05px;top:540.24px;font-family:'Liberation Sans',sans-serif;font-size:17.2px;line-height:17.2px;color:#000;font-weight:normal;white-space:pre;transform:scaleX(1.0400);transform-origin:0 0;">50</div>
<div style="position:absolute;left:1824.96px;top:540.24px;font-family:'Liberation Sans',sans-serif;font-size:17.2px;line-height:17.2px;color:#000;font-weight:normal;white-space:pre;transform:scaleX(1.0400);transform-origin:0 0;">01-07-20</div>
<div style="position:absolute;left:8.06px;top:565.24px;font-family:'Liberation Sans',sans-serif;font-size:17.2px;line-height:17.2px;color:#217346;font-weight:normal;white-space:pre;">14</div>
<div style="position:absolute;left:39.82px;top:565.95px;font-family:'Liberation Sans',sans-serif;font-size:16.95px;line-height:16.95px;color:#000;font-weight:normal;white-space:pre;">Small Business</div>
<div style="position:absolute;left:190.94px;top:565.95px;font-family:'Liberation Sans',sans-serif;font-size:16.95px;line-height:16.95px;color:#000;font-weight:normal;white-space:pre;">Mexico</div>
<div style="position:absolute;left:445.04px;top:565.95px;font-family:'Liberation Sans',sans-serif;font-size:16.95px;line-height:16.95px;color:#000;font-weight:normal;white-space:pre;">Montana</div>
<div style="position:absolute;left:578.14px;top:565.95px;font-family:'Liberation Sans',sans-serif;font-size:16.95px;line-height:16.95px;color:#000;font-weight:normal;white-space:pre;">None</div>
<div style="position:absolute;left:831.80px;top:565.24px;font-family:'Liberation Sans',sans-serif;font-size:17.2px;line-height:17.2px;color:#000;font-weight:normal;white-space:pre;transform:scaleX(1.0400);transform-origin:0 0;">958</div>
<div style="position:absolute;left:875.23px;top:565.24px;font-family:'Liberation Sans',sans-serif;font-size:17.2px;line-height:17.2px;color:#000;font-weight:normal;white-space:pre;">$</div>
<div style="position:absolute;left:954.83px;top:565.24px;font-family:'Liberation Sans',sans-serif;font-size:17.2px;line-height:17.2px;color:#000;font-weight:normal;white-space:pre;transform:scaleX(1.0400);transform-origin:0 0;">5.00</div>
<div style="position:absolute;left:1008.23px;top:565.24px;font-family:'Liberation Sans',sans-serif;font-size:17.2px;line-height:17.2px;color:#000;font-weight:normal;white-space:pre;">$</div>
<div style="position:absolute;left:1051.53px;top:565.24px;font-family:'Liberation Sans',sans-serif;font-size:17.2px;line-height:17.2px;color:#000;font-weight:normal;white-space:pre;transform:scaleX(1.0400);transform-origin:0 0;">300.00</div>
<div style="position:absolute;left:1125.63px;top:565.24px;font-family:'Liberation Sans',sans-serif;font-size:17.2px;line-height:17.2px;color:#000;font-weight:normal;white-space:pre;">$</div>
<div style="position:absolute;left:1145.15px;top:565.24px;font-family:'Liberation Sans',sans-serif;font-size:17.2px;line-height:17.2px;color:#000;font-weight:normal;white-space:pre;transform:scaleX(1.0400);transform-origin:0 0;">2,87,400.00</div>
<div style="position:absolute;left:1258.43px;top:565.24px;font-family:'Liberation Sans',sans-serif;font-size:17.2px;line-height:17.2px;color:#000;font-weight:normal;white-space:pre;">$</div>
<div style="position:absolute;left:1330.51px;top:565.24px;font-family:'Liberation Sans',sans-serif;font-size:17.2px;line-height:17.2px;color:#000;font-weight:normal;white-space:pre;">-</div>
<div style="position:absolute;left:1375.83px;top:565.24px;font-family:'Liberation Sans',sans-serif;font-size:17.2px;line-height:17.2px;color:#000;font-weight:normal;white-space:pre;">$</div>
<div style="position:absolute;left:1428.15px;top:565.24px;font-family:'Liberation Sans',sans-serif;font-size:17.2px;line-height:17.2px;color:#000;font-weight:normal;white-space:pre;transform:scaleX(1.0400);transform-origin:0 0;">2,87,400.00</div>
<div style="position:absolute;left:1783.05px;top:565.24px;font-family:'Liberation Sans',sans-serif;font-size:17.2px;line-height:17.2px;color:#000;font-weight:normal;white-space:pre;transform:scaleX(1.0400);transform-origin:0 0;">00</div>
<div style="position:absolute;left:1824.96px;top:565.24px;font-family:'Liberation Sans',sans-serif;font-size:17.2px;line-height:17.2px;color:#000;font-weight:normal;white-space:pre;transform:scaleX(1.0400);transform-origin:0 0;">01-08-20</div>
<div style="position:absolute;left:8.14px;top:590.24px;font-family:'Liberation Sans',sans-serif;font-size:17.2px;line-height:17.2px;color:#217346;font-weight:normal;white-space:pre;">15</div>
<div style="position:absolute;left:39.65px;top:590.95px;font-family:'Liberation Sans',sans-serif;font-size:16.95px;line-height:16.95px;color:#000;font-weight:normal;white-space:pre;">Government</div>
<div style="position:absolute;left:191.45px;top:590.95px;font-family:'Liberation Sans',sans-serif;font-size:16.95px;line-height:16.95px;color:#000;font-weight:normal;white-space:pre;">Germany</div>
<div style="position:absolute;left:445.04px;top:590.95px;font-family:'Liberation Sans',sans-serif;font-size:16.95px;line-height:16.95px;color:#000;font-weight:normal;white-space:pre;">Montana</div>
<div style="position:absolute;left:578.14px;top:590.95px;font-family:'Liberation Sans',sans-serif;font-size:16.95px;line-height:16.95px;color:#000;font-weight:normal;white-space:pre;">None</div>
<div style="position:absolute;left:821.85px;top:590.24px;font-family:'Liberation Sans',sans-serif;font-size:17.2px;line-height:17.2px;color:#000;font-weight:normal;white-space:pre;transform:scaleX(1.0400);transform-origin:0 0;">2146</div>
<div style="position:absolute;left:875.23px;top:590.24px;font-family:'Liberation Sans',sans-serif;font-size:17.2px;line-height:17.2px;color:#000;font-weight:normal;white-space:pre;">$</div>
<div style="position:absolute;left:954.83px;top:590.24px;font-family:'Liberation Sans',sans-serif;font-size:17.2px;line-height:17.2px;color:#000;font-weight:normal;white-space:pre;transform:scaleX(1.0400);transform-origin:0 0;">5.00</div>
<div style="position:absolute;left:1008.23px;top:590.24px;font-family:'Liberation Sans',sans-serif;font-size:17.2px;line-height:17.2px;color:#000;font-weight:normal;white-space:pre;">$</div>
<div style="position:absolute;left:1071.43px;top:590.24px;font-family:'Liberation Sans',sans-serif;font-size:17.2px;line-height:17.2px;color:#000;font-weight:normal;white-space:pre;transform:scaleX(1.0400);transform-origin:0 0;">7.00</div>
<div style="position:absolute;left:1125.63px;top:590.24px;font-family:'Liberation Sans',sans-serif;font-size:17.2px;line-height:17.2px;color:#000;font-weight:normal;white-space:pre;">$</div>
<div style="position:absolute;left:1160.07px;top:590.24px;font-family:'Liberation Sans',sans-serif;font-size:17.2px;line-height:17.2px;color:#000;font-weight:normal;white-space:pre;transform:scaleX(1.0400);transform-origin:0 0;">15,022.00</div>
<div style="position:absolute;left:1258.43px;top:590.24px;font-family:'Liberation Sans',sans-serif;font-size:17.2px;line-height:17.2px;color:#000;font-weight:normal;white-space:pre;">$</div>
<div style="position:absolute;left:1330.51px;top:590.24px;font-family:'Liberation Sans',sans-serif;font-size:17.2px;line-height:17.2px;color:#000;font-weight:normal;white-space:pre;">-</div>
<div style="position:absolute;left:1375.83px;top:590.24px;font-family:'Liberation Sans',sans-serif;font-size:17.2px;line-height:17.2px;color:#000;font-weight:normal;white-space:pre;">$</div>
<div style="position:absolute;left:1443.07px;top:590.24px;font-family:'Liberation Sans',sans-serif;font-size:17.2px;line-height:17.2px;color:#000;font-weight:normal;white-space:pre;transform:scaleX(1.0400);transform-origin:0 0;">15,022.00</div>
<div style="position:absolute;left:1783.05px;top:590.24px;font-family:'Liberation Sans',sans-serif;font-size:17.2px;line-height:17.2px;color:#000;font-weight:normal;white-space:pre;transform:scaleX(1.0400);transform-origin:0 0;">00</div>
<div style="position:absolute;left:1824.96px;top:590.24px;font-family:'Liberation Sans',sans-serif;font-size:17.2px;line-height:17.2px;color:#000;font-weight:normal;white-space:pre;transform:scaleX(1.0400);transform-origin:0 0;">01-09-20</div>
<div style="position:absolute;left:8.14px;top:615.24px;font-family:'Liberation Sans',sans-serif;font-size:17.2px;line-height:17.2px;color:#217346;font-weight:normal;white-space:pre;">16</div>
<div style="position:absolute;left:39.14px;top:615.95px;font-family:'Liberation Sans',sans-serif;font-size:16.95px;line-height:16.95px;color:#000;font-weight:normal;white-space:pre;">Enterprise</div>
<div style="position:absolute;left:191.45px;top:615.95px;font-family:'Liberation Sans',sans-serif;font-size:16.95px;line-height:16.95px;color:#000;font-weight:normal;white-space:pre;">Canada</div>
<div style="position:absolute;left:445.04px;top:615.95px;font-family:'Liberation Sans',sans-serif;font-size:16.95px;line-height:16.95px;color:#000;font-weight:normal;white-space:pre;">Montana</div>
<div style="position:absolute;left:578.14px;top:615.95px;font-family:'Liberation Sans',sans-serif;font-size:16.95px;line-height:16.95px;color:#000;font-weight:normal;white-space:pre;">None</div>
<div style="position:absolute;left:831.80px;top:615.24px;font-family:'Liberation Sans',sans-serif;font-size:17.2px;line-height:17.2px;color:#000;font-weight:normal;white-space:pre;transform:scaleX(1.0400);transform-origin:0 0;">345</div>
<div style="position:absolute;left:875.23px;top:615.24px;font-family:'Liberation Sans',sans-serif;font-size:17.2px;line-height:17.2px;color:#000;font-weight:normal;white-space:pre;">$</div>
<div style="position:absolute;left:954.83px;top:615.24px;font-family:'Liberation Sans',sans-serif;font-size:17.2px;line-height:17.2px;color:#000;font-weight:normal;white-space:pre;transform:scaleX(1.0400);transform-origin:0 0;">5.00</div>
<div style="position:absolute;left:1008.23px;top:615.24px;font-family:'Liberation Sans',sans-serif;font-size:17.2px;line-height:17.2px;color:#000;font-weight:normal;white-space:pre;">$</div>
<div style="position:absolute;left:1051.53px;top:615.24px;font-family:'Liberation Sans',sans-serif;font-size:17.2px;line-height:17.2px;color:#000;font-weight:normal;white-space:pre;transform:scaleX(1.0400);transform-origin:0 0;">125.00</div>
<div style="position:absolute;left:1125.63px;top:615.24px;font-family:'Liberation Sans',sans-serif;font-size:17.2px;line-height:17.2px;color:#000;font-weight:normal;white-space:pre;">$</div>
<div style="position:absolute;left:1160.07px;top:615.24px;font-family:'Liberation Sans',sans-serif;font-size:17.2px;line-height:17.2px;color:#000;font-weight:normal;white-space:pre;transform:scaleX(1.0400);transform-origin:0 0;">43,125.00</div>
<div style="position:absolute;left:1258.43px;top:615.24px;font-family:'Liberation Sans',sans-serif;font-size:17.2px;line-height:17.2px;color:#000;font-weight:normal;white-space:pre;">$</div>
<div style="position:absolute;left:1330.51px;top:615.24px;font-family:'Liberation Sans',sans-serif;font-size:17.2px;line-height:17.2px;color:#000;font-weight:normal;white-space:pre;">-</div>
<div style="position:absolute;left:1375.83px;top:615.24px;font-family:'Liberation Sans',sans-serif;font-size:17.2px;line-height:17.2px;color:#000;font-weight:normal;white-space:pre;">$</div>
<div style="position:absolute;left:1443.07px;top:615.24px;font-family:'Liberation Sans',sans-serif;font-size:17.2px;line-height:17.2px;color:#000;font-weight:normal;white-space:pre;transform:scaleX(1.0400);transform-origin:0 0;">43,125.00</div>
<div style="position:absolute;left:1783.05px;top:615.24px;font-family:'Liberation Sans',sans-serif;font-size:17.2px;line-height:17.2px;color:#000;font-weight:normal;white-space:pre;transform:scaleX(1.0400);transform-origin:0 0;">00</div>
<div style="position:absolute;left:1824.96px;top:615.24px;font-family:'Liberation Sans',sans-serif;font-size:17.2px;line-height:17.2px;color:#000;font-weight:normal;white-space:pre;transform:scaleX(1.0400);transform-origin:0 0;">01-10-20</div>
<div style="position:absolute;left:8.23px;top:640.24px;font-family:'Liberation Sans',sans-serif;font-size:17.2px;line-height:17.2px;color:#217346;font-weight:normal;white-space:pre;">17</div>
<div style="position:absolute;left:39.14px;top:640.95px;font-family:'Liberation Sans',sans-serif;font-size:16.95px;line-height:16.95px;color:#000;font-weight:normal;white-space:pre;">Midmarket</div>
<div style="position:absolute;left:191.11px;top:640.95px;font-family:'Liberation Sans',sans-serif;font-size:16.95px;line-height:16.95px;color:#000;font-weight:normal;white-space:pre;">United States of America</div>
<div style="position:absolute;left:445.04px;top:640.95px;font-family:'Liberation Sans',sans-serif;font-size:16.95px;line-height:16.95px;color:#000;font-weight:normal;white-space:pre;">Montana</div>
<div style="position:absolute;left:578.14px;top:640.95px;font-family:'Liberation Sans',sans-serif;font-size:16.95px;line-height:16.95px;color:#000;font-weight:normal;white-space:pre;">None</div>
<div style="position:absolute;left:831.80px;top:640.24px;font-family:'Liberation Sans',sans-serif;font-size:17.2px;line-height:17.2px;color:#000;font-weight:normal;white-space:pre;transform:scaleX(1.0400);transform-origin:0 0;">615</div>
<div style="position:absolute;left:875.23px;top:640.24px;font-family:'Liberation Sans',sans-serif;font-size:17.2px;line-height:17.2px;color:#000;font-weight:normal;white-space:pre;">$</div>
<div style="position:absolute;left:954.83px;top:640.24px;font-family:'Liberation Sans',sans-serif;font-size:17.2px;line-height:17.2px;color:#000;font-weight:normal;white-space:pre;transform:scaleX(1.0400);transform-origin:0 0;">5.00</div>
<div style="position:absolute;left:1008.23px;top:640.24px;font-family:'Liberation Sans',sans-serif;font-size:17.2px;line-height:17.2px;color:#000;font-weight:normal;white-space:pre;">$</div>
<div style="position:absolute;left:1061.48px;top:640.24px;font-family:'Liberation Sans',sans-serif;font-size:17.2px;line-height:17.2px;color:#000;font-weight:normal;white-space:pre;transform:scaleX(1.0400);transform-origin:0 0;">15.00</div>
<div style="position:absolute;left:1125.63px;top:640.24px;font-family:'Liberation Sans',sans-serif;font-size:17.2px;line-height:17.2px;color:#000;font-weight:normal;white-space:pre;">$</div>
<div style="position:absolute;left:1170.02px;top:640.24px;font-family:'Liberation Sans',sans-serif;font-size:17.2px;line-height:17.2px;color:#000;font-weight:normal;white-space:pre;transform:scaleX(1.0400);transform-origin:0 0;">9,225.00</div>
<div style="position:absolute;left:1258.43px;top:640.24px;font-family:'Liberation Sans',sans-serif;font-size:17.2px;line-height:17.2px;color:#000;font-weight:normal;white-space:pre;">$</div>
<div style="position:absolute;left:1330.51px;top:640.24px;font-family:'Liberation Sans',sans-serif;font-size:17.2px;line-height:17.2px;color:#000;font-weight:normal;white-space:pre;">-</div>
<div style="position:absolute;left:1375.83px;top:640.24px;font-family:'Liberation Sans',sans-serif;font-size:17.2px;line-height:17.2px;color:#000;font-weight:normal;white-space:pre;">$</div>
<div style="position:absolute;left:1453.02px;top:640.24px;font-family:'Liberation Sans',sans-serif;font-size:17.2px;line-height:17.2px;color:#000;font-weight:normal;white-space:pre;transform:scaleX(1.0400);transform-origin:0 0;">9,225.00</div>
<div style="position:absolute;left:1783.05px;top:640.24px;font-family:'Liberation Sans',sans-serif;font-size:17.2px;line-height:17.2px;color:#000;font-weight:normal;white-space:pre;transform:scaleX(1.0400);transform-origin:0 0;">00</div>
<div style="position:absolute;left:1824.96px;top:640.24px;font-family:'Liberation Sans',sans-serif;font-size:17.2px;line-height:17.2px;color:#000;font-weight:normal;white-space:pre;transform:scaleX(1.0400);transform-origin:0 0;">01-12-20</div>
<div style="position:absolute;left:8.14px;top:665.24px;font-family:'Liberation Sans',sans-serif;font-size:17.2px;line-height:17.2px;color:#217346;font-weight:normal;white-space:pre;">18</div>
<div style="position:absolute;left:39.65px;top:665.95px;font-family:'Liberation Sans',sans-serif;font-size:16.95px;line-height:16.95px;color:#000;font-weight:normal;white-space:pre;">Government</div>
<div style="position:absolute;left:191.45px;top:665.95px;font-family:'Liberation Sans',sans-serif;font-size:16.95px;line-height:16.95px;color:#000;font-weight:normal;white-space:pre;">Canada</div>
<div style="position:absolute;left:445.04px;top:665.95px;font-family:'Liberation Sans',sans-serif;font-size:16.95px;line-height:16.95px;color:#000;font-weight:normal;white-space:pre;">Paseo</div>
<div style="position:absolute;left:578.14px;top:665.95px;font-family:'Liberation Sans',sans-serif;font-size:16.95px;line-height:16.95px;color:#000;font-weight:normal;white-space:pre;">None</div>
<div style="position:absolute;left:831.98px;top:665.24px;font-family:'Liberation Sans',sans-serif;font-size:17.2px;line-height:17.2px;color:#000;font-weight:normal;white-space:pre;transform:scaleX(1.0400);transform-origin:0 0;">292</div>
<div style="position:absolute;left:875.23px;top:665.24px;font-family:'Liberation Sans',sans-serif;font-size:17.2px;line-height:17.2px;color:#000;font-weight:normal;white-space:pre;">$</div>
<div style="position:absolute;left:944.88px;top:665.24px;font-family:'Liberation Sans',sans-serif;font-size:17.2px;line-height:17.2px;color:#000;font-weight:normal;white-space:pre;transform:scaleX(1.0400);transform-origin:0 0;">10.00</div>
<div style="position:absolute;left:1008.23px;top:665.24px;font-family:'Liberation Sans',sans-serif;font-size:17.2px;line-height:17.2px;color:#000;font-weight:normal;white-space:pre;">$</div>
<div style="position:absolute;left:1061.48px;top:665.24px;font-family:'Liberation Sans',sans-serif;font-size:17.2px;line-height:17.2px;color:#000;font-weight:normal;white-space:pre;transform:scaleX(1.0400);transform-origin:0 0;">20.00</div>
<div style="position:absolute;left:1125.63px;top:665.24px;font-family:'Liberation Sans',sans-serif;font-size:17.2px;line-height:17.2px;color:#000;font-weight:normal;white-space:pre;">$</div>
<div style="position:absolute;left:1170.02px;top:665.24px;font-family:'Liberation Sans',sans-serif;font-size:17.2px;line-height:17.2px;color:#000;font-weight:normal;white-space:pre;transform:scaleX(1.0400);transform-origin:0 0;">5,840.00</div>
<div style="position:absolute;left:1258.43px;top:665.24px;font-family:'Liberation Sans',sans-serif;font-size:17.2px;line-height:17.2px;color:#000;font-weight:normal;white-space:pre;">$</div>
<div style="position:absolute;left:1330.51px;top:665.24px;font-family:'Liberation Sans',sans-serif;font-size:17.2px;line-height:17.2px;color:#000;font-weight:normal;white-space:pre;">-</div>
<div style="position:absolute;left:1375.83px;top:665.24px;font-family:'Liberation Sans',sans-serif;font-size:17.2px;line-height:17.2px;color:#000;font-weight:normal;white-space:pre;">$</div>
<div style="position:absolute;left:1453.02px;top:665.24px;font-family:'Liberation Sans',sans-serif;font-size:17.2px;line-height:17.2px;color:#000;font-weight:normal;white-space:pre;transform:scaleX(1.0400);transform-origin:0 0;">5,840.00</div>
<div style="position:absolute;left:1783.05px;top:665.24px;font-family:'Liberation Sans',sans-serif;font-size:17.2px;line-height:17.2px;color:#000;font-weight:normal;white-space:pre;transform:scaleX(1.0400);transform-origin:0 0;">00</div>
<div style="position:absolute;left:1824.96px;top:665.24px;font-family:'Liberation Sans',sans-serif;font-size:17.2px;line-height:17.2px;color:#000;font-weight:normal;white-space:pre;transform:scaleX(1.0400);transform-origin:0 0;">01-02-20</div>
<div style="position:absolute;left:8.23px;top:690.24px;font-family:'Liberation Sans',sans-serif;font-size:17.2px;line-height:17.2px;color:#217346;font-weight:normal;white-space:pre;">19</div>
<div style="position:absolute;left:39.14px;top:690.95px;font-family:'Liberation Sans',sans-serif;font-size:16.95px;line-height:16.95px;color:#000;font-weight:normal;white-space:pre;">Midmarket</div>
<div style="position:absolute;left:190.94px;top:690.95px;font-family:'Liberation Sans',sans-serif;font-size:16.95px;line-height:16.95px;color:#000;font-weight:normal;white-space:pre;">Mexico</div>
<div style="position:absolute;left:445.04px;top:690.95px;font-family:'Liberation Sans',sans-serif;font-size:16.95px;line-height:16.95px;color:#000;font-weight:normal;white-space:pre;">Paseo</div>
<div style="position:absolute;left:578.14px;top:690.95px;font-family:'Liberation Sans',sans-serif;font-size:16.95px;line-height:16.95px;color:#000;font-weight:normal;white-space:pre;">None</div>
<div style="position:absolute;left:831.62px;top:690.24px;font-family:'Liberation Sans',sans-serif;font-size:17.2px;line-height:17.2px;color:#000;font-weight:normal;white-space:pre;transform:scaleX(1.0400);transform-origin:0 0;">974</div>
<div style="position:absolute;left:875.23px;top:690.24px;font-family:'Liberation Sans',sans-serif;font-size:17.2px;line-height:17.2px;color:#000;font-weight:normal;white-space:pre;">$</div>
<div style="position:absolute;left:944.88px;top:690.24px;font-family:'Liberation Sans',sans-serif;font-size:17.2px;line-height:17.2px;color:#000;font-weight:normal;white-space:pre;transform:scaleX(1.0400);transform-origin:0 0;">10.00</div>
<div style="position:absolute;left:1008.23px;top:690.24px;font-family:'Liberation Sans',sans-serif;font-size:17.2px;line-height:17.2px;color:#000;font-weight:normal;white-space:pre;">$</div>
<div style="position:absolute;left:1061.48px;top:690.24px;font-family:'Liberation Sans',sans-serif;font-size:17.2px;line-height:17.2px;color:#000;font-weight:normal;white-space:pre;transform:scaleX(1.0400);transform-origin:0 0;">15.00</div>
<div style="position:absolute;left:1125.63px;top:690.24px;font-family:'Liberation Sans',sans-serif;font-size:17.2px;line-height:17.2px;color:#000;font-weight:normal;white-space:pre;">$</div>
<div style="position:absolute;left:1160.07px;top:690.24px;font-family:'Liberation Sans',sans-serif;font-size:17.2px;line-height:17.2px;color:#000;font-weight:normal;white-space:pre;transform:scaleX(1.0400);transform-origin:0 0;">14,610.00</div>
<div style="position:absolute;left:1258.43px;top:690.24px;font-family:'Liberation Sans',sans-serif;font-size:17.2px;line-height:17.2px;color:#000;font-weight:normal;white-space:pre;">$</div>
<div style="position:absolute;left:1330.51px;top:690.24px;font-family:'Liberation Sans',sans-serif;font-size:17.2px;line-height:17.2px;color:#000;font-weight:normal;white-space:pre;">-</div>
<div style="position:absolute;left:1375.83px;top:690.24px;font-family:'Liberation Sans',sans-serif;font-size:17.2px;line-height:17.2px;color:#000;font-weight:normal;white-space:pre;">$</div>
<div style="position:absolute;left:1443.07px;top:690.24px;font-family:'Liberation Sans',sans-serif;font-size:17.2px;line-height:17.2px;color:#000;font-weight:normal;white-space:pre;transform:scaleX(1.0400);transform-origin:0 0;">14,610.00</div>
<div style="position:absolute;left:1783.05px;top:690.24px;font-family:'Liberation Sans',sans-serif;font-size:17.2px;line-height:17.2px;color:#000;font-weight:normal;white-space:pre;transform:scaleX(1.0400);transform-origin:0 0;">00</div>
<div style="position:absolute;left:1824.96px;top:690.24px;font-family:'Liberation Sans',sans-serif;font-size:17.2px;line-height:17.2px;color:#000;font-weight:normal;white-space:pre;transform:scaleX(1.0400);transform-origin:0 0;">01-02-20</div>
<div style="position:absolute;left:8.32px;top:715.24px;font-family:'Liberation Sans',sans-serif;font-size:17.2px;line-height:17.2px;color:#217346;font-weight:normal;white-space:pre;">20</div>
<div style="position:absolute;left:39.65px;top:715.95px;font-family:'Liberation Sans',sans-serif;font-size:16.95px;line-height:16.95px;color:#000;font-weight:normal;white-space:pre;">Channel Partners</div>
<div style="position:absolute;left:191.45px;top:715.95px;font-family:'Liberation Sans',sans-serif;font-size:16.95px;line-height:16.95px;color:#000;font-weight:normal;white-space:pre;">Canada</div>
<div style="position:absolute;left:445.04px;top:715.95px;font-family:'Liberation Sans',sans-serif;font-size:16.95px;line-height:16.95px;color:#000;font-weight:normal;white-space:pre;">Paseo</div>
<div style="position:absolute;left:578.14px;top:715.95px;font-family:'Liberation Sans',sans-serif;font-size:16.95px;line-height:16.95px;color:#000;font-weight:normal;white-space:pre;">None</div>
<div style="position:absolute;left:821.85px;top:715.24px;font-family:'Liberation Sans',sans-serif;font-size:17.2px;line-height:17.2px;color:#000;font-weight:normal;white-space:pre;transform:scaleX(1.0400);transform-origin:0 0;">2518</div>
<div style="position:absolute;left:875.23px;top:715.24px;font-family:'Liberation Sans',sans-serif;font-size:17.2px;line-height:17.2px;color:#000;font-weight:normal;white-space:pre;">$</div>
<div style="position:absolute;left:944.88px;top:715.24px;font-family:'Liberation Sans',sans-serif;font-size:17.2px;line-height:17.2px;color:#000;font-weight:normal;white-space:pre;transform:scaleX(1.0400);transform-origin:0 0;">10.00</div>
<div style="position:absolute;left:1008.23px;top:715.24px;font-family:'Liberation Sans',sans-serif;font-size:17.2px;line-height:17.2px;color:#000;font-weight:normal;white-space:pre;">$</div>
<div style="position:absolute;left:1061.48px;top:715.24px;font-family:'Liberation Sans',sans-serif;font-size:17.2px;line-height:17.2px;color:#000;font-weight:normal;white-space:pre;transform:scaleX(1.0400);transform-origin:0 0;">12.00</div>
<div style="position:absolute;left:1125.63px;top:715.24px;font-family:'Liberation Sans',sans-serif;font-size:17.2px;line-height:17.2px;color:#000;font-weight:normal;white-space:pre;">$</div>
<div style="position:absolute;left:1160.07px;top:715.24px;font-family:'Liberation Sans',sans-serif;font-size:17.2px;line-height:17.2px;color:#000;font-weight:normal;white-space:pre;transform:scaleX(1.0400);transform-origin:0 0;">30,216.00</div>
<div style="position:absolute;left:1258.43px;top:715.24px;font-family:'Liberation Sans',sans-serif;font-size:17.2px;line-height:17.2px;color:#000;font-weight:normal;white-space:pre;">$</div>
<div style="position:absolute;left:1330.51px;top:715.24px;font-family:'Liberation Sans',sans-serif;font-size:17.2px;line-height:17.2px;color:#000;font-weight:normal;white-space:pre;">-</div>
<div style="position:absolute;left:1375.83px;top:715.24px;font-family:'Liberation Sans',sans-serif;font-size:17.2px;line-height:17.2px;color:#000;font-weight:normal;white-space:pre;">$</div>
<div style="position:absolute;left:1443.07px;top:715.24px;font-family:'Liberation Sans',sans-serif;font-size:17.2px;line-height:17.2px;color:#000;font-weight:normal;white-space:pre;transform:scaleX(1.0400);transform-origin:0 0;">30,216.00</div>
<div style="position:absolute;left:1783.05px;top:715.24px;font-family:'Liberation Sans',sans-serif;font-size:17.2px;line-height:17.2px;color:#000;font-weight:normal;white-space:pre;transform:scaleX(1.0400);transform-origin:0 0;">00</div>
<div style="position:absolute;left:1824.96px;top:715.24px;font-family:'Liberation Sans',sans-serif;font-size:17.2px;line-height:17.2px;color:#000;font-weight:normal;white-space:pre;transform:scaleX(1.0400);transform-origin:0 0;">01-06-20</div>
<div style="position:absolute;left:8.40px;top:740.24px;font-family:'Liberation Sans',sans-serif;font-size:17.2px;line-height:17.2px;color:#217346;font-weight:normal;white-space:pre;">21</div>
<div style="position:absolute;left:39.65px;top:740.95px;font-family:'Liberation Sans',sans-serif;font-size:16.95px;line-height:16.95px;color:#000;font-weight:normal;white-space:pre;">Government</div>
<div style="position:absolute;left:191.45px;top:740.95px;font-family:'Liberation Sans',sans-serif;font-size:16.95px;line-height:16.95px;color:#000;font-weight:normal;white-space:pre;">Germany</div>
<div style="position:absolute;left:445.04px;top:740.95px;font-family:'Liberation Sans',sans-serif;font-size:16.95px;line-height:16.95px;color:#000;font-weight:normal;white-space:pre;">Paseo</div>
<div style="position:absolute;left:578.14px;top:740.95px;font-family:'Liberation Sans',sans-serif;font-size:16.95px;line-height:16.95px;color:#000;font-weight:normal;white-space:pre;">None</div>
<div style="position:absolute;left:821.85px;top:740.24px;font-family:'Liberation Sans',sans-serif;font-size:17.2px;line-height:17.2px;color:#000;font-weight:normal;white-space:pre;transform:scaleX(1.0400);transform-origin:0 0;">1006</div>
<div style="position:absolute;left:875.23px;top:740.24px;font-family:'Liberation Sans',sans-serif;font-size:17.2px;line-height:17.2px;color:#000;font-weight:normal;white-space:pre;">$</div>
<div style="position:absolute;left:944.88px;top:740.24px;font-family:'Liberation Sans',sans-serif;font-size:17.2px;line-height:17.2px;color:#000;font-weight:normal;white-space:pre;transform:scaleX(1.0400);transform-origin:0 0;">10.00</div>
<div style="position:absolute;left:1008.23px;top:740.24px;font-family:'Liberation Sans',sans-serif;font-size:17.2px;line-height:17.2px;color:#000;font-weight:normal;white-space:pre;">$</div>
<div style="position:absolute;left:1051.53px;top:740.24px;font-family:'Liberation Sans',sans-serif;font-size:17.2px;line-height:17.2px;color:#000;font-weight:normal;white-space:pre;transform:scaleX(1.0400);transform-origin:0 0;">350.00</div>
<div style="position:absolute;left:1125.63px;top:740.24px;font-family:'Liberation Sans',sans-serif;font-size:17.2px;line-height:17.2px;color:#000;font-weight:normal;white-space:pre;">$</div>
<div style="position:absolute;left:1145.15px;top:740.24px;font-family:'Liberation Sans',sans-serif;font-size:17.2px;line-height:17.2px;color:#000;font-weight:normal;white-space:pre;transform:scaleX(1.0400);transform-origin:0 0;">3,52,100.00</div>
<div style="position:absolute;left:1258.43px;top:740.24px;font-family:'Liberation Sans',sans-serif;font-size:17.2px;line-height:17.2px;color:#000;font-weight:normal;white-space:pre;">$</div>
<div style="position:absolute;left:1330.51px;top:740.24px;font-family:'Liberation Sans',sans-serif;font-size:17.2px;line-height:17.2px;color:#000;font-weight:normal;white-space:pre;">-</div>
<div style="position:absolute;left:1375.83px;top:740.24px;font-family:'Liberation Sans',sans-serif;font-size:17.2px;line-height:17.2px;color:#000;font-weight:normal;white-space:pre;">$</div>
<div style="position:absolute;left:1428.15px;top:740.24px;font-family:'Liberation Sans',sans-serif;font-size:17.2px;line-height:17.2px;color:#000;font-weight:normal;white-space:pre;transform:scaleX(1.0400);transform-origin:0 0;">3,52,100.00</div>
<div style="position:absolute;left:1783.05px;top:740.24px;font-family:'Liberation Sans',sans-serif;font-size:17.2px;line-height:17.2px;color:#000;font-weight:normal;white-space:pre;transform:scaleX(1.0400);transform-origin:0 0;">00</div>
<div style="position:absolute;left:1824.96px;top:740.24px;font-family:'Liberation Sans',sans-serif;font-size:17.2px;line-height:17.2px;color:#000;font-weight:normal;white-space:pre;transform:scaleX(1.0400);transform-origin:0 0;">01-06-20</div>
<div style="position:absolute;left:8.40px;top:765.24px;font-family:'Liberation Sans',sans-serif;font-size:17.2px;line-height:17.2px;color:#217346;font-weight:normal;white-space:pre;">22</div>
<div style="position:absolute;left:39.65px;top:765.95px;font-family:'Liberation Sans',sans-serif;font-size:16.95px;line-height:16.95px;color:#000;font-weight:normal;white-space:pre;">Channel Partners</div>
<div style="position:absolute;left:191.45px;top:765.95px;font-family:'Liberation Sans',sans-serif;font-size:16.95px;line-height:16.95px;color:#000;font-weight:normal;white-space:pre;">Germany</div>
<div style="position:absolute;left:445.04px;top:765.95px;font-family:'Liberation Sans',sans-serif;font-size:16.95px;line-height:16.95px;color:#000;font-weight:normal;white-space:pre;">Paseo</div>
<div style="position:absolute;left:578.14px;top:765.95px;font-family:'Liberation Sans',sans-serif;font-size:16.95px;line-height:16.95px;color:#000;font-weight:normal;white-space:pre;">None</div>
<div style="position:absolute;left:831.98px;top:765.24px;font-family:'Liberation Sans',sans-serif;font-size:17.2px;line-height:17.2px;color:#000;font-weight:normal;white-space:pre;transform:scaleX(1.0400);transform-origin:0 0;">367</div>
<div style="position:absolute;left:875.23px;top:765.24px;font-family:'Liberation Sans',sans-serif;font-size:17.2px;line-height:17.2px;color:#000;font-weight:normal;white-space:pre;">$</div>
<div style="position:absolute;left:944.88px;top:765.24px;font-family:'Liberation Sans',sans-serif;font-size:17.2px;line-height:17.2px;color:#000;font-weight:normal;white-space:pre;transform:scaleX(1.0400);transform-origin:0 0;">10.00</div>
<div style="position:absolute;left:1008.23px;top:765.24px;font-family:'Liberation Sans',sans-serif;font-size:17.2px;line-height:17.2px;color:#000;font-weight:normal;white-space:pre;">$</div>
<div style="position:absolute;left:1061.48px;top:765.24px;font-family:'Liberation Sans',sans-serif;font-size:17.2px;line-height:17.2px;color:#000;font-weight:normal;white-space:pre;transform:scaleX(1.0400);transform-origin:0 0;">12.00</div>
<div style="position:absolute;left:1125.63px;top:765.24px;font-family:'Liberation Sans',sans-serif;font-size:17.2px;line-height:17.2px;color:#000;font-weight:normal;white-space:pre;">$</div>
<div style="position:absolute;left:1170.02px;top:765.24px;font-family:'Liberation Sans',sans-serif;font-size:17.2px;line-height:17.2px;color:#000;font-weight:normal;white-space:pre;transform:scaleX(1.0400);transform-origin:0 0;">4,404.00</div>
<div style="position:absolute;left:1258.43px;top:765.24px;font-family:'Liberation Sans',sans-serif;font-size:17.2px;line-height:17.2px;color:#000;font-weight:normal;white-space:pre;">$</div>
<div style="position:absolute;left:1330.51px;top:765.24px;font-family:'Liberation Sans',sans-serif;font-size:17.2px;line-height:17.2px;color:#000;font-weight:normal;white-space:pre;">-</div>
<div style="position:absolute;left:1375.83px;top:765.24px;font-family:'Liberation Sans',sans-serif;font-size:17.2px;line-height:17.2px;color:#000;font-weight:normal;white-space:pre;">$</div>
<div style="position:absolute;left:1453.02px;top:765.24px;font-family:'Liberation Sans',sans-serif;font-size:17.2px;line-height:17.2px;color:#000;font-weight:normal;white-space:pre;transform:scaleX(1.0400);transform-origin:0 0;">4,404.00</div>
<div style="position:absolute;left:1783.05px;top:765.24px;font-family:'Liberation Sans',sans-serif;font-size:17.2px;line-height:17.2px;color:#000;font-weight:normal;white-space:pre;transform:scaleX(1.0400);transform-origin:0 0;">00</div>
<div style="position:absolute;left:1824.96px;top:765.24px;font-family:'Liberation Sans',sans-serif;font-size:17.2px;line-height:17.2px;color:#000;font-weight:normal;white-space:pre;transform:scaleX(1.0400);transform-origin:0 0;">01-07-20</div>
<div style="position:absolute;left:8.32px;top:790.24px;font-family:'Liberation Sans',sans-serif;font-size:17.2px;line-height:17.2px;color:#217346;font-weight:normal;white-space:pre;">23</div>
<div style="position:absolute;left:39.65px;top:790.95px;font-family:'Liberation Sans',sans-serif;font-size:16.95px;line-height:16.95px;color:#000;font-weight:normal;white-space:pre;">Government</div>
<div style="position:absolute;left:190.94px;top:790.95px;font-family:'Liberation Sans',sans-serif;font-size:16.95px;line-height:16.95px;color:#000;font-weight:normal;white-space:pre;">Mexico</div>
<div style="position:absolute;left:445.04px;top:790.95px;font-family:'Liberation Sans',sans-serif;font-size:16.95px;line-height:16.95px;color:#000;font-weight:normal;white-space:pre;">Paseo</div>
<div style="position:absolute;left:578.14px;top:790.95px;font-family:'Liberation Sans',sans-serif;font-size:16.95px;line-height:16.95px;color:#000;font-weight:normal;white-space:pre;">None</div>
<div style="position:absolute;left:831.80px;top:790.24px;font-family:'Liberation Sans',sans-serif;font-size:17.2px;line-height:17.2px;color:#000;font-weight:normal;white-space:pre;transform:scaleX(1.0400);transform-origin:0 0;">883</div>
<div style="position:absolute;left:875.23px;top:790.24px;font-family:'Liberation Sans',sans-serif;font-size:17.2px;line-height:17.2px;color:#000;font-weight:normal;white-space:pre;">$</div>
<div style="position:absolute;left:944.88px;top:790.24px;font-family:'Liberation Sans',sans-serif;font-size:17.2px;line-height:17.2px;color:#000;font-weight:normal;white-space:pre;transform:scaleX(1.0400);transform-origin:0 0;">10.00</div>
<div style="position:absolute;left:1008.23px;top:790.24px;font-family:'Liberation Sans',sans-serif;font-size:17.2px;line-height:17.2px;color:#000;font-weight:normal;white-space:pre;">$</div>
<div style="position:absolute;left:1071.43px;top:790.24px;font-family:'Liberation Sans',sans-serif;font-size:17.2px;line-height:17.2px;color:#000;font-weight:normal;white-space:pre;transform:scaleX(1.0400);transform-origin:0 0;">7.00</div>
<div style="position:absolute;left:1125.63px;top:790.24px;font-family:'Liberation Sans',sans-serif;font-size:17.2px;line-height:17.2px;color:#000;font-weight:normal;white-space:pre;">$</div>
<div style="position:absolute;left:1170.02px;top:790.24px;font-family:'Liberation Sans',sans-serif;font-size:17.2px;line-height:17.2px;color:#000;font-weight:normal;white-space:pre;transform:scaleX(1.0400);transform-origin:0 0;">6,181.00</div>
<div style="position:absolute;left:1258.43px;top:790.24px;font-family:'Liberation Sans',sans-serif;font-size:17.2px;line-height:17.2px;color:#000;font-weight:normal;white-space:pre;">$</div>
<div style="position:absolute;left:1330.51px;top:790.24px;font-family:'Liberation Sans',sans-serif;font-size:17.2px;line-height:17.2px;color:#000;font-weight:normal;white-space:pre;">-</div>
<div style="position:absolute;left:1375.83px;top:790.24px;font-family:'Liberation Sans',sans-serif;font-size:17.2px;line-height:17.2px;color:#000;font-weight:normal;white-space:pre;">$</div>
<div style="position:absolute;left:1453.02px;top:790.24px;font-family:'Liberation Sans',sans-serif;font-size:17.2px;line-height:17.2px;color:#000;font-weight:normal;white-space:pre;transform:scaleX(1.0400);transform-origin:0 0;">6,181.00</div>
<div style="position:absolute;left:1783.05px;top:790.24px;font-family:'Liberation Sans',sans-serif;font-size:17.2px;line-height:17.2px;color:#000;font-weight:normal;white-space:pre;transform:scaleX(1.0400);transform-origin:0 0;">00</div>
<div style="position:absolute;left:1824.96px;top:790.24px;font-family:'Liberation Sans',sans-serif;font-size:17.2px;line-height:17.2px;color:#000;font-weight:normal;white-space:pre;transform:scaleX(1.0400);transform-origin:0 0;">01-08-20</div>
<div style="position:absolute;left:8.23px;top:815.24px;font-family:'Liberation Sans',sans-serif;font-size:17.2px;line-height:17.2px;color:#217346;font-weight:normal;white-space:pre;">24</div>
<div style="position:absolute;left:39.14px;top:815.95px;font-family:'Liberation Sans',sans-serif;font-size:16.95px;line-height:16.95px;color:#000;font-weight:normal;white-space:pre;">Midmarket</div>
<div style="position:absolute;left:190.94px;top:815.95px;font-family:'Liberation Sans',sans-serif;font-size:16.95px;line-height:16.95px;color:#000;font-weight:normal;white-space:pre;">France</div>
<div style="position:absolute;left:445.04px;top:815.95px;font-family:'Liberation Sans',sans-serif;font-size:16.95px;line-height:16.95px;color:#000;font-weight:normal;white-space:pre;">Paseo</div>
<div style="position:absolute;left:578.14px;top:815.95px;font-family:'Liberation Sans',sans-serif;font-size:16.95px;line-height:16.95px;color:#000;font-weight:normal;white-space:pre;">None</div>
<div style="position:absolute;left:831.98px;top:815.24px;font-family:'Liberation Sans',sans-serif;font-size:17.2px;line-height:17.2px;color:#000;font-weight:normal;white-space:pre;transform:scaleX(1.0400);transform-origin:0 0;">549</div>
<div style="position:absolute;left:875.23px;top:815.24px;font-family:'Liberation Sans',sans-serif;font-size:17.2px;line-height:17.2px;color:#000;font-weight:normal;white-space:pre;">$</div>
<div style="position:absolute;left:944.88px;top:815.24px;font-family:'Liberation Sans',sans-serif;font-size:17.2px;line-height:17.2px;color:#000;font-weight:normal;white-space:pre;transform:scaleX(1.0400);transform-origin:0 0;">10.00</div>
<div style="position:absolute;left:1008.23px;top:815.24px;font-family:'Liberation Sans',sans-serif;font-size:17.2px;line-height:17.2px;color:#000;font-weight:normal;white-space:pre;">$</div>
<div style="position:absolute;left:1061.48px;top:815.24px;font-family:'Liberation Sans',sans-serif;font-size:17.2px;line-height:17.2px;color:#000;font-weight:normal;white-space:pre;transform:scaleX(1.0400);transform-origin:0 0;">15.00</div>
<div style="position:absolute;left:1125.63px;top:815.24px;font-family:'Liberation Sans',sans-serif;font-size:17.2px;line-height:17.2px;color:#000;font-weight:normal;white-space:pre;">$</div>
<div style="position:absolute;left:1170.02px;top:815.24px;font-family:'Liberation Sans',sans-serif;font-size:17.2px;line-height:17.2px;color:#000;font-weight:normal;white-space:pre;transform:scaleX(1.0400);transform-origin:0 0;">8,235.00</div>
<div style="position:absolute;left:1258.43px;top:815.24px;font-family:'Liberation Sans',sans-serif;font-size:17.2px;line-height:17.2px;color:#000;font-weight:normal;white-space:pre;">$</div>
<div style="position:absolute;left:1330.51px;top:815.24px;font-family:'Liberation Sans',sans-serif;font-size:17.2px;line-height:17.2px;color:#000;font-weight:normal;white-space:pre;">-</div>
<div style="position:absolute;left:1375.83px;top:815.24px;font-family:'Liberation Sans',sans-serif;font-size:17.2px;line-height:17.2px;color:#000;font-weight:normal;white-space:pre;">$</div>
<div style="position:absolute;left:1453.02px;top:815.24px;font-family:'Liberation Sans',sans-serif;font-size:17.2px;line-height:17.2px;color:#000;font-weight:normal;white-space:pre;transform:scaleX(1.0400);transform-origin:0 0;">8,235.00</div>
<div style="position:absolute;left:1542.63px;top:815.24px;font-family:'Liberation Sans',sans-serif;font-size:17.2px;line-height:17.2px;color:#000;font-weight:normal;white-space:pre;">$</div>
<div style="position:absolute;left:1560.52px;top:815.24px;font-family:'Liberation Sans',sans-serif;font-size:17.2px;line-height:17.2px;color:#000;font-weight:normal;white-space:pre;transform:scaleX(1.0400);transform-origin:0 0;">5,490.00</div>
<div style="position:absolute;left:1650.23px;top:815.24px;font-family:'Liberation Sans',sans-serif;font-size:17.2px;line-height:17.2px;color:#000;font-weight:normal;white-space:pre;">$</div>
<div style="position:absolute;left:1733.32px;top:815.24px;font-family:'Liberation Sans',sans-serif;font-size:17.2px;line-height:17.2px;color:#000;font-weight:normal;white-space:pre;transform:scaleX(1.0400);transform-origin:0 0;">2,745.00</div>
<div style="position:absolute;left:1824.96px;top:815.24px;font-family:'Liberation Sans',sans-serif;font-size:17.2px;line-height:17.2px;color:#000;font-weight:normal;white-space:pre;transform:scaleX(1.0400);transform-origin:0 0;">01-09-20</div>
<div style="position:absolute;left:8.32px;top:840.24px;font-family:'Liberation Sans',sans-serif;font-size:17.2px;line-height:17.2px;color:#217346;font-weight:normal;white-space:pre;">25</div>
<div style="position:absolute;left:39.82px;top:840.95px;font-family:'Liberation Sans',sans-serif;font-size:16.95px;line-height:16.95px;color:#000;font-weight:normal;white-space:pre;">Small Business</div>
<div style="position:absolute;left:190.94px;top:840.95px;font-family:'Liberation Sans',sans-serif;font-size:16.95px;line-height:16.95px;color:#000;font-weight:normal;white-space:pre;">Mexico</div>
<div style="position:absolute;left:445.04px;top:840.95px;font-family:'Liberation Sans',sans-serif;font-size:16.95px;line-height:16.95px;color:#000;font-weight:normal;white-space:pre;">Paseo</div>
<div style="position:absolute;left:578.14px;top:840.95px;font-family:'Liberation Sans',sans-serif;font-size:16.95px;line-height:16.95px;color:#000;font-weight:normal;white-space:pre;">None</div>
<div style="position:absolute;left:831.80px;top:840.24px;font-family:'Liberation Sans',sans-serif;font-size:17.2px;line-height:17.2px;color:#000;font-weight:normal;white-space:pre;transform:scaleX(1.0400);transform-origin:0 0;">788</div>
<div style="position:absolute;left:875.23px;top:840.24px;font-family:'Liberation Sans',sans-serif;font-size:17.2px;line-height:17.2px;color:#000;font-weight:normal;white-space:pre;">$</div>
<div style="position:absolute;left:944.88px;top:840.24px;font-family:'Liberation Sans',sans-serif;font-size:17.2px;line-height:17.2px;color:#000;font-weight:normal;white-space:pre;transform:scaleX(1.0400);transform-origin:0 0;">10.00</div>
<div style="position:absolute;left:1008.23px;top:840.24px;font-family:'Liberation Sans',sans-serif;font-size:17.2px;line-height:17.2px;color:#000;font-weight:normal;white-space:pre;">$</div>
<div style="position:absolute;left:1051.53px;top:840.24px;font-family:'Liberation Sans',sans-serif;font-size:17.2px;line-height:17.2px;color:#000;font-weight:normal;white-space:pre;transform:scaleX(1.0400);transform-origin:0 0;">300.00</div>
<div style="position:absolute;left:1125.63px;top:840.24px;font-family:'Liberation Sans',sans-serif;font-size:17.2px;line-height:17.2px;color:#000;font-weight:normal;white-space:pre;">$</div>
<div style="position:absolute;left:1145.15px;top:840.24px;font-family:'Liberation Sans',sans-serif;font-size:17.2px;line-height:17.2px;color:#000;font-weight:normal;white-space:pre;transform:scaleX(1.0400);transform-origin:0 0;">2,36,400.00</div>
<div style="position:absolute;left:1258.43px;top:840.24px;font-family:'Liberation Sans',sans-serif;font-size:17.2px;line-height:17.2px;color:#000;font-weight:normal;white-space:pre;">$</div>
<div style="position:absolute;left:1330.51px;top:840.24px;font-family:'Liberation Sans',sans-serif;font-size:17.2px;line-height:17.2px;color:#000;font-weight:normal;white-space:pre;">-</div>
<div style="position:absolute;left:1375.83px;top:840.24px;font-family:'Liberation Sans',sans-serif;font-size:17.2px;line-height:17.2px;color:#000;font-weight:normal;white-space:pre;">$</div>
<div style="position:absolute;left:1428.15px;top:840.24px;font-family:'Liberation Sans',sans-serif;font-size:17.2px;line-height:17.2px;color:#000;font-weight:normal;white-space:pre;transform:scaleX(1.0400);transform-origin:0 0;">2,36,400.00</div>
<div style="position:absolute;left:1545.00px;top:840.24px;font-family:'Liberation Sans',sans-serif;font-size:17.2px;line-height:17.2px;color:#000;font-weight:normal;white-space:pre;transform:scaleX(0.9402);transform-origin:0 0;">##########</div>
<div style="position:absolute;left:1650.23px;top:840.24px;font-family:'Liberation Sans',sans-serif;font-size:17.2px;line-height:17.2px;color:#000;font-weight:normal;white-space:pre;">$</div>
<div style="position:absolute;left:1723.37px;top:840.24px;font-family:'Liberation Sans',sans-serif;font-size:17.2px;line-height:17.2px;color:#000;font-weight:normal;white-space:pre;transform:scaleX(1.0400);transform-origin:0 0;">39,400.00</div>
<div style="position:absolute;left:1824.96px;top:840.24px;font-family:'Liberation Sans',sans-serif;font-size:17.2px;line-height:17.2px;color:#000;font-weight:normal;white-space:pre;transform:scaleX(1.0400);transform-origin:0 0;">01-09-20</div>
<div style="position:absolute;left:8.32px;top:865.24px;font-family:'Liberation Sans',sans-serif;font-size:17.2px;line-height:17.2px;color:#217346;font-weight:normal;white-space:pre;">26</div>
<div style="position:absolute;left:39.14px;top:865.95px;font-family:'Liberation Sans',sans-serif;font-size:16.95px;line-height:16.95px;color:#000;font-weight:normal;white-space:pre;">Midmarket</div>
<div style="position:absolute;left:190.94px;top:865.95px;font-family:'Liberation Sans',sans-serif;font-size:16.95px;line-height:16.95px;color:#000;font-weight:normal;white-space:pre;">Mexico</div>
<div style="position:absolute;left:445.04px;top:865.95px;font-family:'Liberation Sans',sans-serif;font-size:16.95px;line-height:16.95px;color:#000;font-weight:normal;white-space:pre;">Paseo</div>
<div style="position:absolute;left:578.14px;top:865.95px;font-family:'Liberation Sans',sans-serif;font-size:16.95px;line-height:16.95px;color:#000;font-weight:normal;white-space:pre;">None</div>
<div style="position:absolute;left:822.03px;top:865.24px;font-family:'Liberation Sans',sans-serif;font-size:17.2px;line-height:17.2px;color:#000;font-weight:normal;white-space:pre;transform:scaleX(1.0400);transform-origin:0 0;">2472</div>
<div style="position:absolute;left:875.23px;top:865.24px;font-family:'Liberation Sans',sans-serif;font-size:17.2px;line-height:17.2px;color:#000;font-weight:normal;white-space:pre;">$</div>
<div style="position:absolute;left:944.88px;top:865.24px;font-family:'Liberation Sans',sans-serif;font-size:17.2px;line-height:17.2px;color:#000;font-weight:normal;white-space:pre;transform:scaleX(1.0400);transform-origin:0 0;">10.00</div>
<div style="position:absolute;left:1008.23px;top:865.24px;font-family:'Liberation Sans',sans-serif;font-size:17.2px;line-height:17.2px;color:#000;font-weight:normal;white-space:pre;">$</div>
<div style="position:absolute;left:1061.48px;top:865.24px;font-family:'Liberation Sans',sans-serif;font-size:17.2px;line-height:17.2px;color:#000;font-weight:normal;white-space:pre;transform:scaleX(1.0400);transform-origin:0 0;">15.00</div>
<div style="position:absolute;left:1125.63px;top:865.24px;font-family:'Liberation Sans',sans-serif;font-size:17.2px;line-height:17.2px;color:#000;font-weight:normal;white-space:pre;">$</div>
<div style="position:absolute;left:1160.07px;top:865.24px;font-family:'Liberation Sans',sans-serif;font-size:17.2px;line-height:17.2px;color:#000;font-weight:normal;white-space:pre;transform:scaleX(1.0400);transform-origin:0 0;">37,080.00</div>
<div style="position:absolute;left:1258.43px;top:865.24px;font-family:'Liberation Sans',sans-serif;font-size:17.2px;line-height:17.2px;color:#000;font-weight:normal;white-space:pre;">$</div>
<div style="position:absolute;left:1330.51px;top:865.24px;font-family:'Liberation Sans',sans-serif;font-size:17.2px;line-height:17.2px;color:#000;font-weight:normal;white-space:pre;">-</div>
<div style="position:absolute;left:1375.83px;top:865.24px;font-family:'Liberation Sans',sans-serif;font-size:17.2px;line-height:17.2px;color:#000;font-weight:normal;white-space:pre;">$</div>
<div style="position:absolute;left:1443.07px;top:865.24px;font-family:'Liberation Sans',sans-serif;font-size:17.2px;line-height:17.2px;color:#000;font-weight:normal;white-space:pre;transform:scaleX(1.0400);transform-origin:0 0;">37,080.00</div>
<div style="position:absolute;left:1545.00px;top:865.24px;font-family:'Liberation Sans',sans-serif;font-size:17.2px;line-height:17.2px;color:#000;font-weight:normal;white-space:pre;transform:scaleX(0.9402);transform-origin:0 0;">##########</div>
<div style="position:absolute;left:1650.23px;top:865.24px;font-family:'Liberation Sans',sans-serif;font-size:17.2px;line-height:17.2px;color:#000;font-weight:normal;white-space:pre;">$</div>
<div style="position:absolute;left:1723.37px;top:865.24px;font-family:'Liberation Sans',sans-serif;font-size:17.2px;line-height:17.2px;color:#000;font-weight:normal;white-space:pre;transform:scaleX(1.0400);transform-origin:0 0;">12,360.00</div>
<div style="position:absolute;left:1824.96px;top:865.24px;font-family:'Liberation Sans',sans-serif;font-size:17.2px;line-height:17.2px;color:#000;font-weight:normal;white-space:pre;transform:scaleX(1.0400);transform-origin:0 0;">01-09-20</div>
<div style="position:absolute;left:8.40px;top:890.24px;font-family:'Liberation Sans',sans-serif;font-size:17.2px;line-height:17.2px;color:#217346;font-weight:normal;white-space:pre;">27</div>
<div style="position:absolute;left:39.65px;top:890.95px;font-family:'Liberation Sans',sans-serif;font-size:16.95px;line-height:16.95px;color:#000;font-weight:normal;white-space:pre;">Government</div>
<div style="position:absolute;left:191.11px;top:890.95px;font-family:'Liberation Sans',sans-serif;font-size:16.95px;line-height:16.95px;color:#000;font-weight:normal;white-space:pre;">United States of America</div>
<div style="position:absolute;left:445.04px;top:890.95px;font-family:'Liberation Sans',sans-serif;font-size:16.95px;line-height:16.95px;color:#000;font-weight:normal;white-space:pre;">Paseo</div>
<div style="position:absolute;left:578.14px;top:890.95px;font-family:'Liberation Sans',sans-serif;font-size:16.95px;line-height:16.95px;color:#000;font-weight:normal;white-space:pre;">None</div>
<div style="position:absolute;left:823.18px;top:890.24px;font-family:'Liberation Sans',sans-serif;font-size:17.2px;line-height:17.2px;color:#000;font-weight:normal;white-space:pre;transform:scaleX(1.0400);transform-origin:0 0;">1143</div>
<div style="position:absolute;left:875.23px;top:890.24px;font-family:'Liberation Sans',sans-serif;font-size:17.2px;line-height:17.2px;color:#000;font-weight:normal;white-space:pre;">$</div>
<div style="position:absolute;left:944.88px;top:890.24px;font-family:'Liberation Sans',sans-serif;font-size:17.2px;line-height:17.2px;color:#000;font-weight:normal;white-space:pre;transform:scaleX(1.0400);transform-origin:0 0;">10.00</div>
<div style="position:absolute;left:1008.23px;top:890.24px;font-family:'Liberation Sans',sans-serif;font-size:17.2px;line-height:17.2px;color:#000;font-weight:normal;white-space:pre;">$</div>
<div style="position:absolute;left:1071.43px;top:890.24px;font-family:'Liberation Sans',sans-serif;font-size:17.2px;line-height:17.2px;color:#000;font-weight:normal;white-space:pre;transform:scaleX(1.0400);transform-origin:0 0;">7.00</div>
<div style="position:absolute;left:1125.63px;top:890.24px;font-family:'Liberation Sans',sans-serif;font-size:17.2px;line-height:17.2px;color:#000;font-weight:normal;white-space:pre;">$</div>
<div style="position:absolute;left:1170.02px;top:890.24px;font-family:'Liberation Sans',sans-serif;font-size:17.2px;line-height:17.2px;color:#000;font-weight:normal;white-space:pre;transform:scaleX(1.0400);transform-origin:0 0;">8,001.00</div>
<div style="position:absolute;left:1258.43px;top:890.24px;font-family:'Liberation Sans',sans-serif;font-size:17.2px;line-height:17.2px;color:#000;font-weight:normal;white-space:pre;">$</div>
<div style="position:absolute;left:1330.51px;top:890.24px;font-family:'Liberation Sans',sans-serif;font-size:17.2px;line-height:17.2px;color:#000;font-weight:normal;white-space:pre;">-</div>
<div style="position:absolute;left:1375.83px;top:890.24px;font-family:'Liberation Sans',sans-serif;font-size:17.2px;line-height:17.2px;color:#000;font-weight:normal;white-space:pre;">$</div>
<div style="position:absolute;left:1453.02px;top:890.24px;font-family:'Liberation Sans',sans-serif;font-size:17.2px;line-height:17.2px;color:#000;font-weight:normal;white-space:pre;transform:scaleX(1.0400);transform-origin:0 0;">8,001.00</div>
<div style="position:absolute;left:1542.63px;top:890.24px;font-family:'Liberation Sans',sans-serif;font-size:17.2px;line-height:17.2px;color:#000;font-weight:normal;white-space:pre;">$</div>
<div style="position:absolute;left:1560.52px;top:890.24px;font-family:'Liberation Sans',sans-serif;font-size:17.2px;line-height:17.2px;color:#000;font-weight:normal;white-space:pre;transform:scaleX(1.0400);transform-origin:0 0;">5,715.00</div>
<div style="position:absolute;left:1650.23px;top:890.24px;font-family:'Liberation Sans',sans-serif;font-size:17.2px;line-height:17.2px;color:#000;font-weight:normal;white-space:pre;">$</div>
<div style="position:absolute;left:1733.32px;top:890.24px;font-family:'Liberation Sans',sans-serif;font-size:17.2px;line-height:17.2px;color:#000;font-weight:normal;white-space:pre;transform:scaleX(1.0400);transform-origin:0 0;">2,286.00</div>
<div style="position:absolute;left:1824.96px;top:890.24px;font-family:'Liberation Sans',sans-serif;font-size:17.2px;line-height:17.2px;color:#000;font-weight:normal;white-space:pre;transform:scaleX(1.0400);transform-origin:0 0;">01-10-20</div>
<div style="position:absolute;left:8.32px;top:915.24px;font-family:'Liberation Sans',sans-serif;font-size:17.2px;line-height:17.2px;color:#217346;font-weight:normal;white-space:pre;">28</div>
<div style="position:absolute;left:39.65px;top:915.95px;font-family:'Liberation Sans',sans-serif;font-size:16.95px;line-height:16.95px;color:#000;font-weight:normal;white-space:pre;">Government</div>
<div style="position:absolute;left:191.45px;top:915.95px;font-family:'Liberation Sans',sans-serif;font-size:16.95px;line-height:16.95px;color:#000;font-weight:normal;white-space:pre;">Canada</div>
<div style="position:absolute;left:445.04px;top:915.95px;font-family:'Liberation Sans',sans-serif;font-size:16.95px;line-height:16.95px;color:#000;font-weight:normal;white-space:pre;">Paseo</div>
<div style="position:absolute;left:578.14px;top:915.95px;font-family:'Liberation Sans',sans-serif;font-size:16.95px;line-height:16.95px;color:#000;font-weight:normal;white-space:pre;">None</div>
<div style="position:absolute;left:821.85px;top:915.24px;font-family:'Liberation Sans',sans-serif;font-size:17.2px;line-height:17.2px;color:#000;font-weight:normal;white-space:pre;transform:scaleX(1.0400);transform-origin:0 0;">1725</div>
<div style="position:absolute;left:875.23px;top:915.24px;font-family:'Liberation Sans',sans-serif;font-size:17.2px;line-height:17.2px;color:#000;font-weight:normal;white-space:pre;">$</div>
<div style="position:absolute;left:944.88px;top:915.24px;font-family:'Liberation Sans',sans-serif;font-size:17.2px;line-height:17.2px;color:#000;font-weight:normal;white-space:pre;transform:scaleX(1.0400);transform-origin:0 0;">10.00</div>
<div style="position:absolute;left:1008.23px;top:915.24px;font-family:'Liberation Sans',sans-serif;font-size:17.2px;line-height:17.2px;color:#000;font-weight:normal;white-space:pre;">$</div>
<div style="position:absolute;left:1051.53px;top:915.24px;font-family:'Liberation Sans',sans-serif;font-size:17.2px;line-height:17.2px;color:#000;font-weight:normal;white-space:pre;transform:scaleX(1.0400);transform-origin:0 0;">350.00</div>
<div style="position:absolute;left:1125.63px;top:915.24px;font-family:'Liberation Sans',sans-serif;font-size:17.2px;line-height:17.2px;color:#000;font-weight:normal;white-space:pre;">$</div>
<div style="position:absolute;left:1145.15px;top:915.24px;font-family:'Liberation Sans',sans-serif;font-size:17.2px;line-height:17.2px;color:#000;font-weight:normal;white-space:pre;transform:scaleX(1.0400);transform-origin:0 0;">6,03,750.00</div>
<div style="position:absolute;left:1258.43px;top:915.24px;font-family:'Liberation Sans',sans-serif;font-size:17.2px;line-height:17.2px;color:#000;font-weight:normal;white-space:pre;">$</div>
<div style="position:absolute;left:1330.51px;top:915.24px;font-family:'Liberation Sans',sans-serif;font-size:17.2px;line-height:17.2px;color:#000;font-weight:normal;white-space:pre;">-</div>
<div style="position:absolute;left:1375.83px;top:915.24px;font-family:'Liberation Sans',sans-serif;font-size:17.2px;line-height:17.2px;color:#000;font-weight:normal;white-space:pre;">$</div>
<div style="position:absolute;left:1428.15px;top:915.24px;font-family:'Liberation Sans',sans-serif;font-size:17.2px;line-height:17.2px;color:#000;font-weight:normal;white-space:pre;transform:scaleX(1.0400);transform-origin:0 0;">6,03,750.00</div>
<div style="position:absolute;left:1545.00px;top:915.24px;font-family:'Liberation Sans',sans-serif;font-size:17.2px;line-height:17.2px;color:#000;font-weight:normal;white-space:pre;transform:scaleX(0.9402);transform-origin:0 0;">##########</div>
<div style="position:absolute;left:1650.23px;top:915.24px;font-family:'Liberation Sans',sans-serif;font-size:17.2px;line-height:17.2px;color:#000;font-weight:normal;white-space:pre;">$</div>
<div style="position:absolute;left:1708.45px;top:915.24px;font-family:'Liberation Sans',sans-serif;font-size:17.2px;line-height:17.2px;color:#000;font-weight:normal;white-space:pre;transform:scaleX(1.0400);transform-origin:0 0;">1,55,250.00</div>
<div style="position:absolute;left:1824.96px;top:915.24px;font-family:'Liberation Sans',sans-serif;font-size:17.2px;line-height:17.2px;color:#000;font-weight:normal;white-space:pre;transform:scaleX(1.0400);transform-origin:0 0;">01-11-20</div>
<div style="position:absolute;left:13.01px;top:240.04px;font-family:'Liberation Sans',sans-serif;font-size:17.2px;line-height:17.2px;color:#217346;font-weight:normal;white-space:pre;">1</div>
<div style="position:absolute;left:879px;top:939px;width:1px;height:2px;background:#555555;"></div>
<div style="position:absolute;left:1012px;top:939px;width:1px;height:2px;background:#555555;"></div>
<div style="position:absolute;left:1129px;top:939px;width:1px;height:2px;background:#555555;"></div>
<div style="position:absolute;left:1262px;top:939px;width:1px;height:2px;background:#555555;"></div>
<div style="position:absolute;left:1380px;top:939px;width:1px;height:2px;background:#555555;"></div>
<div style="position:absolute;left:1654px;top:939px;width:1px;height:2px;background:#555555;"></div>
<div style="position:absolute;left:1889px;top:234px;width:1px;height:707px;background:#D4D4D4;"></div>
<div style="position:absolute;left:1890px;top:234px;width:30px;height:707px;background:#F0F0F0;"></div>
<div style="position:absolute;left:1892px;top:236px;width:25px;height:26px;box-sizing:border-box;border:1px solid #ABABAB;background:#FFFFFF;"></div>
<div style="position:absolute;left:1892px;top:917px;width:25px;height:24px;box-sizing:border-box;border:1px solid #ABABAB;background:#FFFFFF;"></div>
<svg style="position:absolute;left:1898px;top:926px;" width="12" height="7" viewBox="0 0 12 7"><path d="M0 0 L12 0 L6 6.5Z" fill="#444"/></svg>
<div style="position:absolute;left:0px;top:941px;width:1920px;height:34px;background:#E6E6E6;"></div>
<div style="position:absolute;left:0px;top:941px;width:1920px;height:1px;background:#C6C6C6;"></div>
<svg style="position:absolute;left:29px;top:952px;" width="7" height="11" viewBox="0 0 7 11"><path d="M6 0 L6 11 L0 5.5Z" fill="#C6C6C6"/></svg>
<svg style="position:absolute;left:63px;top:952px;" width="7" height="11" viewBox="0 0 7 11"><path d="M0 0 L0 11 L6.5 5.5Z" fill="#C6C6C6"/></svg>
<div style="position:absolute;left:118px;top:941px;width:90px;height:31px;background:#FFFFFF;border-left:1px solid #C6C6C6;border-right:1px solid #C6C6C6;box-sizing:border-box;"></div>
<div style="position:absolute;left:118px;top:969px;width:90px;height:3px;background:#217346;"></div>
<div style="position:absolute;left:130.21px;top:947.74px;font-family:'Liberation Sans',sans-serif;font-size:18.5px;line-height:18.5px;color:#217346;font-weight:bold;white-space:pre;transform:scaleX(1.0483);transform-origin:0 0;">Sheet1</div>
<div style="position:absolute;left:220.64px;top:947.74px;font-family:'Liberation Sans',sans-serif;font-size:18.5px;line-height:18.5px;color:#444444;font-weight:normal;white-space:pre;transform:scaleX(1.0273);transform-origin:0 0;">Sheet2</div>
<div style="position:absolute;left:295px;top:945px;width:1px;height:25px;background:#C6C6C6;"></div>
<svg style="position:absolute;left:334px;top:947px;" width="24" height="24" viewBox="0 0 24 24"><circle cx="12" cy="11" r="10.5" fill="none" stroke="#6A6A6A" stroke-width="1.3"/><path d="M12 5.5V16.5M6.5 11H17.5" stroke="#6A6A6A" stroke-width="1.5"/></svg>
<div style="position:absolute;left:1148px;top:950px;width:3px;height:3px;background:#A0A0A0;"></div>
<div style="position:absolute;left:1148px;top:956px;width:3px;height:3px;background:#A0A0A0;"></div>
<div style="position:absolute;left:1148px;top:962px;width:3px;height:3px;background:#A0A0A0;"></div>
<div style="position:absolute;left:1168px;top:945px;width:25px;height:25px;box-sizing:border-box;border:1px solid #ABABAB;background:#FFFFFF;"></div>
<svg style="position:absolute;left:1176px;top:951px;" width="8" height="13" viewBox="0 0 8 13"><path d="M7 0 L7 12 L0.5 6Z" fill="#222"/></svg>
<div style="position:absolute;left:1192px;top:945px;width:545px;height:25px;box-sizing:border-box;border:1px solid #ABABAB;background:#FFFFFF;"></div>
<div style="position:absolute;left:1863px;top:945px;width:25px;height:25px;box-sizing:border-box;border:1px solid #ABABAB;background:#FFFFFF;"></div>
<svg style="position:absolute;left:1872px;top:951px;" width="8" height="13" viewBox="0 0 8 13"><path d="M0.5 0 L0.5 12 L7 6Z" fill="#222"/></svg>
<div style="position:absolute;left:0px;top:975px;width:1920px;height:33px;background:#F3F3F3;"></div>
<div style="position:absolute;left:0px;top:1008px;width:1920px;height:2px;background:#B4B4B8;"></div>
<div style="position:absolute;left:10.71px;top:985.26px;font-family:'Liberation Sans',sans-serif;font-size:16px;line-height:16px;color:#444444;font-weight:normal;white-space:pre;transform:scaleX(0.9273);transform-origin:0 0;">Ready</div>
<div style="position:absolute;left:155.50px;top:985.26px;font-family:'Liberation Sans',sans-serif;font-size:16px;line-height:16px;color:#444444;font-weight:normal;white-space:pre;transform:scaleX(0.9518);transform-origin:0 0;">Accessibility: Investigate</div>
<div style="position:absolute;left:1372.83px;top:984.86px;font-family:'Liberation Sans',sans-serif;font-size:16px;line-height:16px;color:#444444;font-weight:normal;white-space:pre;transform:scaleX(0.9682);transform-origin:0 0;">Count: 701</div>
<div style="position:absolute;left:1475px;top:975px;width:60px;height:33px;background:#C8C8C8;"></div>
<div style="position:absolute;left:1868.06px;top:985.26px;font-family:'Liberation Sans',sans-serif;font-size:16px;line-height:16px;color:#444444;font-weight:normal;white-space:pre;">85%</div>
<div style="position:absolute;left:1521px;top:205px;width:263px;height:604px;background:#FFFFFF;border:2px solid #C6C6C6;border-radius:5px;box-sizing:border-box;box-shadow:0 10px 14px -6px rgba(0,0,0,0.22);"></div>
<div style="position:absolute;left:1523px;top:207px;width:259px;height:37px;background:#E9E9E9;border-radius:3px 3px 0 0;"></div>
<div style="position:absolute;left:1523px;top:435px;width:259px;height:37px;background:#E9E9E9;"></div>
<div style="position:absolute;left:1523px;top:472px;width:259px;height:37px;background:#C6C6C6;"></div>
<div style="position:absolute;left:1523px;top:509px;width:259px;height:37px;background:#E9E9E9;"></div>
<div style="position:absolute;left:1523px;top:657px;width:259px;height:37px;background:#E9E9E9;"></div>
<div style="position:absolute;left:1570px;top:321px;width:212px;height:1px;background:#E1E1E1;"></div>
<div style="position:absolute;left:1570px;top:768px;width:212px;height:1px;background:#E1E1E1;"></div>
<div style="position:absolute;left:1533.92px;top:218.21px;font-family:'Liberation Sans',sans-serif;font-size:18.3px;line-height:18.3px;color:#595959;font-weight:bold;white-space:pre;transform:scaleX(0.9318);transform-origin:0 0;">Cell Size</div>
<div style="position:absolute;left:1534.70px;top:446.31px;font-family:'Liberation Sans',sans-serif;font-size:18.3px;line-height:18.3px;color:#595959;font-weight:bold;white-space:pre;transform:scaleX(0.9574);transform-origin:0 0;">Visibility</div>
<div style="position:absolute;left:1533.99px;top:520.01px;font-family:'Liberation Sans',sans-serif;font-size:18.3px;line-height:18.3px;color:#595959;font-weight:bold;white-space:pre;transform:scaleX(0.9669);transform-origin:0 0;">Organize Sheets</div>
<div style="position:absolute;left:1533.91px;top:667.91px;font-family:'Liberation Sans',sans-serif;font-size:18.3px;line-height:18.3px;color:#595959;font-weight:bold;white-space:pre;transform:scaleX(0.9889);transform-origin:0 0;">Protection</div>
<div style="position:absolute;left:1569.18px;top:258.31px;font-family:'Liberation Sans',sans-serif;font-size:18.3px;line-height:18.3px;color:#555555;font-weight:normal;white-space:pre;transform:scaleX(0.9684);transform-origin:0 0;">Row <u>H</u>eight...</div>
<div style="position:absolute;left:1570.60px;top:295.31px;font-family:'Liberation Sans',sans-serif;font-size:18.3px;line-height:18.3px;color:#555555;font-weight:normal;white-space:pre;transform:scaleX(0.9829);transform-origin:0 0;"><u>A</u>utoFit Row Height</div>
<div style="position:absolute;left:1569.70px;top:335.31px;font-family:'Liberation Sans',sans-serif;font-size:18.3px;line-height:18.3px;color:#555555;font-weight:normal;white-space:pre;transform:scaleX(0.9871);transform-origin:0 0;">Column <u>W</u>idth...</div>
<div style="position:absolute;left:1570.60px;top:372.61px;font-family:'Liberation Sans',sans-serif;font-size:18.3px;line-height:18.3px;color:#555555;font-weight:normal;white-space:pre;">AutoF<u>i</u>t Column Width</div>
<div style="position:absolute;left:1569.14px;top:409.31px;font-family:'Liberation Sans',sans-serif;font-size:18.3px;line-height:18.3px;color:#555555;font-weight:normal;white-space:pre;transform:scaleX(0.9949);transform-origin:0 0;"><u>D</u>efault Width...</div>
<div style="position:absolute;left:1569.24px;top:556.91px;font-family:'Liberation Sans',sans-serif;font-size:18.3px;line-height:18.3px;color:#555555;font-weight:normal;white-space:pre;transform:scaleX(0.9291);transform-origin:0 0;"><u>R</u>ename Sheet</div>
<div style="position:absolute;left:1570.24px;top:631.11px;font-family:'Liberation Sans',sans-serif;font-size:18.3px;line-height:18.3px;color:#555555;font-weight:normal;white-space:pre;transform:scaleX(0.9702);transform-origin:0 0;"><u>T</u>ab Color</div>
<div style="position:absolute;left:1569.22px;top:705.21px;font-family:'Liberation Sans',sans-serif;font-size:18.3px;line-height:18.3px;color:#555555;font-weight:normal;white-space:pre;transform:scaleX(0.9418);transform-origin:0 0;"><u>P</u>rotect Sheet...</div>
<div style="position:absolute;left:1569.24px;top:742.31px;font-family:'Liberation Sans',sans-serif;font-size:18.3px;line-height:18.3px;color:#555555;font-weight:normal;white-space:pre;transform:scaleX(0.9317);transform-origin:0 0;"><u>L</u>ock Cell</div>
<div style="position:absolute;left:1569.23px;top:782.31px;font-family:'Liberation Sans',sans-serif;font-size:18.3px;line-height:18.3px;color:#555555;font-weight:normal;white-space:pre;transform:scaleX(0.9353);transform-origin:0 0;">Format C<u>e</u>lls...</div>
<div style="position:absolute;left:1569.14px;top:482.31px;font-family:'Liberation Sans',sans-serif;font-size:18.3px;line-height:18.3px;color:#262626;font-weight:normal;white-space:pre;">Hide &amp; <u>U</u>nhide</div>
<svg style="position:absolute;left:1762px;top:485px;" width="7" height="12" viewBox="0 0 7 12"><path d="M0 0 L6.5 5.75 L0 11.5Z" fill="#444"/></svg>
<svg style="position:absolute;left:1762px;top:633px;" width="7" height="12" viewBox="0 0 7 12"><path d="M0 0 L6.5 5.75 L0 11.5Z" fill="#666"/></svg>
<svg style="position:absolute;left:1536px;top:560px;" width="10" height="9" viewBox="0 0 10 9"><path d="M3 0H7L10 3V6L7 9H3L0 6V3Z" fill="#F39C1F"/></svg>
<div style="position:absolute;left:1523px;top:588px;width:226px;height:38px;background:#FFFFFF;border:1px solid #C4C4C4;border-radius:4px;box-sizing:border-box;box-shadow:1px 2px 5px rgba(0,0,0,0.18);"></div>
<div style="position:absolute;left:1526.56px;top:599.71px;font-family:'Liberation Sans',sans-serif;font-size:18.3px;line-height:18.3px;color:#555555;font-weight:normal;white-space:pre;transform:scaleX(0.9703);transform-origin:0 0;">Unhide Rows (Ctrl+Shift+( )</div>
<div style="position:absolute;left:1307px;top:473px;width:215px;height:228px;background:#FFFFFF;border:2px solid #C6C6C6;border-radius:5px;box-sizing:border-box;box-shadow:0 10px 14px -6px rgba(0,0,0,0.22);"></div>
<div style="position:absolute;left:1309px;top:588px;width:211px;height:37px;background:#C6C6C6;"></div>
<div style="position:absolute;left:1355.39px;top:485.31px;font-family:'Liberation Sans',sans-serif;font-size:18.3px;line-height:18.3px;color:#555555;font-weight:normal;white-space:pre;transform:scaleX(0.9622);transform-origin:0 0;">Hide <u>R</u>ows</div>
<div style="position:absolute;left:1355.36px;top:522.01px;font-family:'Liberation Sans',sans-serif;font-size:18.3px;line-height:18.3px;color:#555555;font-weight:normal;white-space:pre;transform:scaleX(0.9804);transform-origin:0 0;">Hide <u>C</u>olumns</div>
<div style="position:absolute;left:1355.41px;top:559.21px;font-family:'Liberation Sans',sans-serif;font-size:18.3px;line-height:18.3px;color:#555555;font-weight:normal;white-space:pre;transform:scaleX(0.9504);transform-origin:0 0;">Hide <u>S</u>heet</div>
<div style="position:absolute;left:1355.57px;top:598.81px;font-family:'Liberation Sans',sans-serif;font-size:18.3px;line-height:18.3px;color:#262626;font-weight:normal;white-space:pre;transform:scaleX(0.9598);transform-origin:0 0;">Unhide R<u>o</u>ws</div>
<div style="position:absolute;left:1355.56px;top:635.91px;font-family:'Liberation Sans',sans-serif;font-size:18.3px;line-height:18.3px;color:#555555;font-weight:normal;white-space:pre;transform:scaleX(0.9704);transform-origin:0 0;">Unhide Co<u>l</u>umns</div>
<div style="position:absolute;left:1355.60px;top:673.01px;font-family:'Liberation Sans',sans-serif;font-size:18.3px;line-height:18.3px;color:#B4B4B4;font-weight:normal;white-space:pre;transform:scaleX(0.9378);transform-origin:0 0;">Un<u>h</u>ide Sheet...</div>
<div style="position:absolute;left:1305px;top:583px;width:219px;height:87px;box-sizing:border-box;border:5px solid #E81C24;background:transparent;"></div>
<svg style="position:absolute;left:20px;top:100px;" width="60" height="60" viewBox="0 0 60 60"><g transform="translate(-20 -100)"><rect x="26" y="112" width="32.6" height="37" rx="2" fill="#EAC27A"/><rect x="32" y="112.4" width="21.2" height="4.6" rx="0.8" fill="#6E6E6E"/><path d="M38 116V108.5C38 107.6 38.7 107 39.5 107H45.5C46.3 107 47 107.6 47 108.5V116Z" fill="#6E6E6E"/><circle cx="42.5" cy="110.4" r="1.3" fill="#F3F3F3"/><path d="M46.5 124.3H59.1L66.5 131.7V151.2H46.5Z" fill="#fff" stroke="#7A7A7A" stroke-width="1"/><path d="M59.1 124.3V131.7H66.5" fill="#F3F3F3" stroke="#7A7A7A" stroke-width="1"/></g></svg>
<div style="position:absolute;left:21.69px;top:159.14px;font-family:'Liberation Sans',sans-serif;font-size:18.5px;line-height:18.5px;color:#262626;font-weight:normal;white-space:pre;transform:scaleX(0.8858);transform-origin:0 0;">Paste</div>
<svg style="position:absolute;left:40px;top:188px;" width="8" height="5" viewBox="0 0 8 5"><path d="M0.5 0.5L4 4L7.5 0.5" fill="none" stroke="#444" stroke-width="1.2"/></svg>
<svg style="position:absolute;left:76px;top:100px;" width="30" height="100" viewBox="0 0 30 100"><g transform="translate(-76 -100)"><path d="M83 106L91.5 120.5M95 106L86.5 120.5" stroke="#6E6E6E" stroke-width="2.4"/><circle cx="83.5" cy="123.8" r="3.2" fill="none" stroke="#4A7EBB" stroke-width="1.4"/><circle cx="94.3" cy="123.8" r="3.2" fill="none" stroke="#4A7EBB" stroke-width="1.4"/><path d="M80.5 141.5H87.5L90.5 144.5V155.5H80.5Z" fill="#fff" stroke="#7A7A7A"/><path d="M82 146.5H85M82 149.5H89M82 152.5H89" stroke="#4A7EBB" stroke-width="0.9"/><path d="M89.5 148.5H96.5L99.5 151.5V162.5H89.5Z" fill="#fff" stroke="#7A7A7A"/><path d="M91 153.5H94M91 156.5H98M91 159.5H98" stroke="#4A7EBB" stroke-width="0.9"/><path d="M94 184L99.5 178.5" stroke="#6E6E6E" stroke-width="3.6" stroke-linecap="round"/><path d="M87.5 182.5L92.5 177.5L97 182L92 187Z" fill="#6E6E6E"/><path d="M86.5 183.5L91 188L84.5 196.5L78.5 186Z" fill="#EAC27A"/></g></svg>
<svg style="position:absolute;left:113px;top:152px;" width="8" height="5" viewBox="0 0 8 5"><path d="M0.5 0.5L4 4L7.5 0.5" fill="none" stroke="#444" stroke-width="1.2"/></svg>
<div style="position:absolute;left:154px;top:112px;width:169px;height:35px;box-sizing:border-box;border:1px solid #ABABAB;background:#FFFFFF;"></div>
<div style="position:absolute;left:325px;top:112px;width:65px;height:35px;box-sizing:border-box;border:1px solid #ABABAB;background:#FFFFFF;"></div>
<div style="position:absolute;left:156.82px;top:121.74px;font-family:'Liberation Sans',sans-serif;font-size:18.5px;line-height:18.5px;color:#262626;font-weight:normal;white-space:pre;transform:scaleX(0.9473);transform-origin:0 0;">Calibri</div>
<div style="position:absolute;left:328.15px;top:121.74px;font-family:'Liberation Sans',sans-serif;font-size:18.5px;line-height:18.5px;color:#262626;font-weight:normal;white-space:pre;transform:scaleX(0.9616);transform-origin:0 0;">11</div>
<svg style="position:absolute;left:308px;top:127px;" width="8" height="5" viewBox="0 0 8 5"><path d="M0 0H7.5L3.75 4Z" fill="#555"/></svg>
<svg style="position:absolute;left:375px;top:127px;" width="8" height="5" viewBox="0 0 8 5"><path d="M0 0H7.5L3.75 4Z" fill="#555"/></svg>
<div style="position:absolute;left:398.00px;top:119.33px;font-family:'Liberation Sans',sans-serif;font-size:23px;line-height:23px;color:#555555;font-weight:normal;white-space:pre;transform:scaleX(1.0383);transform-origin:0 0;">A</div>
<svg style="position:absolute;left:411px;top:118px;" width="7" height="4" viewBox="0 0 7 4"><path d="M0 4H7L3.5 0Z" fill="#4A7EBB"/></svg>
<div style="position:absolute;left:432.50px;top:123.14px;font-family:'Liberation Sans',sans-serif;font-size:18.5px;line-height:18.5px;color:#555555;font-weight:normal;white-space:pre;transform:scaleX(1.0649);transform-origin:0 0;">A</div>
<svg style="position:absolute;left:445px;top:118px;" width="7" height="4" viewBox="0 0 7 4"><path d="M0 0H7L3.5 4Z" fill="#4A7EBB"/></svg>
<div style="position:absolute;left:162.23px;top:164.18px;font-family:'Liberation Sans',sans-serif;font-size:22px;line-height:22px;color:#444444;font-weight:bold;white-space:pre;transform:scaleX(0.9604);transform-origin:0 0;">B</div>
<svg style="position:absolute;left:196px;top:165px;" width="15" height="18" viewBox="0 0 15 18"><path d="M5.5 0.5H14.5M0.5 16.5H9.5M10 0.5L5 16.5" stroke="#444" stroke-width="2.6" fill="none"/></svg>
<div style="position:absolute;left:228.87px;top:164.02px;font-family:'Liberation Sans',sans-serif;font-size:21px;line-height:21px;color:#444444;font-weight:normal;white-space:pre;transform:scaleX(1.1084);transform-origin:0 0;">U</div>
<div style="position:absolute;left:230px;top:182px;width:14px;height:2px;background:#444444;"></div>
<svg style="position:absolute;left:261px;top:174px;" width="8" height="5" viewBox="0 0 8 5"><path d="M0.5 0.5L4 4L7.5 0.5" fill="none" stroke="#444" stroke-width="1.2"/></svg>
<div style="position:absolute;left:280px;top:160px;width:1px;height:31px;background:#C8C8C8;"></div>
<svg style="position:absolute;left:288px;top:162px;" width="26" height="26" viewBox="0 0 26 26"><g transform="translate(-288 -162)"><path d="M290.5 164.5H310.5M290.5 174.5H310.5M290.5 164.5V184M300.5 164.5V184M310.5 164.5V184" stroke="#555" stroke-width="1" stroke-dasharray="1 1.1" fill="none"/><path d="M290 184.5H311" stroke="#555" stroke-width="1.1"/></g></svg>
<svg style="position:absolute;left:324px;top:174px;" width="8" height="5" viewBox="0 0 8 5"><path d="M0.5 0.5L4 4L7.5 0.5" fill="none" stroke="#444" stroke-width="1.2"/></svg>
<div style="position:absolute;left:343px;top:160px;width:1px;height:31px;background:#C8C8C8;"></div>
<svg style="position:absolute;left:350px;top:160px;" width="28" height="28" viewBox="0 0 28 28"><g transform="translate(-350 -160)"><path d="M356.5 174L364.5 166L371.5 173L363.5 181Z" fill="#fff" stroke="#555" stroke-width="1.2" stroke-linejoin="round"/><path d="M361.3 169V165.3C361.3 164 362.2 163.2 363.3 163.2C364.4 163.2 365.3 164 365.3 165.3V169.8" fill="none" stroke="#555" stroke-width="1.1"/><circle cx="365.2" cy="170.4" r="1.1" fill="#555"/><path d="M370 169.5C373 170.5 374.5 173.5 373.2 180.2C372.5 177.5 371.5 175.5 369.8 174.6Z" fill="#4A7EBB"/><rect x="352" y="181.2" width="24" height="5.6" fill="#9DC3E6"/></g></svg>
<svg style="position:absolute;left:387px;top:174px;" width="8" height="5" viewBox="0 0 8 5"><path d="M0.5 0.5L4 4L7.5 0.5" fill="none" stroke="#444" stroke-width="1.2"/></svg>
<div style="position:absolute;left:412.19px;top:163.72px;font-family:'Liberation Sans',sans-serif;font-size:21px;line-height:21px;color:#666666;font-weight:bold;white-space:pre;transform:scaleX(0.9874);transform-origin:0 0;">A</div>
<div style="position:absolute;left:408px;top:181px;width:24px;height:6px;background:#FF0000;"></div>
<svg style="position:absolute;left:443px;top:174px;" width="8" height="5" viewBox="0 0 8 5"><path d="M0.5 0.5L4 4L7.5 0.5" fill="none" stroke="#444" stroke-width="1.2"/></svg>
<svg style="position:absolute;left:125px;top:216px;" width="11" height="11" viewBox="0 0 11 11"><path d="M0.5 9V0.5H9" stroke="#666" fill="none"/><path d="M3 3L9.5 9.5M5 10.5H10.5V5" stroke="#444" fill="none" stroke-width="1.1"/></svg>
<svg style="position:absolute;left:452px;top:216px;" width="11" height="11" viewBox="0 0 11 11"><path d="M0.5 9V0.5H9" stroke="#666" fill="none"/><path d="M3 3L9.5 9.5M5 10.5H10.5V5" stroke="#444" fill="none" stroke-width="1.1"/></svg>
<svg style="position:absolute;left:856px;top:216px;" width="11" height="11" viewBox="0 0 11 11"><path d="M0.5 9V0.5H9" stroke="#666" fill="none"/><path d="M3 3L9.5 9.5M5 10.5H10.5V5" stroke="#444" fill="none" stroke-width="1.1"/></svg>
<svg style="position:absolute;left:1077px;top:216px;" width="11" height="11" viewBox="0 0 11 11"><path d="M0.5 9V0.5H9" stroke="#666" fill="none"/><path d="M3 3L9.5 9.5M5 10.5H10.5V5" stroke="#444" fill="none" stroke-width="1.1"/></svg>
<svg style="position:absolute;left:488px;top:110px;" width="26" height="32" viewBox="0 0 26 32"><path d="M0 8.2H20M3.2 12.4H16.6M0 16.4H20" stroke="#666" stroke-width="1.3"/></svg>
<svg style="position:absolute;left:522px;top:110px;" width="26" height="32" viewBox="0 0 26 32"><path d="M0 14.4H20M3.2 18.4H16.6M0 22.4H20" stroke="#666" stroke-width="1.3"/></svg>
<div style="position:absolute;left:550px;top:113px;width:32px;height:34px;box-sizing:border-box;border:1px solid #A2A2A2;background:#C6C6C6;"></div>
<svg style="position:absolute;left:557px;top:110px;" width="26" height="32" viewBox="0 0 26 32"><path d="M0 20.2H20M3.2 24.4H16.6M0 28.4H20" stroke="#666" stroke-width="1.3"/></svg>
<div style="position:absolute;left:586px;top:114px;width:1px;height:32px;background:#C8C8C8;"></div>
<svg style="position:absolute;left:596px;top:119px;" width="24" height="22" viewBox="0 0 24 22"><text x="0" y="0" font-family="Liberation Sans" font-size="12.5" fill="#555" transform="translate(7 18) rotate(-50)">ab</text><path d="M10 19.5L20.5 9M15.5 8.5H21V14" stroke="#555" stroke-width="1.3" fill="none"/></svg>
<svg style="position:absolute;left:626px;top:128px;" width="8" height="5" viewBox="0 0 8 5"><path d="M0.5 0.5L4 4L7.5 0.5" fill="none" stroke="#444" stroke-width="1.2"/></svg>
<div style="position:absolute;left:663px;top:110px;width:1px;height:84px;background:#C8C8C8;"></div>
<svg style="position:absolute;left:676px;top:118px;" width="22" height="24" viewBox="0 0 22 24"><text x="2" y="10.5" font-family="Liberation Sans" font-size="12.5" fill="#444">ab</text><text x="2" y="21" font-family="Liberation Sans" font-size="12.5" fill="#444">c</text><path d="M17.5 14V16.5C17.5 18 16.5 19 15 19H11M13 17L11 19L13 21" stroke="#4A7EBB" stroke-width="1.3" fill="none"/></svg>
<div style="position:absolute;left:702.00px;top:122.14px;font-family:'Liberation Sans',sans-serif;font-size:18.5px;line-height:18.5px;color:#262626;font-weight:normal;white-space:pre;transform:scaleX(0.9401);transform-origin:0 0;">Wrap Text</div>
<svg style="position:absolute;left:488px;top:164px;" width="26" height="32" viewBox="0 0 26 32"><path d="M0 0.5H20M0 4.5H16M0 8.5H20M0 12.5H16M0 16.5H20M0 20.5H16" stroke="#666" stroke-width="1.3"/></svg>
<svg style="position:absolute;left:522px;top:164px;" width="26" height="32" viewBox="0 0 26 32"><path d="M0 0.5H20M3.2 4.5H16.6M0 8.5H20M3.2 12.5H16.6M0 16.5H20M3.2 20.5H16.6" stroke="#666" stroke-width="1.3"/></svg>
<svg style="position:absolute;left:556px;top:164px;" width="26" height="32" viewBox="0 0 26 32"><path d="M0 0.5H20M4 4.5H20M0 8.5H20M4 12.5H20M0 16.5H20M4 20.5H20" stroke="#666" stroke-width="1.3"/></svg>
<div style="position:absolute;left:586px;top:160px;width:1px;height:32px;background:#C8C8C8;"></div>
<svg style="position:absolute;left:595px;top:163px;" width="24" height="24" viewBox="0 0 24 24"><path d="M1 1.5H23M12 5.5H23M12 9.5H23M12 13.5H23M12 17.5H23M1 21.5H23" stroke="#666" stroke-width="1.3"/><path d="M1 11.5L5.5 7.5V10H10V13H5.5V15.5Z" fill="#4A7EBB"/></svg>
<svg style="position:absolute;left:629px;top:163px;" width="24" height="24" viewBox="0 0 24 24"><path d="M1 1.5H23M12 5.5H23M12 9.5H23M12 13.5H23M12 17.5H23M1 21.5H23" stroke="#666" stroke-width="1.3"/><path d="M10 11.5L5.5 7.5V10H1V13H5.5V15.5Z" fill="#4A7EBB"/></svg>
<svg style="position:absolute;left:673px;top:162px;" width="25" height="24" viewBox="0 0 25 24"><path d="M1.5 1.5H23.5V22.5H1.5ZM1.5 6.5H23.5M1.5 17.5H23.5M12.5 1.5V6.5M12.5 17.5V22.5" stroke="#B4B4B4" fill="none"/><path d="M4 12H21M4 12L7 9.5M4 12L7 14.5M21 12L18 9.5M21 12L18 14.5" stroke="#B4B4B4" fill="none"/></svg>
<div style="position:absolute;left:701.36px;top:168.54px;font-family:'Liberation Sans',sans-serif;font-size:18.5px;line-height:18.5px;color:#A6A6A6;font-weight:normal;white-space:pre;transform:scaleX(0.9716);transform-origin:0 0;">Merge &amp; Center</div>
<svg style="position:absolute;left:845px;top:176px;" width="8" height="5" viewBox="0 0 8 5"><path d="M0.5 0.5L4 4L7.5 0.5" fill="none" stroke="#A6A6A6" stroke-width="1.2"/></svg>
<div style="position:absolute;left:885px;top:112px;width:197px;height:35px;box-sizing:border-box;border:1px solid #ABABAB;background:#FFFFFF;"></div>
<div style="position:absolute;left:887.87px;top:122.04px;font-family:'Liberation Sans',sans-serif;font-size:18.5px;line-height:18.5px;color:#262626;font-weight:normal;white-space:pre;transform:scaleX(0.8990);transform-origin:0 0;">General</div>
<svg style="position:absolute;left:1067px;top:127px;" width="8" height="5" viewBox="0 0 8 5"><path d="M0 0H7.5L3.75 4Z" fill="#555"/></svg>
<svg style="position:absolute;left:886px;top:160px;" width="30" height="30" viewBox="0 0 30 30"><g transform="translate(-886 -160)"><rect x="889.3" y="164.3" width="22.6" height="12" fill="#4A7EBB"/><path d="M892 167H909V173.5H892Z" fill="#fff"/><circle cx="900.2" cy="170.3" r="2.6" fill="#4A7EBB"/><path d="M892 167.5A2.5 2.5 0 0 0 894.5 170" fill="none" stroke="#4A7EBB" stroke-width="1.3"/><g fill="#EAC27A" stroke="#F3F3F3" stroke-width="0.8"><ellipse cx="907.7" cy="179.5" rx="4.6" ry="1.8"/><ellipse cx="907.7" cy="177" rx="4.6" ry="1.8"/><ellipse cx="907.7" cy="174.5" rx="4.6" ry="1.8"/><ellipse cx="901.5" cy="184.5" rx="4.6" ry="1.8"/><ellipse cx="901.5" cy="182" rx="4.6" ry="1.8"/><ellipse cx="901.5" cy="179.5" rx="4.6" ry="1.8"/></g></g></svg>
<svg style="position:absolute;left:924px;top:175px;" width="8" height="5" viewBox="0 0 8 5"><path d="M0.5 0.5L4 4L7.5 0.5" fill="none" stroke="#444" stroke-width="1.2"/></svg>
<div style="position:absolute;left:946.30px;top:164.93px;font-family:'Liberation Sans',sans-serif;font-size:23px;line-height:23px;color:#555555;font-weight:normal;white-space:pre;transform:scaleX(1.0162);transform-origin:0 0;">%</div>
<svg style="position:absolute;left:985px;top:167px;" width="11" height="15" viewBox="0 0 11 15"><circle cx="6" cy="5" r="4.3" fill="#555"/><path d="M9.5 6C9.5 10 7 13 3 14" stroke="#555" stroke-width="2.4" fill="none"/></svg>
<div style="position:absolute;left:1011px;top:160px;width:1px;height:32px;background:#C8C8C8;"></div>
<svg style="position:absolute;left:1018px;top:160px;" width="62" height="28" viewBox="0 0 62 28"><g transform="translate(-1018 -160)"><path d="M1030 168.6H1022M1022 168.6L1025.3 165.3M1022 168.6L1025.3 171.9" stroke="#4A7EBB" stroke-width="2" fill="none"/><text x="1031" y="172.8" font-family="Liberation Sans" font-size="11.5" fill="#444">.0</text><text x="1023.5" y="184.8" font-family="Liberation Sans" font-size="11.5" fill="#444">.00</text><text x="1057.5" y="172.8" font-family="Liberation Sans" font-size="11.5" fill="#444">.00</text><path d="M1055 180.9H1063M1063 180.9L1059.7 177.6M1063 180.9L1059.7 184.2" stroke="#4A7EBB" stroke-width="2" fill="none"/><text x="1064.8" y="184.8" font-family="Liberation Sans" font-size="11.5" fill="#444">.0</text></g></svg>
<svg style="position:absolute;left:1136px;top:100px;" width="240" height="56" viewBox="0 0 240 56"><g transform="translate(-1136 -100)"><rect x="1142.3" y="107.3" width="39" height="32" fill="#fff"/><rect x="1154.5" y="107.8" width="8.4" height="7.6" fill="#E0673A"/><rect x="1154.5" y="115.9" width="13.3" height="7.6" fill="#4A7EBB"/><rect x="1154.5" y="124" width="10.5" height="7.4" fill="#E0673A"/><rect x="1154.5" y="131.9" width="5.5" height="7.2" fill="#4A7EBB"/><path d="M1142.3 107.3H1181.3V139.4H1142.3ZM1142.3 115.5H1154.5M1162.9 115.5H1181.3M1142.3 123.6H1154.5M1167.8 123.6H1181.3M1142.3 131.5H1154.5M1165 131.5H1181.3M1169.6 107.3V123.6M1169.6 131.5V139.4" fill="none" stroke="#8A8A8A" stroke-width="1"/><rect x="1165.5" y="134.5" width="20" height="16" fill="#fff" stroke="#7A7A7A"/><path d="M1171.5 141H1180M1171.5 144.5H1180M1178 138.5L1173.5 147" stroke="#444" stroke-width="1.1"/><rect x="1241" y="110.5" width="40.5" height="32" fill="#fff"/><rect x="1252" y="118.5" width="29.5" height="24" fill="#C2D5EC"/><path d="M1241.5 110.5H1281.5V142.5H1241.5ZM1241.5 118.5H1281.5M1241.5 126.5H1281.5M1241.5 134.5H1281.5M1252 110.5V142.5M1262 110.5V142.5M1272 110.5V142.5" fill="none" stroke="#8A8A8A"/><path d="M1270.5 136L1285 120V128.5L1274.5 139.5Z" fill="#7E7E7E"/><path d="M1267.5 138.5L1270.5 136L1273.5 139.5L1271 142Z" fill="#7E7E7E"/><path d="M1252 151.5C1256 146 1260 142 1265 140.5C1268 140 1271 142 1271.5 145C1271 149 1267 151.5 1260 151.5Z" fill="#4A7EBB"/><path d="M1265.5 141.5C1268 141 1270 143 1269.5 146C1268 145 1266.5 143.5 1265.5 141.5Z" fill="#fff"/><rect x="1317" y="107.3" width="40.5" height="32" fill="#fff"/><rect x="1324.5" y="114.5" width="25.5" height="18" fill="#C2D5EC"/><path d="M1317.5 107.3H1357.5V139.3H1317.5ZM1317.5 114.5H1357.5M1317.5 132.5H1357.5M1324.5 107.3V139.3M1350 107.3V139.3" fill="none" stroke="#8A8A8A"/><path d="M1346.5 133L1361 117V125.5L1350.5 136.5Z" fill="#7E7E7E"/><path d="M1343.5 135.5L1346.5 133L1349.5 136.5L1347 139Z" fill="#7E7E7E"/><path d="M1328 148.5C1332 143 1336 139 1341 137.5C1344 137 1347 139 1347.5 142C1347 146 1343 148.5 1336 148.5Z" fill="#4A7EBB"/><path d="M1341.5 138.5C1344 138 1346 140 1345.5 143C1344 142 1342.5 140.5 1341.5 138.5Z" fill="#fff"/></g></svg>
<div style="position:absolute;left:1115.37px;top:158.84px;font-family:'Liberation Sans',sans-serif;font-size:18.5px;line-height:18.5px;color:#262626;font-weight:normal;white-space:pre;">Conditional</div>
<div style="position:absolute;left:1108.42px;top:182.84px;font-family:'Liberation Sans',sans-serif;font-size:18.5px;line-height:18.5px;color:#262626;font-weight:normal;white-space:pre;">Formatting</div>
<svg style="position:absolute;left:1205px;top:189px;" width="8" height="5" viewBox="0 0 8 5"><path d="M0.5 0.5L4 4L7.5 0.5" fill="none" stroke="#444" stroke-width="1.2"/></svg>
<div style="position:absolute;left:1220.60px;top:158.84px;font-family:'Liberation Sans',sans-serif;font-size:18.5px;line-height:18.5px;color:#262626;font-weight:normal;white-space:pre;transform:scaleX(0.9491);transform-origin:0 0;">Format as</div>
<div style="position:absolute;left:1231.86px;top:182.84px;font-family:'Liberation Sans',sans-serif;font-size:18.5px;line-height:18.5px;color:#262626;font-weight:normal;white-space:pre;transform:scaleX(0.9216);transform-origin:0 0;">Table</div>
<svg style="position:absolute;left:1280px;top:189px;" width="8" height="5" viewBox="0 0 8 5"><path d="M0.5 0.5L4 4L7.5 0.5" fill="none" stroke="#444" stroke-width="1.2"/></svg>
<div style="position:absolute;left:1323.56px;top:158.84px;font-family:'Liberation Sans',sans-serif;font-size:18.5px;line-height:18.5px;color:#262626;font-weight:normal;white-space:pre;transform:scaleX(0.9096);transform-origin:0 0;">Cell</div>
<div style="position:absolute;left:1306.74px;top:182.84px;font-family:'Liberation Sans',sans-serif;font-size:18.5px;line-height:18.5px;color:#262626;font-weight:normal;white-space:pre;transform:scaleX(0.8883);transform-origin:0 0;">Styles</div>
<svg style="position:absolute;left:1360px;top:189px;" width="8" height="5" viewBox="0 0 8 5"><path d="M0.5 0.5L4 4L7.5 0.5" fill="none" stroke="#444" stroke-width="1.2"/></svg>
<svg style="position:absolute;left:1405px;top:106px;" width="46" height="45" viewBox="0 0 46 45"><path d="M6.5 1.5H28.5V9.5H6.5ZM17.5 1.5V9.5" stroke="#7A7A7A" fill="#fff"/><path d="M20.5 14.5H43.5V22.5H20.5ZM32 14.5V22.5" stroke="#7A7A7A" fill="#BFD3EA"/><path d="M1 18.5L7 13V16.5H16V20.5H7V24Z" fill="#4A7EBB"/><path d="M6.5 27.5H28.5V43.5H6.5ZM17.5 27.5V43.5M6.5 35.5H28.5" stroke="#7A7A7A" fill="#fff"/></svg>
<div style="position:absolute;left:1405.40px;top:159.14px;font-family:'Liberation Sans',sans-serif;font-size:18.5px;line-height:18.5px;color:#262626;font-weight:normal;white-space:pre;transform:scaleX(0.9632);transform-origin:0 0;">Insert</div>
<svg style="position:absolute;left:1424px;top:188px;" width="8" height="5" viewBox="0 0 8 5"><path d="M0.5 0.5L4 4L7.5 0.5" fill="none" stroke="#444" stroke-width="1.2"/></svg>
<svg style="position:absolute;left:1470px;top:106px;" width="46" height="45" viewBox="0 0 46 45"><path d="M1.5 1.5H23.5V9.5H1.5ZM12.5 1.5V9.5" stroke="#7A7A7A" fill="#fff"/><path d="M8.5 14.5H31.5V22.5H8.5ZM20 14.5V22.5" stroke="#7A7A7A" fill="#BFD3EA"/><path d="M1.5 27.5H23.5V43.5H1.5ZM12.5 27.5V43.5M1.5 35.5H23.5" stroke="#7A7A7A" fill="#fff"/><path d="M23 29C28 21 35 15 43 12M24 11C31 16 37 22 42 29" stroke="#E0673A" stroke-width="2.8" fill="none" stroke-linecap="round"/></svg>
<div style="position:absolute;left:1464.59px;top:159.14px;font-family:'Liberation Sans',sans-serif;font-size:18.5px;line-height:18.5px;color:#262626;font-weight:normal;white-space:pre;transform:scaleX(0.9546);transform-origin:0 0;">Delete</div>
<svg style="position:absolute;left:1488px;top:188px;" width="8" height="5" viewBox="0 0 8 5"><path d="M0.5 0.5L4 4L7.5 0.5" fill="none" stroke="#444" stroke-width="1.2"/></svg>
<div style="position:absolute;left:1521px;top:100px;width:64px;height:105px;box-sizing:border-box;border:1px solid #9E9E9E;background:#C6C6C6;"></div>
<svg style="position:absolute;left:1530px;top:104px;" width="44" height="48" viewBox="0 0 44 48"><path d="M2.5 1.5V9.5M35.5 1.5V9.5M5 5.5H33M5 5.5L9 2M5 5.5L9 9M33 5.5L29 2M33 5.5L29 9" stroke="#4A7EBB" stroke-width="1.8" fill="none"/><rect x="2.5" y="13.5" width="38" height="28" fill="#fff" stroke="#8A8A8A"/><path d="M2.5 20.5H40.5M2.5 34.5H40.5M12.5 13.5V41.5M22.5 13.5V41.5M32.5 13.5V41.5" stroke="#8A8A8A"/><rect x="12" y="21" width="11" height="14" fill="#4A7EBB"/><path d="M3 42L3 47H14L17 42M17 47H29L32 42" stroke="#8A8A8A" fill="#fff"/></svg>
<div style="position:absolute;left:1523.55px;top:159.14px;font-family:'Liberation Sans',sans-serif;font-size:18.5px;line-height:18.5px;color:#262626;font-weight:normal;white-space:pre;transform:scaleX(0.9799);transform-origin:0 0;">Format</div>
<svg style="position:absolute;left:1549px;top:188px;" width="8" height="5" viewBox="0 0 8 5"><path d="M0.5 0.5L4 4L7.5 0.5" fill="none" stroke="#444" stroke-width="1.2"/></svg>
<svg style="position:absolute;left:1615px;top:105px;" width="20" height="21" viewBox="0 0 20 21"><path d="M17.5 4.5V1.5H2L10 10.5L2 19.5H17.5V16.5" fill="none" stroke="#444" stroke-width="2.7" stroke-linejoin="miter"/></svg>
<svg style="position:absolute;left:1648px;top:116px;" width="8" height="5" viewBox="0 0 8 5"><path d="M0.5 0.5L4 4L7.5 0.5" fill="none" stroke="#444" stroke-width="1.2"/></svg>
<svg style="position:absolute;left:1613px;top:137px;" width="23" height="25" viewBox="0 0 23 25"><rect x="1.5" y="1.5" width="20" height="22" fill="#fff" stroke="#7A7A7A"/><rect x="1" y="1" width="21" height="4" fill="#7A7A7A"/><path d="M11.5 8V18M7 13.5L11.5 18L16 13.5" stroke="#4A7EBB" stroke-width="2.2" fill="none"/></svg>
<svg style="position:absolute;left:1644px;top:151px;" width="8" height="5" viewBox="0 0 8 5"><path d="M0.5 0.5L4 4L7.5 0.5" fill="none" stroke="#444" stroke-width="1.2"/></svg>
<svg style="position:absolute;left:1613px;top:172px;" width="24" height="24" viewBox="0 0 24 24"><g transform="rotate(-40 12 12)"><rect x="2" y="7" width="20" height="10" rx="2" fill="#E8758D"/><rect x="2" y="7" width="7" height="10" rx="2" fill="#F09AAE"/></g></svg>
<svg style="position:absolute;left:1644px;top:185px;" width="8" height="5" viewBox="0 0 8 5"><path d="M0.5 0.5L4 4L7.5 0.5" fill="none" stroke="#444" stroke-width="1.2"/></svg>
<div style="position:absolute;left:1675.00px;top:105.18px;font-family:'Liberation Sans',sans-serif;font-size:22px;line-height:22px;color:#A6A6A6;font-weight:normal;white-space:pre;transform:scaleX(1.0651);transform-origin:0 0;">A</div>
<div style="position:absolute;left:1674.87px;top:127.20px;font-family:'Liberation Sans',sans-serif;font-size:21.5px;line-height:21.5px;color:#A6A6A6;font-weight:normal;white-space:pre;transform:scaleX(1.1332);transform-origin:0 0;">Z</div>
<svg style="position:absolute;left:1693px;top:116px;" width="25" height="23" viewBox="0 0 25 23"><path d="M1 1H23L14.5 10V22H10V10Z" fill="#A6A6A6"/><path d="M3 2.5H21" stroke="#fff" stroke-width="0.0"/></svg>
<div style="position:absolute;left:1670.05px;top:159.04px;font-family:'Liberation Sans',sans-serif;font-size:18.5px;line-height:18.5px;color:#A6A6A6;font-weight:normal;white-space:pre;transform:scaleX(1.0131);transform-origin:0 0;">Sort &amp;</div>
<div style="position:absolute;left:1667.92px;top:183.04px;font-family:'Liberation Sans',sans-serif;font-size:18.5px;line-height:18.5px;color:#A6A6A6;font-weight:normal;white-space:pre;transform:scaleX(0.9292);transform-origin:0 0;">Filter</div>
<svg style="position:absolute;left:1713px;top:189px;" width="8" height="5" viewBox="0 0 8 5"><path d="M0.5 0.5L4 4L7.5 0.5" fill="none" stroke="#A6A6A6" stroke-width="1.2"/></svg>
<svg style="position:absolute;left:1741px;top:107px;" width="42" height="42" viewBox="0 0 42 42"><circle cx="25" cy="15.5" r="12.5" fill="#fff" stroke="#4A7EBB" stroke-width="3.2"/><path d="M16 25L3 38" stroke="#4A7EBB" stroke-width="4.4" stroke-linecap="round"/></svg>
<div style="position:absolute;left:1734.52px;top:159.04px;font-family:'Liberation Sans',sans-serif;font-size:18.5px;line-height:18.5px;color:#262626;font-weight:normal;white-space:pre;transform:scaleX(0.9969);transform-origin:0 0;">Find &amp;</div>
<div style="position:absolute;left:1730.04px;top:183.04px;font-family:'Liberation Sans',sans-serif;font-size:18.5px;line-height:18.5px;color:#262626;font-weight:normal;white-space:pre;transform:scaleX(0.8873);transform-origin:0 0;">Select</div>
<svg style="position:absolute;left:1783px;top:189px;" width="8" height="5" viewBox="0 0 8 5"><path d="M0.5 0.5L4 4L7.5 0.5" fill="none" stroke="#444" stroke-width="1.2"/></svg>
<svg style="position:absolute;left:1885px;top:213px;" width="26" height="15" viewBox="0 0 26 15"><path d="M0 7.5H11" stroke="#6E6E6E" stroke-width="1.3"/><path d="M9 1.5H12L15 5H21L24 0.5V14.5L21 10H15L12 13.5H9Z" fill="#6E6E6E"/></svg>
<svg style="position:absolute;left:1114px;top:60px;" width="20" height="26" viewBox="0 0 20 26"><path d="M6 17.5C5 15 2.5 13 2.5 9C2.5 5 5.5 1.5 10 1.5C14.5 1.5 17.5 5 17.5 9C17.5 13 15 15 14 17.5" fill="none" stroke="#fff" stroke-width="1.5"/><path d="M5.8 17.8H14.2V21.4H5.8Z" fill="none" stroke="#fff" stroke-width="1.4"/><path d="M7 24.3H13" stroke="#fff" stroke-width="1.5"/></svg>
<svg style="position:absolute;left:1666px;top:14px;" width="22" height="18" viewBox="0 0 22 18"><rect x="1" y="1" width="20" height="16" fill="none" stroke="#fff" stroke-width="1.3"/><path d="M1 4.5H21" stroke="#fff" stroke-width="1.3"/><path d="M11 15V8M8 10.5L11 7.5L14 10.5" stroke="#fff" stroke-width="1.4" fill="none"/></svg>
<div style="position:absolute;left:1739px;top:21px;width:16px;height:2px;background:#FFFFFF;"></div>
<svg style="position:absolute;left:1807px;top:14px;" width="18" height="18" viewBox="0 0 18 18"><rect x="1" y="5" width="11.5" height="11.5" rx="2" fill="none" stroke="#fff" stroke-width="1.4"/><path d="M4.5 2H13.5C15 2 16 3 16 4.5V13" fill="none" stroke="#fff" stroke-width="1.4"/></svg>
<svg style="position:absolute;left:1876px;top:14px;" width="18" height="18" viewBox="0 0 18 18"><path d="M1 1L17 17M17 1L1 17" stroke="#fff" stroke-width="1.5"/></svg>
<svg style="position:absolute;left:1873px;top:63px;" width="24" height="22" viewBox="0 0 24 22"><path d="M1 1H23V16H8L4 20V16H1Z" fill="none" stroke="#fff" stroke-width="1.3"/></svg>
<svg style="position:absolute;left:80px;top:981px;" width="22" height="21" viewBox="0 0 22 21"><path d="M9 3.5H20.5V19.5H3.5V8" fill="none" stroke="#555" stroke-width="1.3"/><rect x="9" y="3" width="12" height="3.5" fill="#555"/><circle cx="5.5" cy="5.5" r="4.5" fill="#555"/><path d="M6 11.5H19M6 14.5H19M6 17H19" stroke="#555" stroke-width="1.1" stroke-dasharray="3 1.5"/></svg>
<svg style="position:absolute;left:128px;top:980px;" width="24" height="25" viewBox="0 0 24 25"><path d="M8 4.5A9.5 9.5 0 0 0 11 21.5" fill="none" stroke="#555" stroke-width="1.6" stroke-dasharray="3 1.6"/><path d="M10.5 1V12M8 9.5L10.5 12L13 9.5M11 9.5H20.5M18 7L20.5 9.5L18 12" stroke="#555" stroke-width="1.5" fill="none"/><path d="M12 15L22 23.5M22 15L12 23.5" stroke="#555" stroke-width="2.2"/></svg>
<svg style="position:absolute;left:1494px;top:982px;" width="20" height="19" viewBox="0 0 20 19"><path d="M1 1H19V18H1ZM1 6.5H19M1 12H19M7 1V18M13 1V18" fill="none" stroke="#666" stroke-width="1.1"/></svg>
<svg style="position:absolute;left:1554px;top:981px;" width="21" height="21" viewBox="0 0 21 21"><rect x="1" y="1" width="19" height="19" fill="none" stroke="#666" stroke-width="1.1"/><rect x="4.5" y="4" width="12" height="13" fill="none" stroke="#666" stroke-width="1"/><path d="M7 7.5H14M7 10.5H14M7 13.5H14" stroke="#666" stroke-width="1"/></svg>
<svg style="position:absolute;left:1614px;top:981px;" width="21" height="21" viewBox="0 0 21 21"><path d="M1 1H20V20H1Z" fill="none" stroke="#666" stroke-width="1.1"/><path d="M1 12H20M9 1V12" stroke="#666" stroke-width="1.6"/></svg>
<div style="position:absolute;left:1662px;top:991px;width:13px;height:1.5px;background:#555;"></div>
<div style="position:absolute;left:1682px;top:991px;width:148px;height:1.5px;background:#555;"></div>
<div style="position:absolute;left:1742px;top:983px;width:8px;height:17px;background:#555;"></div>
<div style="position:absolute;left:1756px;top:986px;width:1.5px;height:10px;background:#555;"></div>
<svg style="position:absolute;left:1838px;top:984px;" width="13" height="13" viewBox="0 0 13 13"><path d="M6.5 0V13M0 6.5H13" stroke="#555" stroke-width="1.4"/></svg>
<svg style="position:absolute;left:1528px;top:253px;" width="26" height="24" viewBox="0 0 26 24"><path d="M5.5 1.5V22.5M2 5L5.5 1.5L9 5M2 19L5.5 22.5L9 19" fill="none" stroke="#4A7EBB" stroke-width="1.3"/><path d="M24 1.5H12.5V22.5H24" fill="none" stroke="#777" stroke-width="1.2"/></svg>
<svg style="position:absolute;left:1528px;top:330px;" width="26" height="24" viewBox="0 0 26 24"><path d="M2 10V1.5H23V10" fill="none" stroke="#777" stroke-width="1.2"/><path d="M2 19H23M5.5 15.5L2 19L5.5 22.5M19.5 15.5L23 19L19.5 22.5" fill="none" stroke="#4A7EBB" stroke-width="1.3"/></svg>
<svg style="position:absolute;left:1529px;top:700px;" width="25" height="24" viewBox="0 0 25 24"><path d="M1.5 1.5H22.5V17.5H1.5ZM1.5 5.5H22.5M1.5 9.5H22.5M1.5 13.5H22.5M7.5 1.5V17.5M13.5 1.5V17.5" fill="none" stroke="#8A8A8A" stroke-width="0.9"/><rect x="12" y="13" width="11" height="10" rx="1" fill="#EAC282"/><path d="M14 13.5V10.5C14 8 15.5 7 17.5 7C19.5 7 21 8 21 10.5V13.5" fill="none" stroke="#EAC282" stroke-width="1.8"/><path d="M17.5 16V20" stroke="#fff" stroke-width="1.3"/></svg>
<div style="position:absolute;left:1526px;top:734px;width:30px;height:30px;box-sizing:border-box;border:1px solid #A8A8A8;background:#C6C6C6;"></div>
<svg style="position:absolute;left:1531px;top:738px;" width="20" height="22" viewBox="0 0 20 22"><rect x="1.5" y="9" width="17" height="12" rx="1.5" fill="#EAC282"/><path d="M4.5 9.5V6C4.5 3 7 1.5 10 1.5C13 1.5 15.5 3 15.5 6V9.5" fill="none" stroke="#EAC282" stroke-width="2.2"/><path d="M10 13V17" stroke="#C6C6C6" stroke-width="1.5"/></svg>
<svg style="position:absolute;left:1531px;top:777px;" width="22" height="24" viewBox="0 0 22 24"><rect x="1.5" y="1.5" width="19" height="21" fill="#fff" stroke="#7A7A7A"/><rect x="1" y="1" width="20" height="4" fill="#4A7EBB"/><circle cx="5" cy="9.5" r="1.4" fill="none" stroke="#555"/><circle cx="5" cy="14" r="1.4" fill="none" stroke="#555"/><circle cx="5" cy="18.5" r="1.4" fill="none" stroke="#555"/><path d="M8 9.5H18M8 14H18M8 18.5H18" stroke="#555" stroke-width="1"/></svg>
</body></html>
